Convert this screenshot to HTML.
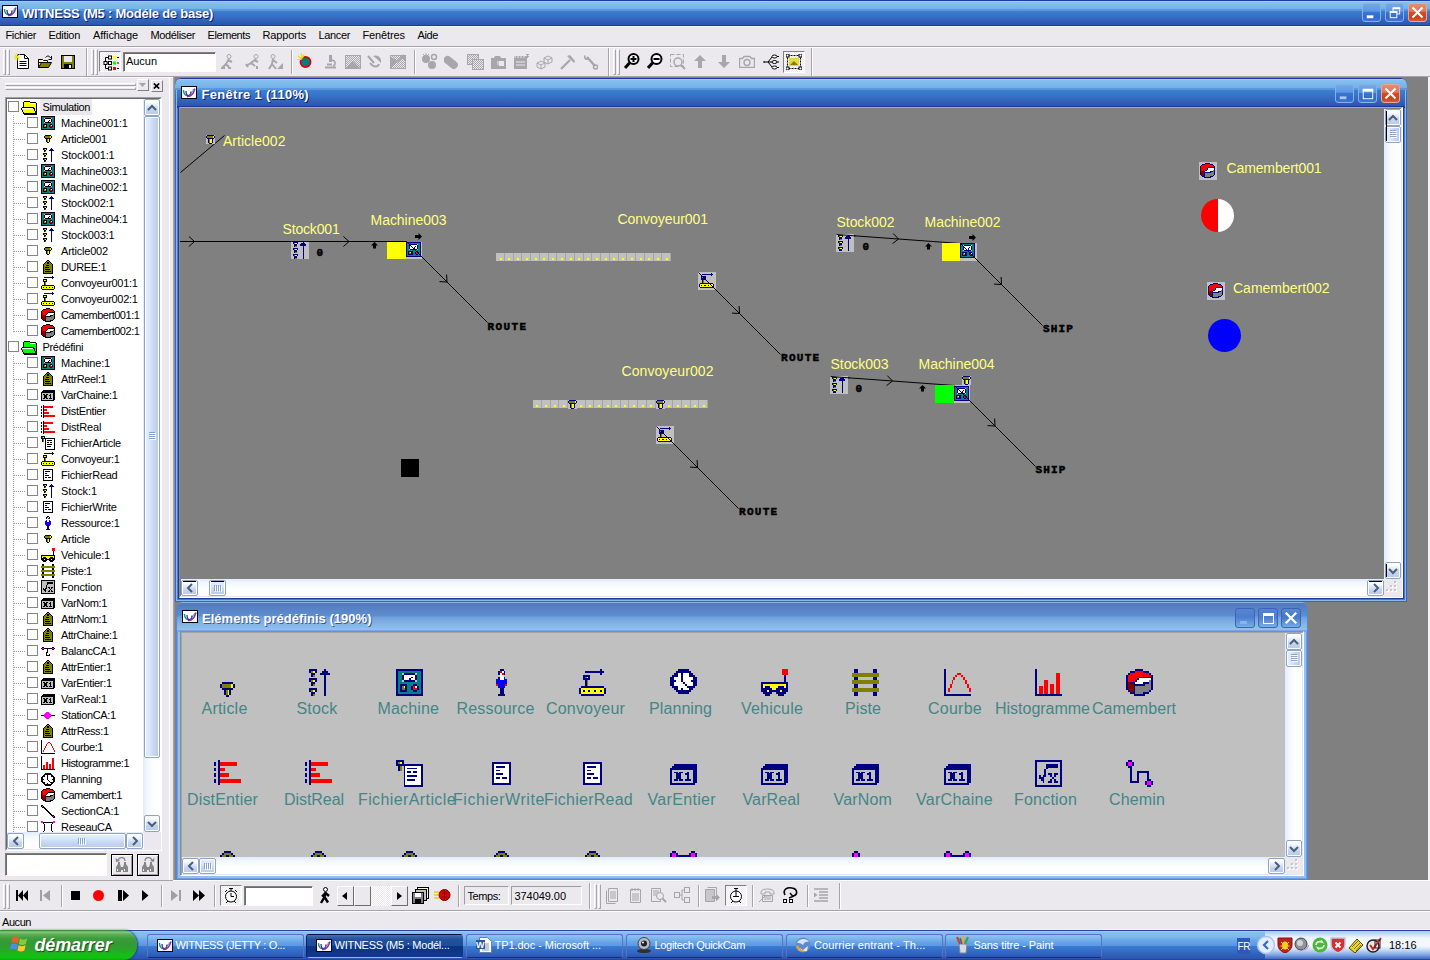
<!DOCTYPE html><html lang="fr"><head><meta charset="utf-8"><title>WITNESS (M5 : Modéle de base)</title><style>
html,body{margin:0;padding:0}
body{width:1430px;height:960px;overflow:hidden;position:relative;background:#ebe9ed;font-family:"Liberation Sans",sans-serif;font-size:11px;}
div,span.t,svg.ic,svg.ab{position:absolute;box-sizing:border-box}
span.t{white-space:nowrap;display:block}
.ttl{background:linear-gradient(#1f3da0 0,#1f3da0 1px,#9ccef4 1px,#9ccef4 2px,#86c2ec 2px,#72b0ea 9px,#5c98e0 9px,#5a94de 11px,#3a80d0 11px,#3672c6 16px,#3160b8 21px,#2c54b0 25px,#1a3a94 25px);}
.sunk{border:1px solid;border-color:#808080 #fff #fff #808080}
.sunk2{border:1px solid;border-color:#9d9da1 #fff #fff #9d9da1}
.btn3d{border:1px solid;border-color:#fff #6d6d6d #6d6d6d #fff;background:#ebe9ed}
.sbtn{background:linear-gradient(#e4edfd,#c6d6f8 60%,#b7caf5);border:1px solid #fff;border-radius:3px;box-shadow:inset 0 0 0 1px #b4c8f0}
.vtrack{background:linear-gradient(90deg,#f3f1ec,#fefefb 40%,#fefefb)}
</style></head><body><div class="ttl" style="left:0px;top:0px;width:1430px;height:26px;"></div><svg class="ab" style="left:2px;top:5px" width="16" height="13" viewBox="0 0 16 13"><rect x="0" y="0" width="16" height="13" fill="#000"/><rect x="1" y="1" width="14" height="11" fill="#fff"/><path d="M2.500 4C2.500 8 4.500 10.500 8 9.500" stroke="#0a9a8a" stroke-width="1.400" fill="none"/><path d="M5 5C5 8 6 10 8 9.500C9.500 9 10 7 10 5.500" stroke="#3a2a9c" stroke-width="1.300" fill="none"/><path d="M6 10.500C9.500 11 12.500 7.500 14 2.500" stroke="#9a2ab0" stroke-width="1.500" fill="none"/><path d="M9 8C10.500 7 12 5 12.500 3" stroke="#1a8a9a" stroke-width="0.800" fill="none"/></svg><span class="t" style="left:22px;top:6px;line-height:15px;font-size:13px;color:#fff;font-weight:bold;letter-spacing:-0.239px;text-shadow:1px 1px 0 #0a1e6e;">WITNESS (M5 : Modéle de base)</span><div style="left:1362px;top:3px;width:19px;height:19px;background:linear-gradient(#74a8e8 0,#5c98e4 42%,#3a74d4 50%,#3468cc 80%,#4078d4 100%);border:1px solid #86b0e8;border-radius:3px;"></div><svg class="ab" style="left:1362px;top:3px" width="19" height="19" viewBox="0 0 20 20"><rect x="5" y="13" width="7" height="3" fill="#fff"/></svg><div style="left:1385px;top:3px;width:19px;height:19px;background:linear-gradient(#74a8e8 0,#5c98e4 42%,#3a74d4 50%,#3468cc 80%,#4078d4 100%);border:1px solid #86b0e8;border-radius:3px;"></div><svg class="ab" style="left:1385px;top:3px" width="19" height="19" viewBox="0 0 20 20"><rect x="8.500" y="5.500" width="7" height="6" fill="none" stroke="#fff"/><rect x="8" y="4.500" width="8" height="2" fill="#fff"/><rect x="5.500" y="9.500" width="7" height="6" fill="#3c74d4" stroke="#fff"/><rect x="5" y="8.500" width="8" height="2" fill="#fff"/></svg><div style="left:1408px;top:3px;width:19px;height:19px;background:linear-gradient(#e08c74 0,#e47858 42%,#d44c24 50%,#cc4218 80%,#d85c38 100%);border:1px solid #e8a890;border-radius:3px;"></div><svg class="ab" style="left:1408px;top:3px" width="19" height="19" viewBox="0 0 20 20"><path d="M5.5 5.500L14.500 14.500M14.500 5.500L5.500 14.500" stroke="#fff" stroke-width="2.200" stroke-linecap="square"/></svg><div style="left:0px;top:26px;width:1430px;height:1px;background:#f6f4f4"></div><span class="t" style="left:5.5px;top:29px;line-height:12px;font-size:11px;color:#000;letter-spacing:-0.359px;">Fichier</span><span class="t" style="left:48.5px;top:29px;line-height:12px;font-size:11px;color:#000;letter-spacing:-0.306px;">Edition</span><span class="t" style="left:93px;top:29px;line-height:12px;font-size:11px;color:#000;letter-spacing:-0.075px;">Affichage</span><span class="t" style="left:150.5px;top:29px;line-height:12px;font-size:11px;color:#000;letter-spacing:-0.354px;">Modéliser</span><span class="t" style="left:207.5px;top:29px;line-height:12px;font-size:11px;color:#000;letter-spacing:-0.420px;">Elements</span><span class="t" style="left:262.5px;top:29px;line-height:12px;font-size:11px;color:#000;letter-spacing:-0.143px;">Rapports</span><span class="t" style="left:318.5px;top:29px;line-height:12px;font-size:11px;color:#000;letter-spacing:-0.357px;">Lancer</span><span class="t" style="left:362.5px;top:29px;line-height:12px;font-size:11px;color:#000;letter-spacing:-0.115px;">Fenêtres</span><span class="t" style="left:417.5px;top:29px;line-height:12px;font-size:11px;color:#000;letter-spacing:-0.383px;">Aide</span><div style="left:0px;top:46px;width:1430px;height:1px;background:#a6a4a8"></div><div style="left:0px;top:47px;width:1430px;height:1px;background:#fff"></div><div style="left:3px;top:49px;width:3px;height:26px;border-left:1px solid #fff;border-top:1px solid #fff;border-right:1px solid #a6a4a8;border-bottom:1px solid #a6a4a8"></div><div style="left:7px;top:49px;width:3px;height:26px;border-left:1px solid #fff;border-top:1px solid #fff;border-right:1px solid #a6a4a8;border-bottom:1px solid #a6a4a8"></div><div style="left:86px;top:48px;width:1px;height:28px;background:#a6a4a8"></div><div style="left:87px;top:48px;width:1px;height:28px;background:#fff"></div><div style="left:91px;top:49px;width:3px;height:26px;border-left:1px solid #fff;border-top:1px solid #fff;border-right:1px solid #a6a4a8;border-bottom:1px solid #a6a4a8"></div><div style="left:95px;top:49px;width:3px;height:26px;border-left:1px solid #fff;border-top:1px solid #fff;border-right:1px solid #a6a4a8;border-bottom:1px solid #a6a4a8"></div><div style="left:608px;top:48px;width:1px;height:28px;background:#a6a4a8"></div><div style="left:609px;top:48px;width:1px;height:28px;background:#fff"></div><div style="left:613px;top:49px;width:3px;height:26px;border-left:1px solid #fff;border-top:1px solid #fff;border-right:1px solid #a6a4a8;border-bottom:1px solid #a6a4a8"></div><div style="left:617px;top:49px;width:3px;height:26px;border-left:1px solid #fff;border-top:1px solid #fff;border-right:1px solid #a6a4a8;border-bottom:1px solid #a6a4a8"></div><div style="left:811px;top:48px;width:1px;height:28px;background:#a6a4a8"></div><div style="left:812px;top:48px;width:1px;height:28px;background:#fff"></div><div style="left:0px;top:76px;width:1430px;height:1px;background:#a6a4a8"></div><svg class="ab" style="left:14px;top:54px" width="16" height="15" viewBox="0 0 16 15"><path d="M3.500 0.500H10.500L14.500 4.500V14.500H3.500Z" fill="#fff" stroke="#000"/><path d="M10.500 0.500V4.500H14.500" fill="none" stroke="#000"/><path d="M5.500 7.500H12.500M5.500 9.500H12.500M5.500 11.500H12.500" stroke="#000"/><path d="M0.500 0.500L5.500 5.500M5.500 0.500L0.500 5.500M3 0V6.500M0 3H6.500" stroke="#e8e000" stroke-width="1"/></svg><svg class="ab" style="left:37px;top:54px" width="16" height="15" viewBox="0 0 16 15"><path d="M1.5 5.5H5.5L6.5 6.5H10.5V8.5H1.5Z" fill="#ffff80" stroke="#000"/><path d="M1.5 13.5L4.5 8.5H14.5L11.5 13.5Z" fill="#808000" stroke="#000"/><path d="M1.5 13.5V5.5" stroke="#000"/><path d="M8.5 3.5C10 1.5 12.5 1.5 13.5 4" fill="none" stroke="#000"/><path d="M14.5 2V5.5H11.5" fill="none" stroke="#000"/></svg><svg class="ab" style="left:61px;top:55px" width="14" height="14" viewBox="0 0 14 14"><rect x="0.5" y="0.5" width="13" height="13" fill="#808000" stroke="#000"/><rect x="3" y="1" width="8" height="6" fill="#ebe9ed"/><rect x="3" y="9" width="8" height="5" fill="#000"/><rect x="8" y="10" width="2" height="3" fill="#ebe9ed"/></svg><div style="left:99px;top:51px;width:22px;height:21px;background:repeating-conic-gradient(#fff 0 25%,#ebe9ed 0 50%) 0 0/2px 2px;border:1px solid;border-color:#808080 #fff #fff #808080"></div><svg class="ab" style="left:103px;top:55px" width="16" height="16" viewBox="0 0 16 16"><path d="M2.5 2.5V13.5M2.5 2.5H6M2.5 8H6M2.5 13.5H6" fill="none" stroke="#000"/><rect x="5.500" y="1" width="3" height="3" fill="#fff" stroke="#000"/><rect x="5.500" y="6.500" width="3" height="3" fill="#fff" stroke="#000"/><rect x="5.500" y="12" width="3" height="3" fill="#fff" stroke="#000"/><rect x="1" y="6.500" width="3" height="3" fill="#fff" stroke="#000"/><rect x="10" y="1" width="3" height="3" fill="#ff0"/><rect x="10" y="6.500" width="3" height="3" fill="#0f0"/><rect x="10" y="12" width="3" height="3" fill="#f00"/><path d="M14 2.500H16M14 8H16M14 13.500H16" stroke="#000"/></svg><div style="left:123px;top:52px;width:93px;height:20px;background:#fff;border:1px solid;border-color:#808080 #fff #fff #808080;box-shadow:inset 1px 1px 0 #6a6a6e"></div><span class="t" style="left:126px;top:55px;line-height:12px;font-size:11px;color:#000;letter-spacing:-0.041px;">Aucun</span><svg class="ab" style="left:220px;top:54px" width="16" height="16" viewBox="0 0 16 16"><circle cx="9" cy="2.500" r="2" fill="none" stroke="#a8a6aa"/><path d="M9 5L6 10L9 13M6 10L2 14M8 6L12 8M5 14H1M11 14H8" stroke="#a8a6aa" stroke-width="2" fill="none"/></svg><svg class="ab" style="left:245px;top:54px" width="16" height="16" viewBox="0 0 16 16"><circle cx="11" cy="2.500" r="2" fill="none" stroke="#a8a6aa"/><path d="M11 5L6 9L10 12M6 9L1 12M9 6L13 8M1 10L3 13M12 12V15" stroke="#a8a6aa" stroke-width="2" fill="none"/></svg><svg class="ab" style="left:268px;top:54px" width="16" height="16" viewBox="0 0 16 16"><circle cx="5" cy="2.500" r="2" fill="none" stroke="#a8a6aa"/><path d="M5 5L4 10L1 15M4 10L8 15M5 6L9 9" stroke="#a8a6aa" stroke-width="2" fill="none"/><path d="M9 15H15V9Z" fill="#a8a6aa"/></svg><div style="left:291px;top:50px;width:1px;height:24px;background:#a6a4a8"></div><div style="left:292px;top:50px;width:1px;height:24px;background:#fff"></div><svg class="ab" style="left:297px;top:53px" width="16" height="16" viewBox="0 0 16 16"><circle cx="8.500" cy="9" r="5" fill="#008080" stroke="#e00000" stroke-width="1.800"/><path d="M1 3L5 6M4 0.500L5.500 5M0.500 6.500H4.500M7 1.500L5.500 5" stroke="#e8e000" stroke-width="1.200"/></svg><svg class="ab" style="left:324px;top:54px" width="13" height="15" viewBox="0 0 13 15"><path d="M5 1H8V8H5Z" fill="#a8a6aa"/><path d="M8 6C12 7 12 11 9 12" fill="none" stroke="#a8a6aa" stroke-width="1.500"/><path d="M1 13.500H12M3 10.500H8" stroke="#a8a6aa" stroke-width="2"/></svg><div style="left:345px;top:55px;width:16px;height:14px;background:repeating-conic-gradient(#a8a6aa 0 25%,#ebe9ed 0 50%) 0 0/2px 2px;border:1px solid #a8a6aa"></div><svg class="ab" style="left:345px;top:55px" width="16" height="14" viewBox="0 0 16 14"><path d="M1 13L8 6L15 13Z" fill="#a8a6aa"/></svg><svg class="ab" style="left:366px;top:54px" width="17" height="16" viewBox="0 0 17 16"><path d="M2 2L8 9" stroke="#a8a6aa" stroke-width="2"/><path d="M7 2C12 0 16 4 15 9L11 5Z" fill="#a8a6aa"/><path d="M4 9C8 14 12 13 13 10" fill="none" stroke="#a8a6aa" stroke-width="2"/></svg><div style="left:390px;top:55px;width:16px;height:14px;background:repeating-conic-gradient(#a8a6aa 0 25%,#ebe9ed 0 50%) 0 0/2px 2px;border:1px solid #a8a6aa"></div><svg class="ab" style="left:390px;top:54px" width="16" height="15" viewBox="0 0 16 15"><path d="M1 14L8 7L1 3Z" fill="#a8a6aa"/><path d="M14 1L7 8" stroke="#a8a6aa" stroke-width="2"/><path d="M9 1H15V7Z" fill="#a8a6aa"/></svg><div style="left:414px;top:50px;width:1px;height:24px;background:#a6a4a8"></div><div style="left:415px;top:50px;width:1px;height:24px;background:#fff"></div><svg class="ab" style="left:421px;top:53px" width="18" height="17" viewBox="0 0 18 17"><circle cx="5" cy="6" r="4" fill="#a8a6aa"/><circle cx="11" cy="12" r="4" fill="#a8a6aa"/><circle cx="13" cy="4" r="2.500" fill="none" stroke="#a8a6aa" stroke-width="1.500"/><path d="M2 1L4 3M8 1L6 3M5 0V2" stroke="#a8a6aa"/></svg><svg class="ab" style="left:444px;top:55px" width="15" height="14" viewBox="0 0 15 14"><rect x="-1" y="3.500" width="16" height="8" rx="4" fill="#a8a6aa" transform="rotate(38 7 7)"/></svg><div style="left:467px;top:54px;width:12px;height:11px;background:repeating-conic-gradient(#a8a6aa 0 25%,#ebe9ed 0 50%) 0 0/2px 2px;border:1px solid #a8a6aa"></div><div style="left:472px;top:59px;width:12px;height:11px;background:repeating-conic-gradient(#a8a6aa 0 25%,#ebe9ed 0 50%) 0 0/2px 2px;border:1px solid #a8a6aa"></div><svg class="ab" style="left:491px;top:55px" width="16" height="14" viewBox="0 0 16 14"><path d="M0 3H3L4 1H9L10 3H15V14H0Z" fill="#a8a6aa"/><rect x="8" y="6" width="5" height="5" fill="#ebe9ed"/><path d="M6 7H9M6 9H9" stroke="#ebe9ed"/></svg><svg class="ab" style="left:513px;top:54px" width="17" height="16" viewBox="0 0 17 16"><rect x="1" y="2" width="13" height="13" fill="#a8a6aa"/><path d="M2 1V4M5 1V4M8 1V4M11 1V4M3 8H12M3 11H12" stroke="#ebe9ed"/><path d="M13 0L16 3M16 0L13 3M14.500 0V4" stroke="#a8a6aa"/></svg><svg class="ab" style="left:536px;top:54px" width="17" height="16" viewBox="0 0 17 16"><path d="M1 9L5 7L9 9L5 11ZM1 9V13L5 15V11M9 9V13L5 15" fill="none" stroke="#a8a6aa"/><path d="M8 4L12 2L16 4L12 6ZM8 4V8L12 10V6M16 4V8L12 10" fill="none" stroke="#a8a6aa"/></svg><svg class="ab" style="left:560px;top:54px" width="16" height="16" viewBox="0 0 16 16"><path d="M1 15L10 6" stroke="#a8a6aa" stroke-width="2.200"/><path d="M7 2L14 9L15 7L10 1Z" fill="#a8a6aa"/></svg><svg class="ab" style="left:584px;top:54px" width="14" height="16" viewBox="0 0 14 16"><path d="M3 3L11 12" stroke="#a8a6aa" stroke-width="2.400"/><path d="M1 1.500C0 4 2 6 4.500 5" fill="none" stroke="#a8a6aa" stroke-width="1.600"/><circle cx="11.500" cy="13" r="2" fill="none" stroke="#a8a6aa" stroke-width="1.500"/></svg><svg class="ab" style="left:624px;top:53px" width="16" height="16" viewBox="0 0 16 16"><circle cx="9.500" cy="6" r="5" fill="#fff" stroke="#000" stroke-width="2"/><path d="M5.500 10L1 15" stroke="#000" stroke-width="3"/><path d="M6.500 6H12.500" stroke="#000" stroke-width="2"/><path d="M9.500 3V9" stroke="#000" stroke-width="2"/></svg><svg class="ab" style="left:647px;top:53px" width="16" height="16" viewBox="0 0 16 16"><circle cx="9.500" cy="6" r="5" fill="#fff" stroke="#000" stroke-width="2"/><path d="M5.500 10L1 15" stroke="#000" stroke-width="3"/><path d="M6.500 6H12.500" stroke="#000" stroke-width="2"/></svg><svg class="ab" style="left:670px;top:54px" width="16" height="16" viewBox="0 0 16 16"><rect x="0.500" y="0.500" width="13" height="12" fill="none" stroke="#a8a6aa" stroke-dasharray="4 2"/><circle cx="8" cy="8" r="4" fill="none" stroke="#a8a6aa" stroke-width="1.500"/><path d="M11 11L15 15" stroke="#a8a6aa" stroke-width="2"/></svg><svg class="ab" style="left:694px;top:55px" width="12" height="13" viewBox="0 0 12 13"><path d="M6 0L12 6H8V13H4V6H0Z" fill="#a8a6aa"/></svg><svg class="ab" style="left:718px;top:55px" width="12" height="13" viewBox="0 0 12 13"><path d="M6 13L12 7H8V0H4V7H0Z" fill="#a8a6aa"/></svg><svg class="ab" style="left:739px;top:55px" width="16" height="13" viewBox="0 0 16 13"><path d="M0.500 3.500H3.500L5 1.500H11L12.500 3.500H15.500V12.500H0.500Z" fill="none" stroke="#a8a6aa" stroke-width="1.400"/><circle cx="8" cy="7.500" r="3" fill="none" stroke="#a8a6aa" stroke-width="1.400"/></svg><svg class="ab" style="left:763px;top:54px" width="16" height="16" viewBox="0 0 16 16"><path d="M1 8H5M5 8L9 3M5 8L9 13M5 8H9" fill="none" stroke="#000"/><ellipse cx="11.500" cy="2.500" rx="2.500" ry="1.500" fill="#fff" stroke="#000"/><ellipse cx="11.500" cy="8" rx="2.500" ry="1.500" fill="#fff" stroke="#000"/><ellipse cx="11.500" cy="13.500" rx="2.500" ry="1.500" fill="#fff" stroke="#000"/><path d="M14 2.500H16M14 8H16M14 13.500H16M0 8H2" stroke="#000"/></svg><div style="left:783px;top:51px;width:22px;height:22px;background:repeating-conic-gradient(#fff 0 25%,#ebe9ed 0 50%) 0 0/2px 2px;border:1px solid;border-color:#808080 #fff #fff #808080"></div><svg class="ab" style="left:786px;top:54px" width="16" height="16" viewBox="0 0 16 16"><rect x="3" y="4" width="10" height="8" fill="#e8d840"/><path d="M4 11L8 7L12 11Z" fill="#808000"/><rect x="1.500" y="1.500" width="13" height="13" fill="none" stroke="#000" stroke-dasharray="2 1"/><rect x="0" y="0" width="3" height="3" fill="#fff" stroke="#000"/><rect x="13" y="0" width="3" height="3" fill="#fff" stroke="#000"/><rect x="0" y="13" width="3" height="3" fill="#fff" stroke="#000"/><rect x="13" y="13" width="3" height="3" fill="#fff" stroke="#000"/></svg><div style="left:0px;top:77px;width:173px;height:1px;background:#fff"></div><div style="left:169px;top:78px;width:1px;height:802px;background:#fff"></div><div style="left:5px;top:83px;width:131px;height:3px;border-top:1px solid #fff;border-left:1px solid #fff;border-bottom:1px solid #a6a4a8;border-right:1px solid #a6a4a8"></div><div style="left:5px;top:87px;width:131px;height:3px;border-top:1px solid #fff;border-left:1px solid #fff;border-bottom:1px solid #a6a4a8;border-right:1px solid #a6a4a8"></div><div style="left:137px;top:79px;width:12px;height:12px;border:1px solid;border-color:#fff #808080 #808080 #fff"></div><svg class="ab" style="left:139px;top:83px" width="7" height="4"><path d="M0 0H7L3.5 4Z" fill="#a6a4a8"/></svg><div style="left:151px;top:80px;width:12px;height:12px;border:1px solid;border-color:#fff #808080 #808080 #fff"></div><svg class="ab" style="left:153px;top:83px" width="7" height="6"><path d="M0.800 0.500L6.200 5.500M6.200 0.500L0.800 5.500" stroke="#000" stroke-width="1.700"/></svg><div style="left:5px;top:97px;width:157px;height:754px;background:#fff;border:1px solid;border-color:#a0a0a4 #fff #fff #a0a0a4"></div><div style="left:6px;top:98px;width:155px;height:752px;border:1px solid;border-color:#6a6a6e #ebe9ed #ebe9ed #6a6a6e"></div><div style="left:7px;top:99px;width:138px;height:734px;overflow:hidden"><div style="left:6px;top:16px;width:1px;height:218px;background:repeating-linear-gradient(#a0a0a0 0 1px,transparent 1px 2px)"></div><div style="left:6px;top:256px;width:1px;height:800px;background:repeating-linear-gradient(#a0a0a0 0 1px,transparent 1px 2px)"></div><div style="left:1px;top:2px;width:11px;height:11px;background:#fff;border:1px solid #848484"></div><svg class="ic" style="left:14px;top:2px" width="16" height="14" viewBox="0 0 16 14" shape-rendering="crispEdges"><path fill="#000" d="M3 0h6v1h-6zM2 1h1v1h-1zM9 1h6v1h-6zM2 2h1v1h-1zM15 2h1v1h-1zM2 3h1v1h-1zM15 3h1v1h-1zM2 4h1v1h-1zM15 4h1v1h-1zM2 5h1v1h-1zM15 5h1v1h-1zM1 6h12v1h-12zM15 6h1v1h-1zM0 7h1v1h-1zM12 7h2v1h-2zM15 7h1v1h-1zM0 8h1v1h-1zM13 8h1v1h-1zM15 8h1v1h-1zM1 9h1v1h-1zM13 9h1v1h-1zM15 9h1v1h-1zM1 10h1v1h-1zM14 10h2v1h-2zM2 11h1v1h-1zM14 11h2v1h-2zM2 12h14v1h-14zM3 13h13v1h-13z"/><path fill="#ff0" d="M3 1h6v1h-6zM3 2h6v1h-6zM14 2h1v1h-1zM3 3h12v1h-12zM3 4h12v1h-12zM3 5h12v1h-12zM13 6h2v1h-2zM14 7h1v1h-1zM1 8h12v1h-12zM14 8h1v1h-1zM2 9h11v1h-11zM14 9h1v1h-1zM2 10h12v1h-12zM3 11h11v1h-11z"/><path fill="#fff" d="M9 2h5v1h-5zM1 7h11v1h-11z"/></svg><div style="left:33px;top:0px;width:52px;height:16px;background:#ebe9ed"></div><span class="t" style="left:35.5px;top:2px;line-height:12px;font-size:11px;color:#000;letter-spacing:-0.386px;">Simulation</span><div style="left:7px;top:24px;width:12px;height:1px;background:repeating-linear-gradient(90deg,#a0a0a0 0 1px,transparent 1px 2px)"></div><div style="left:20px;top:18px;width:11px;height:11px;background:#fff;border:1px solid #848484"></div><svg class="ic" style="left:34px;top:17px" width="14" height="14" viewBox="0 0 14 14" shape-rendering="crispEdges"><path fill="#000" d="M0 0h14v1h-14zM0 1h1v1h-1zM13 1h1v1h-1zM0 2h1v1h-1zM4 2h6v1h-6zM13 2h1v1h-1zM0 3h1v1h-1zM3 3h1v1h-1zM10 3h1v1h-1zM13 3h1v1h-1zM0 4h1v1h-1zM3 4h1v1h-1zM8 4h1v1h-1zM10 4h1v1h-1zM13 4h1v1h-1zM0 5h1v1h-1zM3 5h1v1h-1zM7 5h1v1h-1zM10 5h1v1h-1zM13 5h1v1h-1zM0 6h1v1h-1zM4 6h6v1h-6zM13 6h1v1h-1zM0 7h1v1h-1zM13 7h1v1h-1zM0 8h1v1h-1zM2 8h4v1h-4zM9 8h2v1h-2zM13 8h1v1h-1zM0 9h1v1h-1zM2 9h1v1h-1zM5 9h1v1h-1zM8 9h1v1h-1zM11 9h1v1h-1zM13 9h1v1h-1zM0 10h1v1h-1zM2 10h1v1h-1zM5 10h1v1h-1zM8 10h1v1h-1zM11 10h1v1h-1zM13 10h1v1h-1zM0 11h1v1h-1zM2 11h4v1h-4zM9 11h2v1h-2zM13 11h1v1h-1zM0 12h1v1h-1zM13 12h1v1h-1zM0 13h14v1h-14z"/><path fill="#008080" d="M1 1h12v1h-12zM1 2h2v1h-2zM11 2h2v1h-2zM1 3h2v1h-2zM11 3h2v1h-2zM1 4h2v1h-2zM11 4h2v1h-2zM1 5h2v1h-2zM11 5h2v1h-2zM1 6h2v1h-2zM11 6h2v1h-2zM1 7h12v1h-12zM1 8h1v1h-1zM6 8h3v1h-3zM11 8h2v1h-2zM1 9h1v1h-1zM6 9h2v1h-2zM12 9h1v1h-1zM1 10h1v1h-1zM6 10h2v1h-2zM12 10h1v1h-1zM1 11h1v1h-1zM6 11h3v1h-3zM11 11h2v1h-2zM1 12h12v1h-12z"/><path fill="#c0c0c0" d="M3 2h1v1h-1zM10 2h1v1h-1zM3 6h1v1h-1zM10 6h1v1h-1z"/><path fill="#fff" d="M4 3h6v1h-6zM4 4h4v1h-4zM9 4h1v1h-1zM4 5h3v1h-3zM8 5h2v1h-2zM10 9h1v1h-1z"/><path fill="#808000" d="M3 9h1v1h-1zM3 10h2v1h-2z"/><path fill="#ff0" d="M4 9h1v1h-1z"/><path fill="#f00" d="M9 9h1v1h-1zM9 10h2v1h-2z"/></svg><span class="t" style="left:54px;top:18px;line-height:12px;font-size:11px;color:#000;letter-spacing:-0.201px;">Machine001:1</span><div style="left:7px;top:40px;width:12px;height:1px;background:repeating-linear-gradient(90deg,#a0a0a0 0 1px,transparent 1px 2px)"></div><div style="left:20px;top:34px;width:11px;height:11px;background:#fff;border:1px solid #848484"></div><svg class="ic" style="left:37px;top:36px" width="8" height="8" viewBox="0 0 8 8" shape-rendering="crispEdges"><path fill="#000" d="M1 0h6v1h-6zM0 1h1v1h-1zM7 1h1v1h-1zM0 2h1v1h-1zM7 2h1v1h-1zM1 3h6v1h-6zM2 4h1v1h-1zM5 4h1v1h-1zM2 5h1v1h-1zM5 5h1v1h-1zM2 6h1v1h-1zM5 6h1v1h-1zM3 7h2v1h-2z"/><path fill="#808000" d="M1 1h5v1h-5zM1 2h5v1h-5zM3 4h1v1h-1zM3 5h1v1h-1zM3 6h1v1h-1z"/><path fill="#ff0" d="M6 1h1v1h-1zM6 2h1v1h-1zM4 4h1v1h-1zM4 5h1v1h-1zM4 6h1v1h-1z"/></svg><span class="t" style="left:54px;top:34px;line-height:12px;font-size:11px;color:#000;letter-spacing:-0.322px;">Article001</span><div style="left:7px;top:56px;width:12px;height:1px;background:repeating-linear-gradient(90deg,#a0a0a0 0 1px,transparent 1px 2px)"></div><div style="left:20px;top:50px;width:11px;height:11px;background:#fff;border:1px solid #848484"></div><svg class="ic" style="left:36px;top:49px" width="11" height="14" viewBox="0 0 11 14" shape-rendering="crispEdges"><path fill="#000" d="M0 0h4v1h-4zM0 1h1v1h-1zM3 1h1v1h-1zM1 2h2v1h-2zM1 3h1v1h-1zM0 5h4v1h-4zM0 6h1v1h-1zM3 6h1v1h-1zM1 7h2v1h-2zM1 8h1v1h-1zM0 10h4v1h-4zM0 11h1v1h-1zM3 11h1v1h-1zM1 12h2v1h-2zM1 13h1v1h-1z"/><path fill="#000080" d="M8 0h1v1h-1zM7 1h3v1h-3zM6 2h5v1h-5zM8 3h1v1h-1zM8 4h1v1h-1zM8 5h1v1h-1zM8 6h1v1h-1zM8 7h1v1h-1zM8 8h1v1h-1zM8 9h1v1h-1zM8 10h1v1h-1zM8 11h1v1h-1zM8 12h1v1h-1zM8 13h1v1h-1z"/><path fill="#808000" d="M1 1h1v1h-1zM2 3h1v1h-1zM1 6h1v1h-1zM2 8h1v1h-1zM1 11h1v1h-1zM2 13h1v1h-1z"/><path fill="#ff0" d="M2 1h1v1h-1zM2 6h1v1h-1zM2 11h1v1h-1z"/></svg><span class="t" style="left:54px;top:50px;line-height:12px;font-size:11px;color:#000;letter-spacing:-0.145px;">Stock001:1</span><div style="left:7px;top:72px;width:12px;height:1px;background:repeating-linear-gradient(90deg,#a0a0a0 0 1px,transparent 1px 2px)"></div><div style="left:20px;top:66px;width:11px;height:11px;background:#fff;border:1px solid #848484"></div><svg class="ic" style="left:34px;top:65px" width="14" height="14" viewBox="0 0 14 14" shape-rendering="crispEdges"><path fill="#000" d="M0 0h14v1h-14zM0 1h1v1h-1zM13 1h1v1h-1zM0 2h1v1h-1zM4 2h6v1h-6zM13 2h1v1h-1zM0 3h1v1h-1zM3 3h1v1h-1zM10 3h1v1h-1zM13 3h1v1h-1zM0 4h1v1h-1zM3 4h1v1h-1zM8 4h1v1h-1zM10 4h1v1h-1zM13 4h1v1h-1zM0 5h1v1h-1zM3 5h1v1h-1zM7 5h1v1h-1zM10 5h1v1h-1zM13 5h1v1h-1zM0 6h1v1h-1zM4 6h6v1h-6zM13 6h1v1h-1zM0 7h1v1h-1zM13 7h1v1h-1zM0 8h1v1h-1zM2 8h4v1h-4zM9 8h2v1h-2zM13 8h1v1h-1zM0 9h1v1h-1zM2 9h1v1h-1zM5 9h1v1h-1zM8 9h1v1h-1zM11 9h1v1h-1zM13 9h1v1h-1zM0 10h1v1h-1zM2 10h1v1h-1zM5 10h1v1h-1zM8 10h1v1h-1zM11 10h1v1h-1zM13 10h1v1h-1zM0 11h1v1h-1zM2 11h4v1h-4zM9 11h2v1h-2zM13 11h1v1h-1zM0 12h1v1h-1zM13 12h1v1h-1zM0 13h14v1h-14z"/><path fill="#008080" d="M1 1h12v1h-12zM1 2h2v1h-2zM11 2h2v1h-2zM1 3h2v1h-2zM11 3h2v1h-2zM1 4h2v1h-2zM11 4h2v1h-2zM1 5h2v1h-2zM11 5h2v1h-2zM1 6h2v1h-2zM11 6h2v1h-2zM1 7h12v1h-12zM1 8h1v1h-1zM6 8h3v1h-3zM11 8h2v1h-2zM1 9h1v1h-1zM6 9h2v1h-2zM12 9h1v1h-1zM1 10h1v1h-1zM6 10h2v1h-2zM12 10h1v1h-1zM1 11h1v1h-1zM6 11h3v1h-3zM11 11h2v1h-2zM1 12h12v1h-12z"/><path fill="#c0c0c0" d="M3 2h1v1h-1zM10 2h1v1h-1zM3 6h1v1h-1zM10 6h1v1h-1z"/><path fill="#fff" d="M4 3h6v1h-6zM4 4h4v1h-4zM9 4h1v1h-1zM4 5h3v1h-3zM8 5h2v1h-2zM10 9h1v1h-1z"/><path fill="#808000" d="M3 9h1v1h-1zM3 10h2v1h-2z"/><path fill="#ff0" d="M4 9h1v1h-1z"/><path fill="#f00" d="M9 9h1v1h-1zM9 10h2v1h-2z"/></svg><span class="t" style="left:54px;top:66px;line-height:12px;font-size:11px;color:#000;letter-spacing:-0.201px;">Machine003:1</span><div style="left:7px;top:88px;width:12px;height:1px;background:repeating-linear-gradient(90deg,#a0a0a0 0 1px,transparent 1px 2px)"></div><div style="left:20px;top:82px;width:11px;height:11px;background:#fff;border:1px solid #848484"></div><svg class="ic" style="left:34px;top:81px" width="14" height="14" viewBox="0 0 14 14" shape-rendering="crispEdges"><path fill="#000" d="M0 0h14v1h-14zM0 1h1v1h-1zM13 1h1v1h-1zM0 2h1v1h-1zM4 2h6v1h-6zM13 2h1v1h-1zM0 3h1v1h-1zM3 3h1v1h-1zM10 3h1v1h-1zM13 3h1v1h-1zM0 4h1v1h-1zM3 4h1v1h-1zM8 4h1v1h-1zM10 4h1v1h-1zM13 4h1v1h-1zM0 5h1v1h-1zM3 5h1v1h-1zM7 5h1v1h-1zM10 5h1v1h-1zM13 5h1v1h-1zM0 6h1v1h-1zM4 6h6v1h-6zM13 6h1v1h-1zM0 7h1v1h-1zM13 7h1v1h-1zM0 8h1v1h-1zM2 8h4v1h-4zM9 8h2v1h-2zM13 8h1v1h-1zM0 9h1v1h-1zM2 9h1v1h-1zM5 9h1v1h-1zM8 9h1v1h-1zM11 9h1v1h-1zM13 9h1v1h-1zM0 10h1v1h-1zM2 10h1v1h-1zM5 10h1v1h-1zM8 10h1v1h-1zM11 10h1v1h-1zM13 10h1v1h-1zM0 11h1v1h-1zM2 11h4v1h-4zM9 11h2v1h-2zM13 11h1v1h-1zM0 12h1v1h-1zM13 12h1v1h-1zM0 13h14v1h-14z"/><path fill="#008080" d="M1 1h12v1h-12zM1 2h2v1h-2zM11 2h2v1h-2zM1 3h2v1h-2zM11 3h2v1h-2zM1 4h2v1h-2zM11 4h2v1h-2zM1 5h2v1h-2zM11 5h2v1h-2zM1 6h2v1h-2zM11 6h2v1h-2zM1 7h12v1h-12zM1 8h1v1h-1zM6 8h3v1h-3zM11 8h2v1h-2zM1 9h1v1h-1zM6 9h2v1h-2zM12 9h1v1h-1zM1 10h1v1h-1zM6 10h2v1h-2zM12 10h1v1h-1zM1 11h1v1h-1zM6 11h3v1h-3zM11 11h2v1h-2zM1 12h12v1h-12z"/><path fill="#c0c0c0" d="M3 2h1v1h-1zM10 2h1v1h-1zM3 6h1v1h-1zM10 6h1v1h-1z"/><path fill="#fff" d="M4 3h6v1h-6zM4 4h4v1h-4zM9 4h1v1h-1zM4 5h3v1h-3zM8 5h2v1h-2zM10 9h1v1h-1z"/><path fill="#808000" d="M3 9h1v1h-1zM3 10h2v1h-2z"/><path fill="#ff0" d="M4 9h1v1h-1z"/><path fill="#f00" d="M9 9h1v1h-1zM9 10h2v1h-2z"/></svg><span class="t" style="left:54px;top:82px;line-height:12px;font-size:11px;color:#000;letter-spacing:-0.201px;">Machine002:1</span><div style="left:7px;top:104px;width:12px;height:1px;background:repeating-linear-gradient(90deg,#a0a0a0 0 1px,transparent 1px 2px)"></div><div style="left:20px;top:98px;width:11px;height:11px;background:#fff;border:1px solid #848484"></div><svg class="ic" style="left:36px;top:97px" width="11" height="14" viewBox="0 0 11 14" shape-rendering="crispEdges"><path fill="#000" d="M0 0h4v1h-4zM0 1h1v1h-1zM3 1h1v1h-1zM1 2h2v1h-2zM1 3h1v1h-1zM0 5h4v1h-4zM0 6h1v1h-1zM3 6h1v1h-1zM1 7h2v1h-2zM1 8h1v1h-1zM0 10h4v1h-4zM0 11h1v1h-1zM3 11h1v1h-1zM1 12h2v1h-2zM1 13h1v1h-1z"/><path fill="#000080" d="M8 0h1v1h-1zM7 1h3v1h-3zM6 2h5v1h-5zM8 3h1v1h-1zM8 4h1v1h-1zM8 5h1v1h-1zM8 6h1v1h-1zM8 7h1v1h-1zM8 8h1v1h-1zM8 9h1v1h-1zM8 10h1v1h-1zM8 11h1v1h-1zM8 12h1v1h-1zM8 13h1v1h-1z"/><path fill="#808000" d="M1 1h1v1h-1zM2 3h1v1h-1zM1 6h1v1h-1zM2 8h1v1h-1zM1 11h1v1h-1zM2 13h1v1h-1z"/><path fill="#ff0" d="M2 1h1v1h-1zM2 6h1v1h-1zM2 11h1v1h-1z"/></svg><span class="t" style="left:54px;top:98px;line-height:12px;font-size:11px;color:#000;letter-spacing:-0.145px;">Stock002:1</span><div style="left:7px;top:120px;width:12px;height:1px;background:repeating-linear-gradient(90deg,#a0a0a0 0 1px,transparent 1px 2px)"></div><div style="left:20px;top:114px;width:11px;height:11px;background:#fff;border:1px solid #848484"></div><svg class="ic" style="left:34px;top:113px" width="14" height="14" viewBox="0 0 14 14" shape-rendering="crispEdges"><path fill="#000" d="M0 0h14v1h-14zM0 1h1v1h-1zM13 1h1v1h-1zM0 2h1v1h-1zM4 2h6v1h-6zM13 2h1v1h-1zM0 3h1v1h-1zM3 3h1v1h-1zM10 3h1v1h-1zM13 3h1v1h-1zM0 4h1v1h-1zM3 4h1v1h-1zM8 4h1v1h-1zM10 4h1v1h-1zM13 4h1v1h-1zM0 5h1v1h-1zM3 5h1v1h-1zM7 5h1v1h-1zM10 5h1v1h-1zM13 5h1v1h-1zM0 6h1v1h-1zM4 6h6v1h-6zM13 6h1v1h-1zM0 7h1v1h-1zM13 7h1v1h-1zM0 8h1v1h-1zM2 8h4v1h-4zM9 8h2v1h-2zM13 8h1v1h-1zM0 9h1v1h-1zM2 9h1v1h-1zM5 9h1v1h-1zM8 9h1v1h-1zM11 9h1v1h-1zM13 9h1v1h-1zM0 10h1v1h-1zM2 10h1v1h-1zM5 10h1v1h-1zM8 10h1v1h-1zM11 10h1v1h-1zM13 10h1v1h-1zM0 11h1v1h-1zM2 11h4v1h-4zM9 11h2v1h-2zM13 11h1v1h-1zM0 12h1v1h-1zM13 12h1v1h-1zM0 13h14v1h-14z"/><path fill="#008080" d="M1 1h12v1h-12zM1 2h2v1h-2zM11 2h2v1h-2zM1 3h2v1h-2zM11 3h2v1h-2zM1 4h2v1h-2zM11 4h2v1h-2zM1 5h2v1h-2zM11 5h2v1h-2zM1 6h2v1h-2zM11 6h2v1h-2zM1 7h12v1h-12zM1 8h1v1h-1zM6 8h3v1h-3zM11 8h2v1h-2zM1 9h1v1h-1zM6 9h2v1h-2zM12 9h1v1h-1zM1 10h1v1h-1zM6 10h2v1h-2zM12 10h1v1h-1zM1 11h1v1h-1zM6 11h3v1h-3zM11 11h2v1h-2zM1 12h12v1h-12z"/><path fill="#c0c0c0" d="M3 2h1v1h-1zM10 2h1v1h-1zM3 6h1v1h-1zM10 6h1v1h-1z"/><path fill="#fff" d="M4 3h6v1h-6zM4 4h4v1h-4zM9 4h1v1h-1zM4 5h3v1h-3zM8 5h2v1h-2zM10 9h1v1h-1z"/><path fill="#808000" d="M3 9h1v1h-1zM3 10h2v1h-2z"/><path fill="#ff0" d="M4 9h1v1h-1z"/><path fill="#f00" d="M9 9h1v1h-1zM9 10h2v1h-2z"/></svg><span class="t" style="left:54px;top:114px;line-height:12px;font-size:11px;color:#000;letter-spacing:-0.201px;">Machine004:1</span><div style="left:7px;top:136px;width:12px;height:1px;background:repeating-linear-gradient(90deg,#a0a0a0 0 1px,transparent 1px 2px)"></div><div style="left:20px;top:130px;width:11px;height:11px;background:#fff;border:1px solid #848484"></div><svg class="ic" style="left:36px;top:129px" width="11" height="14" viewBox="0 0 11 14" shape-rendering="crispEdges"><path fill="#000" d="M0 0h4v1h-4zM0 1h1v1h-1zM3 1h1v1h-1zM1 2h2v1h-2zM1 3h1v1h-1zM0 5h4v1h-4zM0 6h1v1h-1zM3 6h1v1h-1zM1 7h2v1h-2zM1 8h1v1h-1zM0 10h4v1h-4zM0 11h1v1h-1zM3 11h1v1h-1zM1 12h2v1h-2zM1 13h1v1h-1z"/><path fill="#000080" d="M8 0h1v1h-1zM7 1h3v1h-3zM6 2h5v1h-5zM8 3h1v1h-1zM8 4h1v1h-1zM8 5h1v1h-1zM8 6h1v1h-1zM8 7h1v1h-1zM8 8h1v1h-1zM8 9h1v1h-1zM8 10h1v1h-1zM8 11h1v1h-1zM8 12h1v1h-1zM8 13h1v1h-1z"/><path fill="#808000" d="M1 1h1v1h-1zM2 3h1v1h-1zM1 6h1v1h-1zM2 8h1v1h-1zM1 11h1v1h-1zM2 13h1v1h-1z"/><path fill="#ff0" d="M2 1h1v1h-1zM2 6h1v1h-1zM2 11h1v1h-1z"/></svg><span class="t" style="left:54px;top:130px;line-height:12px;font-size:11px;color:#000;letter-spacing:-0.145px;">Stock003:1</span><div style="left:7px;top:152px;width:12px;height:1px;background:repeating-linear-gradient(90deg,#a0a0a0 0 1px,transparent 1px 2px)"></div><div style="left:20px;top:146px;width:11px;height:11px;background:#fff;border:1px solid #848484"></div><svg class="ic" style="left:37px;top:148px" width="8" height="8" viewBox="0 0 8 8" shape-rendering="crispEdges"><path fill="#000" d="M1 0h6v1h-6zM0 1h1v1h-1zM7 1h1v1h-1zM0 2h1v1h-1zM7 2h1v1h-1zM1 3h6v1h-6zM2 4h1v1h-1zM5 4h1v1h-1zM2 5h1v1h-1zM5 5h1v1h-1zM2 6h1v1h-1zM5 6h1v1h-1zM3 7h2v1h-2z"/><path fill="#808000" d="M1 1h5v1h-5zM1 2h5v1h-5zM3 4h1v1h-1zM3 5h1v1h-1zM3 6h1v1h-1z"/><path fill="#ff0" d="M6 1h1v1h-1zM6 2h1v1h-1zM4 4h1v1h-1zM4 5h1v1h-1zM4 6h1v1h-1z"/></svg><span class="t" style="left:54px;top:146px;line-height:12px;font-size:11px;color:#000;letter-spacing:-0.202px;">Article002</span><div style="left:7px;top:168px;width:12px;height:1px;background:repeating-linear-gradient(90deg,#a0a0a0 0 1px,transparent 1px 2px)"></div><div style="left:20px;top:162px;width:11px;height:11px;background:#fff;border:1px solid #848484"></div><svg class="ic" style="left:36px;top:161px" width="10" height="14" viewBox="0 0 10 14" shape-rendering="crispEdges"><path fill="#000" d="M4 0h2v1h-2zM3 1h1v1h-1zM6 1h1v1h-1zM2 2h1v1h-1zM4 2h2v1h-2zM7 2h1v1h-1zM1 3h1v1h-1zM4 3h2v1h-2zM8 3h1v1h-1zM0 4h1v1h-1zM9 4h1v1h-1zM0 5h1v1h-1zM3 5h3v1h-3zM9 5h1v1h-1zM0 6h1v1h-1zM9 6h1v1h-1zM0 7h1v1h-1zM2 7h4v1h-4zM9 7h1v1h-1zM0 8h1v1h-1zM9 8h1v1h-1zM0 9h1v1h-1zM2 9h5v1h-5zM9 9h1v1h-1zM0 10h1v1h-1zM9 10h1v1h-1zM0 11h1v1h-1zM2 11h6v1h-6zM9 11h1v1h-1zM0 12h1v1h-1zM9 12h1v1h-1zM0 13h10v1h-10z"/><path fill="#808000" d="M4 1h2v1h-2zM3 2h1v1h-1zM6 2h1v1h-1zM2 3h2v1h-2zM6 3h2v1h-2zM1 4h8v1h-8zM1 5h2v1h-2zM6 5h3v1h-3zM1 6h8v1h-8zM1 7h1v1h-1zM6 7h3v1h-3zM1 8h8v1h-8zM1 9h1v1h-1zM7 9h2v1h-2zM1 10h8v1h-8zM1 11h1v1h-1zM8 11h1v1h-1zM1 12h8v1h-8z"/></svg><span class="t" style="left:54px;top:162px;line-height:12px;font-size:11px;color:#000;letter-spacing:-0.327px;">DUREE:1</span><div style="left:7px;top:184px;width:12px;height:1px;background:repeating-linear-gradient(90deg,#a0a0a0 0 1px,transparent 1px 2px)"></div><div style="left:20px;top:178px;width:11px;height:11px;background:#fff;border:1px solid #848484"></div><svg class="ic" style="left:34px;top:177px" width="14" height="14" viewBox="0 0 14 14" shape-rendering="crispEdges"><path fill="#000080" d="M11 0h1v1h-1zM3 1h10v1h-10zM11 2h1v1h-1zM1 9h12v1h-12zM0 10h1v1h-1zM13 10h1v1h-1zM0 11h1v1h-1zM13 11h1v1h-1zM0 12h1v1h-1zM13 12h1v1h-1zM1 13h12v1h-12z"/><path fill="#000" d="M2 3h4v1h-4zM2 4h1v1h-1zM5 4h1v1h-1zM2 5h4v1h-4zM3 6h1v1h-1zM3 7h1v1h-1zM3 8h1v1h-1zM2 11h1v1h-1zM5 11h1v1h-1zM8 11h1v1h-1zM11 11h1v1h-1z"/><path fill="#ff0" d="M3 4h2v1h-2zM1 10h12v1h-12zM1 11h1v1h-1zM3 11h2v1h-2zM6 11h2v1h-2zM9 11h2v1h-2zM12 11h1v1h-1zM1 12h12v1h-12z"/><path fill="#808000" d="M4 6h1v1h-1zM4 7h1v1h-1zM4 8h1v1h-1z"/></svg><span class="t" style="left:54px;top:178px;line-height:12px;font-size:11px;color:#000;letter-spacing:-0.295px;">Convoyeur001:1</span><div style="left:7px;top:200px;width:12px;height:1px;background:repeating-linear-gradient(90deg,#a0a0a0 0 1px,transparent 1px 2px)"></div><div style="left:20px;top:194px;width:11px;height:11px;background:#fff;border:1px solid #848484"></div><svg class="ic" style="left:34px;top:193px" width="14" height="14" viewBox="0 0 14 14" shape-rendering="crispEdges"><path fill="#000080" d="M11 0h1v1h-1zM3 1h10v1h-10zM11 2h1v1h-1zM1 9h12v1h-12zM0 10h1v1h-1zM13 10h1v1h-1zM0 11h1v1h-1zM13 11h1v1h-1zM0 12h1v1h-1zM13 12h1v1h-1zM1 13h12v1h-12z"/><path fill="#000" d="M2 3h4v1h-4zM2 4h1v1h-1zM5 4h1v1h-1zM2 5h4v1h-4zM3 6h1v1h-1zM3 7h1v1h-1zM3 8h1v1h-1zM2 11h1v1h-1zM5 11h1v1h-1zM8 11h1v1h-1zM11 11h1v1h-1z"/><path fill="#ff0" d="M3 4h2v1h-2zM1 10h12v1h-12zM1 11h1v1h-1zM3 11h2v1h-2zM6 11h2v1h-2zM9 11h2v1h-2zM12 11h1v1h-1zM1 12h12v1h-12z"/><path fill="#808000" d="M4 6h1v1h-1zM4 7h1v1h-1zM4 8h1v1h-1z"/></svg><span class="t" style="left:54px;top:194px;line-height:12px;font-size:11px;color:#000;letter-spacing:-0.295px;">Convoyeur002:1</span><div style="left:7px;top:216px;width:12px;height:1px;background:repeating-linear-gradient(90deg,#a0a0a0 0 1px,transparent 1px 2px)"></div><div style="left:20px;top:210px;width:11px;height:11px;background:#fff;border:1px solid #848484"></div><svg class="ic" style="left:34px;top:209px" width="14" height="14" viewBox="0 0 14 14" shape-rendering="crispEdges"><path fill="#000" d="M5 0h4v1h-4zM2 1h3v1h-3zM9 1h3v1h-3zM1 2h1v1h-1zM12 2h1v1h-1zM0 3h1v1h-1zM13 3h1v1h-1zM0 4h1v1h-1zM7 4h7v1h-7zM0 5h1v1h-1zM6 5h1v1h-1zM13 5h1v1h-1zM0 6h1v1h-1zM5 6h1v1h-1zM13 6h1v1h-1zM0 7h1v1h-1zM2 7h3v1h-3zM9 7h3v1h-3zM13 7h1v1h-1zM0 8h1v1h-1zM4 8h6v1h-6zM13 8h1v1h-1zM0 9h1v1h-1zM4 9h1v1h-1zM13 9h1v1h-1zM0 10h1v1h-1zM4 10h1v1h-1zM13 10h1v1h-1zM1 11h1v1h-1zM4 11h1v1h-1zM12 11h1v1h-1zM2 12h3v1h-3zM9 12h3v1h-3zM4 13h6v1h-6z"/><path fill="#f00" d="M5 1h4v1h-4zM2 2h10v1h-10zM1 3h12v1h-12zM1 4h6v1h-6zM1 5h5v1h-5zM1 6h4v1h-4z"/><path fill="#fff" d="M7 5h6v1h-6zM6 6h6v1h-6zM5 7h4v1h-4z"/><path fill="#808080" d="M12 6h1v1h-1zM12 7h1v1h-1zM10 8h3v1h-3zM5 9h8v1h-8zM5 10h8v1h-8zM5 11h7v1h-7zM5 12h4v1h-4z"/><path fill="#800000" d="M1 7h1v1h-1zM1 8h3v1h-3zM1 9h3v1h-3zM1 10h3v1h-3zM2 11h2v1h-2z"/></svg><span class="t" style="left:54px;top:210px;line-height:12px;font-size:11px;color:#000;letter-spacing:-0.471px;">Camembert001:1</span><div style="left:7px;top:232px;width:12px;height:1px;background:repeating-linear-gradient(90deg,#a0a0a0 0 1px,transparent 1px 2px)"></div><div style="left:20px;top:226px;width:11px;height:11px;background:#fff;border:1px solid #848484"></div><svg class="ic" style="left:34px;top:225px" width="14" height="14" viewBox="0 0 14 14" shape-rendering="crispEdges"><path fill="#000" d="M5 0h4v1h-4zM2 1h3v1h-3zM9 1h3v1h-3zM1 2h1v1h-1zM12 2h1v1h-1zM0 3h1v1h-1zM13 3h1v1h-1zM0 4h1v1h-1zM7 4h7v1h-7zM0 5h1v1h-1zM6 5h1v1h-1zM13 5h1v1h-1zM0 6h1v1h-1zM5 6h1v1h-1zM13 6h1v1h-1zM0 7h1v1h-1zM2 7h3v1h-3zM9 7h3v1h-3zM13 7h1v1h-1zM0 8h1v1h-1zM4 8h6v1h-6zM13 8h1v1h-1zM0 9h1v1h-1zM4 9h1v1h-1zM13 9h1v1h-1zM0 10h1v1h-1zM4 10h1v1h-1zM13 10h1v1h-1zM1 11h1v1h-1zM4 11h1v1h-1zM12 11h1v1h-1zM2 12h3v1h-3zM9 12h3v1h-3zM4 13h6v1h-6z"/><path fill="#f00" d="M5 1h4v1h-4zM2 2h10v1h-10zM1 3h12v1h-12zM1 4h6v1h-6zM1 5h5v1h-5zM1 6h4v1h-4z"/><path fill="#fff" d="M7 5h6v1h-6zM6 6h6v1h-6zM5 7h4v1h-4z"/><path fill="#808080" d="M12 6h1v1h-1zM12 7h1v1h-1zM10 8h3v1h-3zM5 9h8v1h-8zM5 10h8v1h-8zM5 11h7v1h-7zM5 12h4v1h-4z"/><path fill="#800000" d="M1 7h1v1h-1zM1 8h3v1h-3zM1 9h3v1h-3zM1 10h3v1h-3zM2 11h2v1h-2z"/></svg><span class="t" style="left:54px;top:226px;line-height:12px;font-size:11px;color:#000;letter-spacing:-0.471px;">Camembert002:1</span><div style="left:1px;top:242px;width:11px;height:11px;background:#fff;border:1px solid #848484"></div><svg class="ic" style="left:14px;top:242px" width="16" height="14" viewBox="0 0 16 14" shape-rendering="crispEdges"><path fill="#000" d="M3 0h6v1h-6zM2 1h1v1h-1zM9 1h6v1h-6zM2 2h1v1h-1zM15 2h1v1h-1zM2 3h1v1h-1zM15 3h1v1h-1zM2 4h1v1h-1zM15 4h1v1h-1zM2 5h1v1h-1zM15 5h1v1h-1zM1 6h12v1h-12zM15 6h1v1h-1zM0 7h1v1h-1zM12 7h2v1h-2zM15 7h1v1h-1zM0 8h1v1h-1zM13 8h1v1h-1zM15 8h1v1h-1zM1 9h1v1h-1zM13 9h1v1h-1zM15 9h1v1h-1zM1 10h1v1h-1zM14 10h2v1h-2zM2 11h1v1h-1zM14 11h2v1h-2zM2 12h14v1h-14zM3 13h13v1h-13z"/><path fill="#0f0" d="M3 1h6v1h-6zM3 2h6v1h-6zM14 2h1v1h-1zM3 3h12v1h-12zM3 4h12v1h-12zM3 5h12v1h-12zM13 6h2v1h-2zM14 7h1v1h-1zM1 8h12v1h-12zM14 8h1v1h-1zM2 9h11v1h-11zM14 9h1v1h-1zM2 10h12v1h-12zM3 11h11v1h-11z"/><path fill="#fff" d="M9 2h5v1h-5zM1 7h11v1h-11z"/></svg><span class="t" style="left:35.5px;top:242px;line-height:12px;font-size:11px;color:#000;letter-spacing:-0.314px;">Prédéfini</span><div style="left:7px;top:264px;width:12px;height:1px;background:repeating-linear-gradient(90deg,#a0a0a0 0 1px,transparent 1px 2px)"></div><div style="left:20px;top:258px;width:11px;height:11px;background:#fff;border:1px solid #848484"></div><svg class="ic" style="left:34px;top:257px" width="14" height="14" viewBox="0 0 14 14" shape-rendering="crispEdges"><path fill="#000" d="M0 0h14v1h-14zM0 1h1v1h-1zM13 1h1v1h-1zM0 2h1v1h-1zM4 2h6v1h-6zM13 2h1v1h-1zM0 3h1v1h-1zM3 3h1v1h-1zM10 3h1v1h-1zM13 3h1v1h-1zM0 4h1v1h-1zM3 4h1v1h-1zM8 4h1v1h-1zM10 4h1v1h-1zM13 4h1v1h-1zM0 5h1v1h-1zM3 5h1v1h-1zM7 5h1v1h-1zM10 5h1v1h-1zM13 5h1v1h-1zM0 6h1v1h-1zM4 6h6v1h-6zM13 6h1v1h-1zM0 7h1v1h-1zM13 7h1v1h-1zM0 8h1v1h-1zM2 8h4v1h-4zM9 8h2v1h-2zM13 8h1v1h-1zM0 9h1v1h-1zM2 9h1v1h-1zM5 9h1v1h-1zM8 9h1v1h-1zM11 9h1v1h-1zM13 9h1v1h-1zM0 10h1v1h-1zM2 10h1v1h-1zM5 10h1v1h-1zM8 10h1v1h-1zM11 10h1v1h-1zM13 10h1v1h-1zM0 11h1v1h-1zM2 11h4v1h-4zM9 11h2v1h-2zM13 11h1v1h-1zM0 12h1v1h-1zM13 12h1v1h-1zM0 13h14v1h-14z"/><path fill="#008080" d="M1 1h12v1h-12zM1 2h2v1h-2zM11 2h2v1h-2zM1 3h2v1h-2zM11 3h2v1h-2zM1 4h2v1h-2zM11 4h2v1h-2zM1 5h2v1h-2zM11 5h2v1h-2zM1 6h2v1h-2zM11 6h2v1h-2zM1 7h12v1h-12zM1 8h1v1h-1zM6 8h3v1h-3zM11 8h2v1h-2zM1 9h1v1h-1zM6 9h2v1h-2zM12 9h1v1h-1zM1 10h1v1h-1zM6 10h2v1h-2zM12 10h1v1h-1zM1 11h1v1h-1zM6 11h3v1h-3zM11 11h2v1h-2zM1 12h12v1h-12z"/><path fill="#c0c0c0" d="M3 2h1v1h-1zM10 2h1v1h-1zM3 6h1v1h-1zM10 6h1v1h-1z"/><path fill="#fff" d="M4 3h6v1h-6zM4 4h4v1h-4zM9 4h1v1h-1zM4 5h3v1h-3zM8 5h2v1h-2zM10 9h1v1h-1z"/><path fill="#808000" d="M3 9h1v1h-1zM3 10h2v1h-2z"/><path fill="#ff0" d="M4 9h1v1h-1z"/><path fill="#f00" d="M9 9h1v1h-1zM9 10h2v1h-2z"/></svg><span class="t" style="left:54px;top:258px;line-height:12px;font-size:11px;color:#000;letter-spacing:-0.196px;">Machine:1</span><div style="left:7px;top:280px;width:12px;height:1px;background:repeating-linear-gradient(90deg,#a0a0a0 0 1px,transparent 1px 2px)"></div><div style="left:20px;top:274px;width:11px;height:11px;background:#fff;border:1px solid #848484"></div><svg class="ic" style="left:36px;top:273px" width="10" height="14" viewBox="0 0 10 14" shape-rendering="crispEdges"><path fill="#000" d="M4 0h2v1h-2zM3 1h1v1h-1zM6 1h1v1h-1zM2 2h1v1h-1zM4 2h2v1h-2zM7 2h1v1h-1zM1 3h1v1h-1zM4 3h2v1h-2zM8 3h1v1h-1zM0 4h1v1h-1zM9 4h1v1h-1zM0 5h1v1h-1zM3 5h3v1h-3zM9 5h1v1h-1zM0 6h1v1h-1zM9 6h1v1h-1zM0 7h1v1h-1zM2 7h4v1h-4zM9 7h1v1h-1zM0 8h1v1h-1zM9 8h1v1h-1zM0 9h1v1h-1zM2 9h5v1h-5zM9 9h1v1h-1zM0 10h1v1h-1zM9 10h1v1h-1zM0 11h1v1h-1zM2 11h6v1h-6zM9 11h1v1h-1zM0 12h1v1h-1zM9 12h1v1h-1zM0 13h10v1h-10z"/><path fill="#808000" d="M4 1h2v1h-2zM3 2h1v1h-1zM6 2h1v1h-1zM2 3h2v1h-2zM6 3h2v1h-2zM1 4h8v1h-8zM1 5h2v1h-2zM6 5h3v1h-3zM1 6h8v1h-8zM1 7h1v1h-1zM6 7h3v1h-3zM1 8h8v1h-8zM1 9h1v1h-1zM7 9h2v1h-2zM1 10h8v1h-8zM1 11h1v1h-1zM8 11h1v1h-1zM1 12h8v1h-8z"/></svg><span class="t" style="left:54px;top:274px;line-height:12px;font-size:11px;color:#000;letter-spacing:-0.352px;">AttrReel:1</span><div style="left:7px;top:296px;width:12px;height:1px;background:repeating-linear-gradient(90deg,#a0a0a0 0 1px,transparent 1px 2px)"></div><div style="left:20px;top:290px;width:11px;height:11px;background:#fff;border:1px solid #848484"></div><svg class="ic" style="left:34px;top:291px" width="14" height="11" viewBox="0 0 14 11" shape-rendering="crispEdges"><path fill="#000" d="M2 0h12v1h-12zM1 1h13v1h-13zM0 2h14v1h-14zM0 3h1v1h-1zM12 3h2v1h-2zM0 4h1v1h-1zM2 4h2v1h-2zM5 4h2v1h-2zM9 4h1v1h-1zM12 4h2v1h-2zM0 5h1v1h-1zM3 5h3v1h-3zM8 5h2v1h-2zM12 5h2v1h-2zM0 6h1v1h-1zM3 6h3v1h-3zM9 6h1v1h-1zM12 6h2v1h-2zM0 7h1v1h-1zM3 7h3v1h-3zM9 7h1v1h-1zM12 7h2v1h-2zM0 8h1v1h-1zM2 8h2v1h-2zM5 8h2v1h-2zM8 8h3v1h-3zM12 8h2v1h-2zM0 9h1v1h-1zM12 9h2v1h-2zM0 10h13v1h-13z"/><path fill="#c0c0c0" d="M1 3h11v1h-11zM1 4h1v1h-1zM4 4h1v1h-1zM7 4h2v1h-2zM10 4h2v1h-2zM1 5h2v1h-2zM6 5h2v1h-2zM10 5h2v1h-2zM1 6h2v1h-2zM6 6h3v1h-3zM10 6h2v1h-2zM1 7h2v1h-2zM6 7h3v1h-3zM10 7h2v1h-2zM1 8h1v1h-1zM4 8h1v1h-1zM7 8h1v1h-1zM11 8h1v1h-1zM1 9h11v1h-11z"/></svg><span class="t" style="left:54px;top:290px;line-height:12px;font-size:11px;color:#000;letter-spacing:-0.349px;">VarChaine:1</span><div style="left:7px;top:312px;width:12px;height:1px;background:repeating-linear-gradient(90deg,#a0a0a0 0 1px,transparent 1px 2px)"></div><div style="left:20px;top:306px;width:11px;height:11px;background:#fff;border:1px solid #848484"></div><svg class="ic" style="left:34px;top:306px" width="14" height="13" viewBox="0 0 14 13" shape-rendering="crispEdges"><path fill="#000" d="M2 0h1v1h-1zM0 1h1v1h-1zM2 1h1v1h-1zM0 2h1v1h-1zM2 2h1v1h-1zM2 3h1v1h-1zM0 4h1v1h-1zM2 4h1v1h-1zM0 5h1v1h-1zM2 5h1v1h-1zM2 6h1v1h-1zM0 7h1v1h-1zM2 7h1v1h-1zM0 8h1v1h-1zM2 8h1v1h-1zM2 9h1v1h-1zM0 10h1v1h-1zM2 10h1v1h-1zM0 11h1v1h-1zM2 11h1v1h-1zM2 12h1v1h-1z"/><path fill="#f00" d="M3 1h9v1h-9zM3 2h9v1h-9zM3 4h3v1h-3zM3 5h3v1h-3zM3 7h5v1h-5zM3 8h5v1h-5zM3 10h11v1h-11zM3 11h11v1h-11z"/></svg><span class="t" style="left:54px;top:306px;line-height:12px;font-size:11px;color:#000;letter-spacing:-0.319px;">DistEntier</span><div style="left:7px;top:328px;width:12px;height:1px;background:repeating-linear-gradient(90deg,#a0a0a0 0 1px,transparent 1px 2px)"></div><div style="left:20px;top:322px;width:11px;height:11px;background:#fff;border:1px solid #848484"></div><svg class="ic" style="left:34px;top:322px" width="14" height="13" viewBox="0 0 14 13" shape-rendering="crispEdges"><path fill="#000" d="M2 0h1v1h-1zM0 1h1v1h-1zM2 1h1v1h-1zM0 2h1v1h-1zM2 2h1v1h-1zM2 3h1v1h-1zM0 4h1v1h-1zM2 4h1v1h-1zM0 5h1v1h-1zM2 5h1v1h-1zM2 6h1v1h-1zM0 7h1v1h-1zM2 7h1v1h-1zM0 8h1v1h-1zM2 8h1v1h-1zM2 9h1v1h-1zM0 10h1v1h-1zM2 10h1v1h-1zM0 11h1v1h-1zM2 11h1v1h-1zM2 12h1v1h-1z"/><path fill="#f00" d="M3 1h9v1h-9zM3 2h9v1h-9zM3 4h3v1h-3zM3 5h3v1h-3zM3 7h5v1h-5zM3 8h5v1h-5zM3 10h11v1h-11zM3 11h11v1h-11z"/></svg><span class="t" style="left:54px;top:322px;line-height:12px;font-size:11px;color:#000;letter-spacing:-0.172px;">DistReal</span><div style="left:7px;top:344px;width:12px;height:1px;background:repeating-linear-gradient(90deg,#a0a0a0 0 1px,transparent 1px 2px)"></div><div style="left:20px;top:338px;width:11px;height:11px;background:#fff;border:1px solid #848484"></div><svg class="ic" style="left:34px;top:337px" width="14" height="14" viewBox="0 0 14 14" shape-rendering="crispEdges"><path fill="#000" d="M0 0h4v1h-4zM0 1h1v1h-1zM3 1h1v1h-1zM0 2h14v1h-14zM1 3h1v1h-1zM4 3h1v1h-1zM13 3h1v1h-1zM1 4h1v1h-1zM4 4h1v1h-1zM6 4h5v1h-5zM13 4h1v1h-1zM1 5h1v1h-1zM4 5h1v1h-1zM13 5h1v1h-1zM4 6h1v1h-1zM6 6h2v1h-2zM9 6h2v1h-2zM13 6h1v1h-1zM4 7h1v1h-1zM13 7h1v1h-1zM4 8h1v1h-1zM6 8h5v1h-5zM13 8h1v1h-1zM4 9h1v1h-1zM13 9h1v1h-1zM4 10h1v1h-1zM6 10h4v1h-4zM13 10h1v1h-1zM4 11h1v1h-1zM13 11h1v1h-1zM4 12h1v1h-1zM13 12h1v1h-1zM4 13h10v1h-10z"/><path fill="#808000" d="M1 1h1v1h-1zM2 3h1v1h-1zM2 4h1v1h-1zM2 5h1v1h-1z"/><path fill="#ff0" d="M2 1h1v1h-1z"/><path fill="#fff" d="M5 3h8v1h-8zM5 4h1v1h-1zM11 4h2v1h-2zM5 5h8v1h-8zM5 6h1v1h-1zM8 6h1v1h-1zM11 6h2v1h-2zM5 7h8v1h-8zM5 8h1v1h-1zM11 8h2v1h-2zM5 9h8v1h-8zM5 10h1v1h-1zM10 10h3v1h-3zM5 11h8v1h-8zM5 12h8v1h-8z"/></svg><span class="t" style="left:54px;top:338px;line-height:12px;font-size:11px;color:#000;letter-spacing:-0.256px;">FichierArticle</span><div style="left:7px;top:360px;width:12px;height:1px;background:repeating-linear-gradient(90deg,#a0a0a0 0 1px,transparent 1px 2px)"></div><div style="left:20px;top:354px;width:11px;height:11px;background:#fff;border:1px solid #848484"></div><svg class="ic" style="left:34px;top:353px" width="14" height="14" viewBox="0 0 14 14" shape-rendering="crispEdges"><path fill="#000080" d="M11 0h1v1h-1zM3 1h10v1h-10zM11 2h1v1h-1zM1 9h12v1h-12zM0 10h1v1h-1zM13 10h1v1h-1zM0 11h1v1h-1zM13 11h1v1h-1zM0 12h1v1h-1zM13 12h1v1h-1zM1 13h12v1h-12z"/><path fill="#000" d="M2 3h4v1h-4zM2 4h1v1h-1zM5 4h1v1h-1zM2 5h4v1h-4zM3 6h1v1h-1zM3 7h1v1h-1zM3 8h1v1h-1zM2 11h1v1h-1zM5 11h1v1h-1zM8 11h1v1h-1zM11 11h1v1h-1z"/><path fill="#ff0" d="M3 4h2v1h-2zM1 10h12v1h-12zM1 11h1v1h-1zM3 11h2v1h-2zM6 11h2v1h-2zM9 11h2v1h-2zM12 11h1v1h-1zM1 12h12v1h-12z"/><path fill="#808000" d="M4 6h1v1h-1zM4 7h1v1h-1zM4 8h1v1h-1z"/></svg><span class="t" style="left:54px;top:354px;line-height:12px;font-size:11px;color:#000;letter-spacing:-0.352px;">Convoyeur:1</span><div style="left:7px;top:376px;width:12px;height:1px;background:repeating-linear-gradient(90deg,#a0a0a0 0 1px,transparent 1px 2px)"></div><div style="left:20px;top:370px;width:11px;height:11px;background:#fff;border:1px solid #848484"></div><svg class="ic" style="left:36px;top:370px" width="10" height="12" viewBox="0 0 10 12" shape-rendering="crispEdges"><path fill="#000" d="M0 0h10v1h-10zM0 1h1v1h-1zM9 1h1v1h-1zM0 2h1v1h-1zM2 2h5v1h-5zM9 2h1v1h-1zM0 3h1v1h-1zM9 3h1v1h-1zM0 4h1v1h-1zM2 4h2v1h-2zM9 4h1v1h-1zM0 5h1v1h-1zM9 5h1v1h-1zM0 6h1v1h-1zM2 6h4v1h-4zM9 6h1v1h-1zM0 7h1v1h-1zM9 7h1v1h-1zM0 8h1v1h-1zM2 8h2v1h-2zM5 8h3v1h-3zM9 8h1v1h-1zM0 9h1v1h-1zM9 9h1v1h-1zM0 10h1v1h-1zM9 10h1v1h-1zM0 11h10v1h-10z"/><path fill="#fff" d="M1 1h8v1h-8zM1 2h1v1h-1zM7 2h2v1h-2zM1 3h8v1h-8zM1 4h1v1h-1zM4 4h5v1h-5zM1 5h8v1h-8zM1 6h1v1h-1zM6 6h3v1h-3zM1 7h8v1h-8zM1 8h1v1h-1zM4 8h1v1h-1zM8 8h1v1h-1zM1 9h8v1h-8zM1 10h8v1h-8z"/></svg><span class="t" style="left:54px;top:370px;line-height:12px;font-size:11px;color:#000;letter-spacing:-0.256px;">FichierRead</span><div style="left:7px;top:392px;width:12px;height:1px;background:repeating-linear-gradient(90deg,#a0a0a0 0 1px,transparent 1px 2px)"></div><div style="left:20px;top:386px;width:11px;height:11px;background:#fff;border:1px solid #848484"></div><svg class="ic" style="left:36px;top:385px" width="11" height="14" viewBox="0 0 11 14" shape-rendering="crispEdges"><path fill="#000" d="M0 0h4v1h-4zM0 1h1v1h-1zM3 1h1v1h-1zM1 2h2v1h-2zM1 3h1v1h-1zM0 5h4v1h-4zM0 6h1v1h-1zM3 6h1v1h-1zM1 7h2v1h-2zM1 8h1v1h-1zM0 10h4v1h-4zM0 11h1v1h-1zM3 11h1v1h-1zM1 12h2v1h-2zM1 13h1v1h-1z"/><path fill="#000080" d="M8 0h1v1h-1zM7 1h3v1h-3zM6 2h5v1h-5zM8 3h1v1h-1zM8 4h1v1h-1zM8 5h1v1h-1zM8 6h1v1h-1zM8 7h1v1h-1zM8 8h1v1h-1zM8 9h1v1h-1zM8 10h1v1h-1zM8 11h1v1h-1zM8 12h1v1h-1zM8 13h1v1h-1z"/><path fill="#808000" d="M1 1h1v1h-1zM2 3h1v1h-1zM1 6h1v1h-1zM2 8h1v1h-1zM1 11h1v1h-1zM2 13h1v1h-1z"/><path fill="#ff0" d="M2 1h1v1h-1zM2 6h1v1h-1zM2 11h1v1h-1z"/></svg><span class="t" style="left:54px;top:386px;line-height:12px;font-size:11px;color:#000;letter-spacing:-0.098px;">Stock:1</span><div style="left:7px;top:408px;width:12px;height:1px;background:repeating-linear-gradient(90deg,#a0a0a0 0 1px,transparent 1px 2px)"></div><div style="left:20px;top:402px;width:11px;height:11px;background:#fff;border:1px solid #848484"></div><svg class="ic" style="left:36px;top:402px" width="10" height="12" viewBox="0 0 10 12" shape-rendering="crispEdges"><path fill="#000" d="M0 0h10v1h-10zM0 1h1v1h-1zM9 1h1v1h-1zM0 2h1v1h-1zM2 2h5v1h-5zM9 2h1v1h-1zM0 3h1v1h-1zM9 3h1v1h-1zM0 4h1v1h-1zM2 4h2v1h-2zM9 4h1v1h-1zM0 5h1v1h-1zM9 5h1v1h-1zM0 6h1v1h-1zM2 6h4v1h-4zM9 6h1v1h-1zM0 7h1v1h-1zM9 7h1v1h-1zM0 8h1v1h-1zM2 8h2v1h-2zM5 8h3v1h-3zM9 8h1v1h-1zM0 9h1v1h-1zM9 9h1v1h-1zM0 10h1v1h-1zM9 10h1v1h-1zM0 11h10v1h-10z"/><path fill="#fff" d="M1 1h8v1h-8zM1 2h1v1h-1zM7 2h2v1h-2zM1 3h8v1h-8zM1 4h1v1h-1zM4 4h5v1h-5zM1 5h8v1h-8zM1 6h1v1h-1zM6 6h3v1h-3zM1 7h8v1h-8zM1 8h1v1h-1zM4 8h1v1h-1zM8 8h1v1h-1zM1 9h8v1h-8zM1 10h8v1h-8z"/></svg><span class="t" style="left:54px;top:402px;line-height:12px;font-size:11px;color:#000;letter-spacing:-0.240px;">FichierWrite</span><div style="left:7px;top:424px;width:12px;height:1px;background:repeating-linear-gradient(90deg,#a0a0a0 0 1px,transparent 1px 2px)"></div><div style="left:20px;top:418px;width:11px;height:11px;background:#fff;border:1px solid #848484"></div><svg class="ic" style="left:38px;top:417px" width="6" height="14" viewBox="0 0 6 14" shape-rendering="crispEdges"><path fill="#000080" d="M2 0h2v1h-2zM1 1h1v1h-1zM4 1h1v1h-1zM1 2h1v1h-1zM4 2h1v1h-1zM2 10h2v1h-2zM2 11h2v1h-2zM2 12h2v1h-2zM1 13h4v1h-4z"/><path fill="#f00" d="M2 1h1v1h-1zM3 2h1v1h-1zM0 8h1v1h-1zM5 8h1v1h-1z"/><path fill="#fff" d="M3 1h1v1h-1zM2 2h1v1h-1zM2 3h2v1h-2zM2 4h2v1h-2zM2 5h2v1h-2z"/><path fill="#00f" d="M1 4h1v1h-1zM4 4h1v1h-1zM0 5h2v1h-2zM4 5h2v1h-2zM0 6h6v1h-6zM0 7h6v1h-6zM1 8h4v1h-4zM1 9h4v1h-4z"/></svg><span class="t" style="left:54px;top:418px;line-height:12px;font-size:11px;color:#000;letter-spacing:-0.297px;">Ressource:1</span><div style="left:7px;top:440px;width:12px;height:1px;background:repeating-linear-gradient(90deg,#a0a0a0 0 1px,transparent 1px 2px)"></div><div style="left:20px;top:434px;width:11px;height:11px;background:#fff;border:1px solid #848484"></div><svg class="ic" style="left:37px;top:436px" width="8" height="8" viewBox="0 0 8 8" shape-rendering="crispEdges"><path fill="#000" d="M1 0h6v1h-6zM0 1h1v1h-1zM7 1h1v1h-1zM0 2h1v1h-1zM7 2h1v1h-1zM1 3h6v1h-6zM2 4h1v1h-1zM5 4h1v1h-1zM2 5h1v1h-1zM5 5h1v1h-1zM2 6h1v1h-1zM5 6h1v1h-1zM3 7h2v1h-2z"/><path fill="#808000" d="M1 1h5v1h-5zM1 2h5v1h-5zM3 4h1v1h-1zM3 5h1v1h-1zM3 6h1v1h-1z"/><path fill="#ff0" d="M6 1h1v1h-1zM6 2h1v1h-1zM4 4h1v1h-1zM4 5h1v1h-1zM4 6h1v1h-1z"/></svg><span class="t" style="left:54px;top:434px;line-height:12px;font-size:11px;color:#000;letter-spacing:-0.252px;">Article</span><div style="left:7px;top:456px;width:12px;height:1px;background:repeating-linear-gradient(90deg,#a0a0a0 0 1px,transparent 1px 2px)"></div><div style="left:20px;top:450px;width:11px;height:11px;background:#fff;border:1px solid #848484"></div><svg class="ic" style="left:34px;top:449px" width="14" height="14" viewBox="0 0 14 14" shape-rendering="crispEdges"><path fill="#f00" d="M11 0h3v1h-3zM11 1h3v1h-3zM11 2h3v1h-3z"/><path fill="#000" d="M12 3h1v1h-1zM12 4h1v1h-1zM12 5h1v1h-1zM12 6h1v1h-1zM0 7h14v1h-14zM0 8h1v1h-1zM13 8h1v1h-1zM0 9h1v1h-1zM2 9h3v1h-3zM9 9h3v1h-3zM13 9h1v1h-1zM0 10h6v1h-6zM8 10h6v1h-6zM0 11h3v1h-3zM4 11h6v1h-6zM11 11h3v1h-3zM1 12h5v1h-5zM8 12h5v1h-5zM2 13h3v1h-3zM9 13h3v1h-3z"/><path fill="#ff0" d="M1 8h12v1h-12zM1 9h1v1h-1zM5 9h4v1h-4zM12 9h1v1h-1zM6 10h2v1h-2zM3 11h1v1h-1zM10 11h1v1h-1z"/></svg><span class="t" style="left:54px;top:450px;line-height:12px;font-size:11px;color:#000;letter-spacing:-0.177px;">Vehicule:1</span><div style="left:7px;top:472px;width:12px;height:1px;background:repeating-linear-gradient(90deg,#a0a0a0 0 1px,transparent 1px 2px)"></div><div style="left:20px;top:466px;width:11px;height:11px;background:#fff;border:1px solid #848484"></div><svg class="ic" style="left:34px;top:465px" width="14" height="14" viewBox="0 0 14 14" shape-rendering="crispEdges"><path fill="#000" d="M1 0h2v1h-2zM11 0h2v1h-2zM1 1h2v1h-2zM11 1h2v1h-2zM1 4h2v1h-2zM11 4h2v1h-2zM1 5h2v1h-2zM11 5h2v1h-2zM1 8h2v1h-2zM11 8h2v1h-2zM1 9h2v1h-2zM11 9h2v1h-2zM1 12h2v1h-2zM11 12h2v1h-2zM1 13h2v1h-2zM11 13h2v1h-2z"/><path fill="#808000" d="M0 2h14v1h-14zM0 3h14v1h-14zM0 6h14v1h-14zM0 7h14v1h-14zM0 10h14v1h-14zM0 11h14v1h-14z"/></svg><span class="t" style="left:54px;top:466px;line-height:12px;font-size:11px;color:#000;letter-spacing:-0.406px;">Piste:1</span><div style="left:7px;top:488px;width:12px;height:1px;background:repeating-linear-gradient(90deg,#a0a0a0 0 1px,transparent 1px 2px)"></div><div style="left:20px;top:482px;width:11px;height:11px;background:#fff;border:1px solid #848484"></div><svg class="ic" style="left:34px;top:481px" width="14" height="14" viewBox="0 0 14 14" shape-rendering="crispEdges"><path fill="#000" d="M0 0h14v1h-14zM0 1h1v1h-1zM13 1h1v1h-1zM0 2h1v1h-1zM6 2h6v1h-6zM13 2h1v1h-1zM0 3h1v1h-1zM6 3h6v1h-6zM13 3h1v1h-1zM0 4h1v1h-1zM6 4h1v1h-1zM13 4h1v1h-1zM0 5h1v1h-1zM5 5h1v1h-1zM13 5h1v1h-1zM0 6h1v1h-1zM5 6h1v1h-1zM13 6h1v1h-1zM0 7h1v1h-1zM5 7h1v1h-1zM7 7h2v1h-2zM10 7h2v1h-2zM13 7h1v1h-1zM0 8h1v1h-1zM2 8h1v1h-1zM4 8h2v1h-2zM8 8h1v1h-1zM10 8h1v1h-1zM13 8h1v1h-1zM0 9h1v1h-1zM2 9h3v1h-3zM9 9h1v1h-1zM13 9h1v1h-1zM0 10h1v1h-1zM3 10h2v1h-2zM8 10h1v1h-1zM10 10h1v1h-1zM13 10h1v1h-1zM0 11h1v1h-1zM4 11h1v1h-1zM7 11h2v1h-2zM10 11h2v1h-2zM13 11h1v1h-1zM0 12h1v1h-1zM13 12h1v1h-1zM0 13h14v1h-14z"/><path fill="#c0c0c0" d="M1 1h12v1h-12zM1 2h5v1h-5zM12 2h1v1h-1zM1 3h5v1h-5zM12 3h1v1h-1zM1 4h5v1h-5zM7 4h6v1h-6zM1 5h4v1h-4zM6 5h7v1h-7zM1 6h4v1h-4zM6 6h7v1h-7zM1 7h4v1h-4zM6 7h1v1h-1zM9 7h1v1h-1zM12 7h1v1h-1zM1 8h1v1h-1zM3 8h1v1h-1zM6 8h2v1h-2zM9 8h1v1h-1zM11 8h2v1h-2zM1 9h1v1h-1zM5 9h4v1h-4zM10 9h3v1h-3zM1 10h2v1h-2zM5 10h3v1h-3zM9 10h1v1h-1zM11 10h2v1h-2zM1 11h3v1h-3zM5 11h2v1h-2zM9 11h1v1h-1zM12 11h1v1h-1zM1 12h12v1h-12z"/></svg><span class="t" style="left:54px;top:482px;line-height:12px;font-size:11px;color:#000;letter-spacing:-0.150px;">Fonction</span><div style="left:7px;top:504px;width:12px;height:1px;background:repeating-linear-gradient(90deg,#a0a0a0 0 1px,transparent 1px 2px)"></div><div style="left:20px;top:498px;width:11px;height:11px;background:#fff;border:1px solid #848484"></div><svg class="ic" style="left:34px;top:499px" width="14" height="11" viewBox="0 0 14 11" shape-rendering="crispEdges"><path fill="#000" d="M2 0h12v1h-12zM1 1h13v1h-13zM0 2h14v1h-14zM0 3h1v1h-1zM12 3h2v1h-2zM0 4h1v1h-1zM2 4h2v1h-2zM5 4h2v1h-2zM9 4h1v1h-1zM12 4h2v1h-2zM0 5h1v1h-1zM3 5h3v1h-3zM8 5h2v1h-2zM12 5h2v1h-2zM0 6h1v1h-1zM3 6h3v1h-3zM9 6h1v1h-1zM12 6h2v1h-2zM0 7h1v1h-1zM3 7h3v1h-3zM9 7h1v1h-1zM12 7h2v1h-2zM0 8h1v1h-1zM2 8h2v1h-2zM5 8h2v1h-2zM8 8h3v1h-3zM12 8h2v1h-2zM0 9h1v1h-1zM12 9h2v1h-2zM0 10h13v1h-13z"/><path fill="#c0c0c0" d="M1 3h11v1h-11zM1 4h1v1h-1zM4 4h1v1h-1zM7 4h2v1h-2zM10 4h2v1h-2zM1 5h2v1h-2zM6 5h2v1h-2zM10 5h2v1h-2zM1 6h2v1h-2zM6 6h3v1h-3zM10 6h2v1h-2zM1 7h2v1h-2zM6 7h3v1h-3zM10 7h2v1h-2zM1 8h1v1h-1zM4 8h1v1h-1zM7 8h1v1h-1zM11 8h1v1h-1zM1 9h11v1h-11z"/></svg><span class="t" style="left:54px;top:498px;line-height:12px;font-size:11px;color:#000;letter-spacing:-0.338px;">VarNom:1</span><div style="left:7px;top:520px;width:12px;height:1px;background:repeating-linear-gradient(90deg,#a0a0a0 0 1px,transparent 1px 2px)"></div><div style="left:20px;top:514px;width:11px;height:11px;background:#fff;border:1px solid #848484"></div><svg class="ic" style="left:36px;top:513px" width="10" height="14" viewBox="0 0 10 14" shape-rendering="crispEdges"><path fill="#000" d="M4 0h2v1h-2zM3 1h1v1h-1zM6 1h1v1h-1zM2 2h1v1h-1zM4 2h2v1h-2zM7 2h1v1h-1zM1 3h1v1h-1zM4 3h2v1h-2zM8 3h1v1h-1zM0 4h1v1h-1zM9 4h1v1h-1zM0 5h1v1h-1zM3 5h3v1h-3zM9 5h1v1h-1zM0 6h1v1h-1zM9 6h1v1h-1zM0 7h1v1h-1zM2 7h4v1h-4zM9 7h1v1h-1zM0 8h1v1h-1zM9 8h1v1h-1zM0 9h1v1h-1zM2 9h5v1h-5zM9 9h1v1h-1zM0 10h1v1h-1zM9 10h1v1h-1zM0 11h1v1h-1zM2 11h6v1h-6zM9 11h1v1h-1zM0 12h1v1h-1zM9 12h1v1h-1zM0 13h10v1h-10z"/><path fill="#808000" d="M4 1h2v1h-2zM3 2h1v1h-1zM6 2h1v1h-1zM2 3h2v1h-2zM6 3h2v1h-2zM1 4h8v1h-8zM1 5h2v1h-2zM6 5h3v1h-3zM1 6h8v1h-8zM1 7h1v1h-1zM6 7h3v1h-3zM1 8h8v1h-8zM1 9h1v1h-1zM7 9h2v1h-2zM1 10h8v1h-8zM1 11h1v1h-1zM8 11h1v1h-1zM1 12h8v1h-8z"/></svg><span class="t" style="left:54px;top:514px;line-height:12px;font-size:11px;color:#000;letter-spacing:-0.391px;">AttrNom:1</span><div style="left:7px;top:536px;width:12px;height:1px;background:repeating-linear-gradient(90deg,#a0a0a0 0 1px,transparent 1px 2px)"></div><div style="left:20px;top:530px;width:11px;height:11px;background:#fff;border:1px solid #848484"></div><svg class="ic" style="left:36px;top:529px" width="10" height="14" viewBox="0 0 10 14" shape-rendering="crispEdges"><path fill="#000" d="M4 0h2v1h-2zM3 1h1v1h-1zM6 1h1v1h-1zM2 2h1v1h-1zM4 2h2v1h-2zM7 2h1v1h-1zM1 3h1v1h-1zM4 3h2v1h-2zM8 3h1v1h-1zM0 4h1v1h-1zM9 4h1v1h-1zM0 5h1v1h-1zM3 5h3v1h-3zM9 5h1v1h-1zM0 6h1v1h-1zM9 6h1v1h-1zM0 7h1v1h-1zM2 7h4v1h-4zM9 7h1v1h-1zM0 8h1v1h-1zM9 8h1v1h-1zM0 9h1v1h-1zM2 9h5v1h-5zM9 9h1v1h-1zM0 10h1v1h-1zM9 10h1v1h-1zM0 11h1v1h-1zM2 11h6v1h-6zM9 11h1v1h-1zM0 12h1v1h-1zM9 12h1v1h-1zM0 13h10v1h-10z"/><path fill="#808000" d="M4 1h2v1h-2zM3 2h1v1h-1zM6 2h1v1h-1zM2 3h2v1h-2zM6 3h2v1h-2zM1 4h8v1h-8zM1 5h2v1h-2zM6 5h3v1h-3zM1 6h8v1h-8zM1 7h1v1h-1zM6 7h3v1h-3zM1 8h8v1h-8zM1 9h1v1h-1zM7 9h2v1h-2zM1 10h8v1h-8zM1 11h1v1h-1zM8 11h1v1h-1zM1 12h8v1h-8z"/></svg><span class="t" style="left:54px;top:530px;line-height:12px;font-size:11px;color:#000;letter-spacing:-0.388px;">AttrChaine:1</span><div style="left:7px;top:552px;width:12px;height:1px;background:repeating-linear-gradient(90deg,#a0a0a0 0 1px,transparent 1px 2px)"></div><div style="left:20px;top:546px;width:11px;height:11px;background:#fff;border:1px solid #848484"></div><svg class="ic" style="left:34px;top:548px" width="14" height="9" viewBox="0 0 14 9" shape-rendering="crispEdges"><path fill="#000" d="M1 0h2v1h-2zM11 0h2v1h-2zM0 1h1v1h-1zM3 1h8v1h-8zM13 1h1v1h-1zM1 2h2v1h-2zM6 2h1v1h-1zM11 2h2v1h-2zM6 3h1v1h-1zM6 4h1v1h-1zM5 5h2v1h-2zM5 6h1v1h-1zM5 7h1v1h-1zM8 7h1v1h-1zM5 8h4v1h-4z"/><path fill="#f0f" d="M1 1h2v1h-2zM11 1h2v1h-2z"/></svg><span class="t" style="left:54px;top:546px;line-height:12px;font-size:11px;color:#000;letter-spacing:-0.339px;">BalancCA:1</span><div style="left:7px;top:568px;width:12px;height:1px;background:repeating-linear-gradient(90deg,#a0a0a0 0 1px,transparent 1px 2px)"></div><div style="left:20px;top:562px;width:11px;height:11px;background:#fff;border:1px solid #848484"></div><svg class="ic" style="left:36px;top:561px" width="10" height="14" viewBox="0 0 10 14" shape-rendering="crispEdges"><path fill="#000" d="M4 0h2v1h-2zM3 1h1v1h-1zM6 1h1v1h-1zM2 2h1v1h-1zM4 2h2v1h-2zM7 2h1v1h-1zM1 3h1v1h-1zM4 3h2v1h-2zM8 3h1v1h-1zM0 4h1v1h-1zM9 4h1v1h-1zM0 5h1v1h-1zM3 5h3v1h-3zM9 5h1v1h-1zM0 6h1v1h-1zM9 6h1v1h-1zM0 7h1v1h-1zM2 7h4v1h-4zM9 7h1v1h-1zM0 8h1v1h-1zM9 8h1v1h-1zM0 9h1v1h-1zM2 9h5v1h-5zM9 9h1v1h-1zM0 10h1v1h-1zM9 10h1v1h-1zM0 11h1v1h-1zM2 11h6v1h-6zM9 11h1v1h-1zM0 12h1v1h-1zM9 12h1v1h-1zM0 13h10v1h-10z"/><path fill="#808000" d="M4 1h2v1h-2zM3 2h1v1h-1zM6 2h1v1h-1zM2 3h2v1h-2zM6 3h2v1h-2zM1 4h8v1h-8zM1 5h2v1h-2zM6 5h3v1h-3zM1 6h8v1h-8zM1 7h1v1h-1zM6 7h3v1h-3zM1 8h8v1h-8zM1 9h1v1h-1zM7 9h2v1h-2zM1 10h8v1h-8zM1 11h1v1h-1zM8 11h1v1h-1zM1 12h8v1h-8z"/></svg><span class="t" style="left:54px;top:562px;line-height:12px;font-size:11px;color:#000;letter-spacing:-0.361px;">AttrEntier:1</span><div style="left:7px;top:584px;width:12px;height:1px;background:repeating-linear-gradient(90deg,#a0a0a0 0 1px,transparent 1px 2px)"></div><div style="left:20px;top:578px;width:11px;height:11px;background:#fff;border:1px solid #848484"></div><svg class="ic" style="left:34px;top:579px" width="14" height="11" viewBox="0 0 14 11" shape-rendering="crispEdges"><path fill="#000" d="M2 0h12v1h-12zM1 1h13v1h-13zM0 2h14v1h-14zM0 3h1v1h-1zM12 3h2v1h-2zM0 4h1v1h-1zM2 4h2v1h-2zM5 4h2v1h-2zM9 4h1v1h-1zM12 4h2v1h-2zM0 5h1v1h-1zM3 5h3v1h-3zM8 5h2v1h-2zM12 5h2v1h-2zM0 6h1v1h-1zM3 6h3v1h-3zM9 6h1v1h-1zM12 6h2v1h-2zM0 7h1v1h-1zM3 7h3v1h-3zM9 7h1v1h-1zM12 7h2v1h-2zM0 8h1v1h-1zM2 8h2v1h-2zM5 8h2v1h-2zM8 8h3v1h-3zM12 8h2v1h-2zM0 9h1v1h-1zM12 9h2v1h-2zM0 10h13v1h-13z"/><path fill="#c0c0c0" d="M1 3h11v1h-11zM1 4h1v1h-1zM4 4h1v1h-1zM7 4h2v1h-2zM10 4h2v1h-2zM1 5h2v1h-2zM6 5h2v1h-2zM10 5h2v1h-2zM1 6h2v1h-2zM6 6h3v1h-3zM10 6h2v1h-2zM1 7h2v1h-2zM6 7h3v1h-3zM10 7h2v1h-2zM1 8h1v1h-1zM4 8h1v1h-1zM7 8h1v1h-1zM11 8h1v1h-1zM1 9h11v1h-11z"/></svg><span class="t" style="left:54px;top:578px;line-height:12px;font-size:11px;color:#000;letter-spacing:-0.320px;">VarEntier:1</span><div style="left:7px;top:600px;width:12px;height:1px;background:repeating-linear-gradient(90deg,#a0a0a0 0 1px,transparent 1px 2px)"></div><div style="left:20px;top:594px;width:11px;height:11px;background:#fff;border:1px solid #848484"></div><svg class="ic" style="left:34px;top:595px" width="14" height="11" viewBox="0 0 14 11" shape-rendering="crispEdges"><path fill="#000" d="M2 0h12v1h-12zM1 1h13v1h-13zM0 2h14v1h-14zM0 3h1v1h-1zM12 3h2v1h-2zM0 4h1v1h-1zM2 4h2v1h-2zM5 4h2v1h-2zM9 4h1v1h-1zM12 4h2v1h-2zM0 5h1v1h-1zM3 5h3v1h-3zM8 5h2v1h-2zM12 5h2v1h-2zM0 6h1v1h-1zM3 6h3v1h-3zM9 6h1v1h-1zM12 6h2v1h-2zM0 7h1v1h-1zM3 7h3v1h-3zM9 7h1v1h-1zM12 7h2v1h-2zM0 8h1v1h-1zM2 8h2v1h-2zM5 8h2v1h-2zM8 8h3v1h-3zM12 8h2v1h-2zM0 9h1v1h-1zM12 9h2v1h-2zM0 10h13v1h-13z"/><path fill="#c0c0c0" d="M1 3h11v1h-11zM1 4h1v1h-1zM4 4h1v1h-1zM7 4h2v1h-2zM10 4h2v1h-2zM1 5h2v1h-2zM6 5h2v1h-2zM10 5h2v1h-2zM1 6h2v1h-2zM6 6h3v1h-3zM10 6h2v1h-2zM1 7h2v1h-2zM6 7h3v1h-3zM10 7h2v1h-2zM1 8h1v1h-1zM4 8h1v1h-1zM7 8h1v1h-1zM11 8h1v1h-1zM1 9h11v1h-11z"/></svg><span class="t" style="left:54px;top:594px;line-height:12px;font-size:11px;color:#000;letter-spacing:-0.234px;">VarReal:1</span><div style="left:7px;top:616px;width:12px;height:1px;background:repeating-linear-gradient(90deg,#a0a0a0 0 1px,transparent 1px 2px)"></div><div style="left:20px;top:610px;width:11px;height:11px;background:#fff;border:1px solid #848484"></div><svg class="ic" style="left:34px;top:613px" width="14" height="7" viewBox="0 0 14 7" shape-rendering="crispEdges"><path fill="#f0f" d="M5 0h3v1h-3zM4 1h5v1h-5zM3 2h7v1h-7zM3 3h7v1h-7zM3 4h7v1h-7zM4 5h5v1h-5zM5 6h3v1h-3z"/><path fill="#000" d="M0 3h3v1h-3zM10 3h4v1h-4z"/></svg><span class="t" style="left:54px;top:610px;line-height:12px;font-size:11px;color:#000;letter-spacing:-0.364px;">StationCA:1</span><div style="left:7px;top:632px;width:12px;height:1px;background:repeating-linear-gradient(90deg,#a0a0a0 0 1px,transparent 1px 2px)"></div><div style="left:20px;top:626px;width:11px;height:11px;background:#fff;border:1px solid #848484"></div><svg class="ic" style="left:36px;top:625px" width="10" height="14" viewBox="0 0 10 14" shape-rendering="crispEdges"><path fill="#000" d="M4 0h2v1h-2zM3 1h1v1h-1zM6 1h1v1h-1zM2 2h1v1h-1zM4 2h2v1h-2zM7 2h1v1h-1zM1 3h1v1h-1zM4 3h2v1h-2zM8 3h1v1h-1zM0 4h1v1h-1zM9 4h1v1h-1zM0 5h1v1h-1zM3 5h3v1h-3zM9 5h1v1h-1zM0 6h1v1h-1zM9 6h1v1h-1zM0 7h1v1h-1zM2 7h4v1h-4zM9 7h1v1h-1zM0 8h1v1h-1zM9 8h1v1h-1zM0 9h1v1h-1zM2 9h5v1h-5zM9 9h1v1h-1zM0 10h1v1h-1zM9 10h1v1h-1zM0 11h1v1h-1zM2 11h6v1h-6zM9 11h1v1h-1zM0 12h1v1h-1zM9 12h1v1h-1zM0 13h10v1h-10z"/><path fill="#808000" d="M4 1h2v1h-2zM3 2h1v1h-1zM6 2h1v1h-1zM2 3h2v1h-2zM6 3h2v1h-2zM1 4h8v1h-8zM1 5h2v1h-2zM6 5h3v1h-3zM1 6h8v1h-8zM1 7h1v1h-1zM6 7h3v1h-3zM1 8h8v1h-8zM1 9h1v1h-1zM7 9h2v1h-2zM1 10h8v1h-8zM1 11h1v1h-1zM8 11h1v1h-1zM1 12h8v1h-8z"/></svg><span class="t" style="left:54px;top:626px;line-height:12px;font-size:11px;color:#000;letter-spacing:-0.366px;">AttrRess:1</span><div style="left:7px;top:648px;width:12px;height:1px;background:repeating-linear-gradient(90deg,#a0a0a0 0 1px,transparent 1px 2px)"></div><div style="left:20px;top:642px;width:11px;height:11px;background:#fff;border:1px solid #848484"></div><svg class="ic" style="left:34px;top:641px" width="14" height="14" viewBox="0 0 14 14" shape-rendering="crispEdges"><path fill="#000" d="M0 0h1v1h-1zM0 1h1v1h-1zM0 2h1v1h-1zM0 3h1v1h-1zM0 4h1v1h-1zM0 5h1v1h-1zM0 6h1v1h-1zM0 7h1v1h-1zM0 8h1v1h-1zM0 9h1v1h-1zM0 10h1v1h-1zM0 11h1v1h-1zM0 12h1v1h-1zM0 13h14v1h-14z"/><path fill="#f00" d="M7 2h2v1h-2zM6 3h1v1h-1zM9 3h1v1h-1zM5 4h1v1h-1zM10 4h1v1h-1zM5 5h1v1h-1zM10 5h1v1h-1zM4 6h1v1h-1zM11 6h1v1h-1zM4 7h1v1h-1zM11 7h1v1h-1zM3 8h1v1h-1zM12 8h1v1h-1zM3 9h1v1h-1zM12 9h1v1h-1zM2 10h1v1h-1zM13 10h1v1h-1zM2 11h1v1h-1zM13 11h1v1h-1z"/></svg><span class="t" style="left:54px;top:642px;line-height:12px;font-size:11px;color:#000;letter-spacing:-0.408px;">Courbe:1</span><div style="left:7px;top:664px;width:12px;height:1px;background:repeating-linear-gradient(90deg,#a0a0a0 0 1px,transparent 1px 2px)"></div><div style="left:20px;top:658px;width:11px;height:11px;background:#fff;border:1px solid #848484"></div><svg class="ic" style="left:34px;top:657px" width="14" height="14" viewBox="0 0 14 14" shape-rendering="crispEdges"><path fill="#000" d="M0 0h1v1h-1zM0 1h1v1h-1zM0 2h1v1h-1zM0 3h1v1h-1zM0 4h1v1h-1zM0 5h1v1h-1zM0 6h1v1h-1zM0 7h1v1h-1zM0 8h1v1h-1zM0 9h1v1h-1zM0 10h1v1h-1zM0 11h1v1h-1zM0 12h1v1h-1zM0 13h14v1h-14z"/><path fill="#f00" d="M11 2h2v1h-2zM11 3h2v1h-2zM11 4h2v1h-2zM11 5h2v1h-2zM5 6h2v1h-2zM11 6h2v1h-2zM5 7h2v1h-2zM11 7h2v1h-2zM5 8h2v1h-2zM8 8h2v1h-2zM11 8h2v1h-2zM2 9h2v1h-2zM5 9h2v1h-2zM8 9h2v1h-2zM11 9h2v1h-2zM2 10h2v1h-2zM5 10h2v1h-2zM8 10h2v1h-2zM11 10h2v1h-2zM2 11h2v1h-2zM5 11h2v1h-2zM8 11h2v1h-2zM11 11h2v1h-2zM2 12h2v1h-2zM5 12h2v1h-2zM8 12h2v1h-2zM11 12h2v1h-2z"/></svg><span class="t" style="left:54px;top:658px;line-height:12px;font-size:11px;color:#000;letter-spacing:-0.506px;">Histogramme:1</span><div style="left:7px;top:680px;width:12px;height:1px;background:repeating-linear-gradient(90deg,#a0a0a0 0 1px,transparent 1px 2px)"></div><div style="left:20px;top:674px;width:11px;height:11px;background:#fff;border:1px solid #848484"></div><svg class="ic" style="left:34px;top:674px" width="14" height="13" viewBox="0 0 14 13" shape-rendering="crispEdges"><path fill="#000" d="M4 0h6v1h-6zM3 1h8v1h-8zM2 2h2v1h-2zM6 2h1v1h-1zM10 2h2v1h-2zM1 3h3v1h-3zM6 3h1v1h-1zM10 3h3v1h-3zM0 4h2v1h-2zM6 4h1v1h-1zM12 4h2v1h-2zM0 5h2v1h-2zM6 5h1v1h-1zM12 5h2v1h-2zM0 6h3v1h-3zM6 6h1v1h-1zM11 6h3v1h-3zM0 7h2v1h-2zM7 7h1v1h-1zM12 7h2v1h-2zM0 8h2v1h-2zM8 8h1v1h-1zM12 8h2v1h-2zM1 9h3v1h-3zM9 9h4v1h-4zM2 10h2v1h-2zM6 10h1v1h-1zM10 10h2v1h-2zM3 11h8v1h-8zM4 12h6v1h-6z"/><path fill="#fff" d="M4 2h2v1h-2zM7 2h3v1h-3zM4 3h2v1h-2zM7 3h3v1h-3zM2 4h4v1h-4zM7 4h5v1h-5zM2 5h4v1h-4zM7 5h5v1h-5zM3 6h3v1h-3zM7 6h4v1h-4zM2 7h5v1h-5zM8 7h4v1h-4zM2 8h6v1h-6zM9 8h3v1h-3zM4 9h5v1h-5zM4 10h2v1h-2zM7 10h3v1h-3z"/></svg><span class="t" style="left:54px;top:674px;line-height:12px;font-size:11px;color:#000;letter-spacing:-0.229px;">Planning</span><div style="left:7px;top:696px;width:12px;height:1px;background:repeating-linear-gradient(90deg,#a0a0a0 0 1px,transparent 1px 2px)"></div><div style="left:20px;top:690px;width:11px;height:11px;background:#fff;border:1px solid #848484"></div><svg class="ic" style="left:34px;top:689px" width="14" height="14" viewBox="0 0 14 14" shape-rendering="crispEdges"><path fill="#000" d="M5 0h4v1h-4zM2 1h3v1h-3zM9 1h3v1h-3zM1 2h1v1h-1zM12 2h1v1h-1zM0 3h1v1h-1zM13 3h1v1h-1zM0 4h1v1h-1zM7 4h7v1h-7zM0 5h1v1h-1zM6 5h1v1h-1zM13 5h1v1h-1zM0 6h1v1h-1zM5 6h1v1h-1zM13 6h1v1h-1zM0 7h1v1h-1zM2 7h3v1h-3zM9 7h3v1h-3zM13 7h1v1h-1zM0 8h1v1h-1zM4 8h6v1h-6zM13 8h1v1h-1zM0 9h1v1h-1zM4 9h1v1h-1zM13 9h1v1h-1zM0 10h1v1h-1zM4 10h1v1h-1zM13 10h1v1h-1zM1 11h1v1h-1zM4 11h1v1h-1zM12 11h1v1h-1zM2 12h3v1h-3zM9 12h3v1h-3zM4 13h6v1h-6z"/><path fill="#f00" d="M5 1h4v1h-4zM2 2h10v1h-10zM1 3h12v1h-12zM1 4h6v1h-6zM1 5h5v1h-5zM1 6h4v1h-4z"/><path fill="#fff" d="M7 5h6v1h-6zM6 6h6v1h-6zM5 7h4v1h-4z"/><path fill="#808080" d="M12 6h1v1h-1zM12 7h1v1h-1zM10 8h3v1h-3zM5 9h8v1h-8zM5 10h8v1h-8zM5 11h7v1h-7zM5 12h4v1h-4z"/><path fill="#800000" d="M1 7h1v1h-1zM1 8h3v1h-3zM1 9h3v1h-3zM1 10h3v1h-3zM2 11h2v1h-2z"/></svg><span class="t" style="left:54px;top:690px;line-height:12px;font-size:11px;color:#000;letter-spacing:-0.522px;">Camembert:1</span><div style="left:7px;top:712px;width:12px;height:1px;background:repeating-linear-gradient(90deg,#a0a0a0 0 1px,transparent 1px 2px)"></div><div style="left:20px;top:706px;width:11px;height:11px;background:#fff;border:1px solid #848484"></div><svg class="ic" style="left:34px;top:706px" width="14" height="13" viewBox="0 0 14 13" shape-rendering="crispEdges"><path fill="#000" d="M0 0h2v1h-2zM0 1h1v1h-1zM2 1h1v1h-1zM1 2h3v1h-3zM3 3h2v1h-2zM4 4h2v1h-2zM5 5h2v1h-2zM6 6h2v1h-2zM7 7h2v1h-2zM8 8h2v1h-2zM9 9h2v1h-2zM10 10h3v1h-3zM11 11h1v1h-1zM13 11h1v1h-1zM12 12h2v1h-2z"/><path fill="#f0f" d="M1 1h1v1h-1zM12 11h1v1h-1z"/></svg><span class="t" style="left:54px;top:706px;line-height:12px;font-size:11px;color:#000;letter-spacing:-0.287px;">SectionCA:1</span><div style="left:7px;top:728px;width:12px;height:1px;background:repeating-linear-gradient(90deg,#a0a0a0 0 1px,transparent 1px 2px)"></div><div style="left:20px;top:722px;width:11px;height:11px;background:#fff;border:1px solid #848484"></div><svg class="ic" style="left:34px;top:722px" width="14" height="13" viewBox="0 0 14 13" shape-rendering="crispEdges"><path fill="#f0f" d="M0 0h2v1h-2zM12 0h2v1h-2zM0 1h2v1h-2zM12 1h2v1h-2zM0 11h2v1h-2zM12 11h2v1h-2zM0 12h2v1h-2zM12 12h2v1h-2z"/><path fill="#000" d="M2 1h10v1h-10zM2 2h1v1h-1zM11 2h1v1h-1zM3 3h1v1h-1zM10 3h1v1h-1zM3 4h1v1h-1zM10 4h1v1h-1zM3 5h1v1h-1zM10 5h1v1h-1zM3 6h1v1h-1zM10 6h1v1h-1zM3 7h1v1h-1zM10 7h1v1h-1zM3 8h1v1h-1zM10 8h1v1h-1zM3 9h1v1h-1zM10 9h1v1h-1zM2 10h1v1h-1zM11 10h1v1h-1zM2 11h10v1h-10z"/></svg><span class="t" style="left:54px;top:722px;line-height:12px;font-size:11px;color:#000;letter-spacing:-0.313px;">ReseauCA</span></div><div style="left:143px;top:99px;width:18px;height:733px;background:linear-gradient(90deg,#e3ebfb 0,#f3f7fe 25%,#fdfeff 60%,#fff)"></div><div style="left:144px;top:99px;width:16px;height:17px;background:linear-gradient(#fff 0,#fdfeff 15%,#dfe9fb 40%,#c3d3f0 65%,#b9cbe9 100%);border:1px solid #8da3c6;border-radius:2px;box-shadow:inset 0 0 0 1px #fff"></div><svg class="ab" style="left:152px;top:107.5px;overflow:visible" width="1" height="1"><path d="M-4 2L0 -2L4 2" fill="none" stroke="#4d5d78" stroke-width="2"/></svg><div style="left:144px;top:116px;width:16px;height:642px;background:linear-gradient(90deg,#e6effd 0,#dbe7fb 30%,#c5d5f2 65%,#b9cbe9 100%);border:1px solid #8da3c6;border-radius:2px;box-shadow:inset 0 0 0 1px #fff"></div><div style="left:149px;top:432px;width:6px;height:1px;background:#8da3c6"></div><div style="left:150px;top:433px;width:6px;height:1px;background:#fff"></div><div style="left:149px;top:434px;width:6px;height:1px;background:#8da3c6"></div><div style="left:150px;top:435px;width:6px;height:1px;background:#fff"></div><div style="left:149px;top:436px;width:6px;height:1px;background:#8da3c6"></div><div style="left:150px;top:437px;width:6px;height:1px;background:#fff"></div><div style="left:149px;top:438px;width:6px;height:1px;background:#8da3c6"></div><div style="left:150px;top:439px;width:6px;height:1px;background:#fff"></div><div style="left:144px;top:815px;width:16px;height:17px;background:linear-gradient(#fff 0,#fdfeff 15%,#dfe9fb 40%,#c3d3f0 65%,#b9cbe9 100%);border:1px solid #8da3c6;border-radius:2px;box-shadow:inset 0 0 0 1px #fff"></div><svg class="ab" style="left:152px;top:823.5px;overflow:visible" width="1" height="1"><path d="M-4 -2L0 2L4 -2" fill="none" stroke="#4d5d78" stroke-width="2"/></svg><div style="left:7px;top:832px;width:138px;height:17px;background:linear-gradient(180deg,#e3ebfb 0,#f3f7fe 25%,#fdfeff 60%,#fff)"></div><div style="left:7px;top:833px;width:17px;height:16px;background:linear-gradient(#fff 0,#fdfeff 15%,#dfe9fb 40%,#c3d3f0 65%,#b9cbe9 100%);border:1px solid #8da3c6;border-radius:2px;box-shadow:inset 0 0 0 1px #fff"></div><svg class="ab" style="left:15.5px;top:841px;overflow:visible" width="1" height="1"><path d="M2 -4L-2 0L2 4" fill="none" stroke="#4d5d78" stroke-width="2"/></svg><div style="left:39px;top:833px;width:87px;height:16px;background:linear-gradient(180deg,#e6effd 0,#dbe7fb 30%,#c5d5f2 65%,#b9cbe9 100%);border:1px solid #8da3c6;border-radius:2px;box-shadow:inset 0 0 0 1px #fff"></div><div style="left:78px;top:838px;width:1px;height:6px;background:#8da3c6"></div><div style="left:79px;top:839px;width:1px;height:6px;background:#fff"></div><div style="left:80px;top:838px;width:1px;height:6px;background:#8da3c6"></div><div style="left:81px;top:839px;width:1px;height:6px;background:#fff"></div><div style="left:82px;top:838px;width:1px;height:6px;background:#8da3c6"></div><div style="left:83px;top:839px;width:1px;height:6px;background:#fff"></div><div style="left:84px;top:838px;width:1px;height:6px;background:#8da3c6"></div><div style="left:85px;top:839px;width:1px;height:6px;background:#fff"></div><div style="left:126px;top:833px;width:17px;height:16px;background:linear-gradient(#fff 0,#fdfeff 15%,#dfe9fb 40%,#c3d3f0 65%,#b9cbe9 100%);border:1px solid #8da3c6;border-radius:2px;box-shadow:inset 0 0 0 1px #fff"></div><svg class="ab" style="left:134.5px;top:841px;overflow:visible" width="1" height="1"><path d="M-2 -4L2 0L-2 4" fill="none" stroke="#4d5d78" stroke-width="2"/></svg><div style="left:144px;top:832px;width:17px;height:17px;background:#ebe9ed"></div><div style="left:5px;top:853px;width:102px;height:23px;background:#fff;border:1px solid;border-color:#808080 #fff #fff #808080;box-shadow:inset 1px 1px 0 #6a6a6e"></div><div style="left:111px;top:854px;width:22px;height:22px;border:1px solid #000;background:#ebe9ed;box-shadow:inset 1px 1px 0 #fff, inset -1px -1px 0 #a0a0a0"></div><svg class="ab" style="left:114px;top:856px" width="16" height="17" viewBox="0 0 16 17"><path d="M2 16V11L4 8H6L7 11V16ZM9 16V11L10 8H12L14 11V16Z" fill="#868686"/><rect x="7" y="11" width="2" height="3" fill="#868686"/><rect x="4" y="6" width="2" height="2" fill="#868686"/><rect x="10" y="6" width="2" height="2" fill="#868686"/><rect x="3" y="13" width="1" height="2" fill="#ebe9ed"/><rect x="10" y="13" width="1" height="2" fill="#ebe9ed"/><g><path d="M4 4.500C5 0.500 11 0.500 11 5" stroke="#868686" fill="none" stroke-width="1.200"/><path d="M1.500 2L2 6L6 5Z" fill="#868686"/></g></svg><div style="left:137px;top:854px;width:22px;height:22px;border:1px solid #000;background:#ebe9ed;box-shadow:inset 1px 1px 0 #fff, inset -1px -1px 0 #a0a0a0"></div><svg class="ab" style="left:140px;top:856px" width="16" height="17" viewBox="0 0 16 17"><path d="M2 16V11L4 8H6L7 11V16ZM9 16V11L10 8H12L14 11V16Z" fill="#868686"/><rect x="7" y="11" width="2" height="3" fill="#868686"/><rect x="4" y="6" width="2" height="2" fill="#868686"/><rect x="10" y="6" width="2" height="2" fill="#868686"/><rect x="3" y="13" width="1" height="2" fill="#ebe9ed"/><rect x="10" y="13" width="1" height="2" fill="#ebe9ed"/><g transform="translate(16 0) scale(-1 1)"><path d="M4 4.500C5 0.500 11 0.500 11 5" stroke="#868686" fill="none" stroke-width="1.200"/><path d="M1.500 2L2 6L6 5Z" fill="#868686"/></g></svg><div style="left:0px;top:880px;width:173px;height:1px;background:#a6a4a8"></div><div style="left:173px;top:77px;width:1257px;height:804px;background:#808080"></div><div style="left:173px;top:77px;width:1px;height:803px;background:#a4a4a8"></div><div style="left:174px;top:77px;width:1px;height:803px;background:#8c8c8c"></div><div style="left:1428px;top:77px;width:2px;height:803px;background:#f4f4f8"></div><div style="left:173px;top:880px;width:1257px;height:1px;background:#fff"></div><div style="left:175px;top:78px;width:1232px;height:524px;border-radius:8px 8px 0 0;overflow:hidden;background:#3464c8"><div style="left:0;top:0;width:1232px;height:524px;background:#3464c8"></div><div style="left:1px;top:0;width:1230px;height:523px;background:#88b8e8"></div><div style="left:2px;top:0;width:1228px;height:522px;background:#4878d4"></div><div style="left:3px;top:0;width:1226px;height:521px;background:#1c3c98"></div><div style="left:0;top:0;width:1232px;height:30px;background:linear-gradient(#1f3da0 0,#1f3da0 1px,#9ccef4 1px,#9ccef4 2px,#86c2ec 2px,#72b0ea 10px,#5c98e0 10px,#5a94de 12px,#3a80d0 12px,#3672c6 18px,#3160b8 24px,#2c54b0 28px,#1a3a94 28px,#1a3a94 30px)"></div><div style="left:0;top:24px;width:1px;height:500px;background:#3464c8"></div><div style="left:1231px;top:24px;width:1px;height:500px;background:#3464c8"></div><div style="left:1px;top:12px;width:1px;height:511px;background:#88b8e8"></div><div style="left:1230px;top:12px;width:1px;height:511px;background:#88b8e8"></div><div style="left:4px;top:29px;width:1224px;height:491px;background:#808080;border:1px solid;border-color:#a8a8a8 #fff #fff #8c8c8c;box-shadow:inset -1px -1px 0 #e4e8f0"></div></div><svg class="ab" style="left:181px;top:86px" width="16" height="13" viewBox="0 0 16 13"><rect x="0" y="0" width="16" height="13" fill="#000"/><rect x="1" y="1" width="14" height="11" fill="#fff"/><path d="M2.500 4C2.500 8 4.500 10.500 8 9.500" stroke="#0a9a8a" stroke-width="1.400" fill="none"/><path d="M5 5C5 8 6 10 8 9.500C9.500 9 10 7 10 5.500" stroke="#3a2a9c" stroke-width="1.300" fill="none"/><path d="M6 10.500C9.500 11 12.500 7.500 14 2.500" stroke="#9a2ab0" stroke-width="1.500" fill="none"/><path d="M9 8C10.500 7 12 5 12.500 3" stroke="#1a8a9a" stroke-width="0.800" fill="none"/></svg><span class="t" style="left:201.5px;top:87px;line-height:15px;font-size:13px;color:#fff;font-weight:bold;letter-spacing:0.306px;text-shadow:1px 1px 0 #0a1e6e;">Fenêtre 1 (110%)</span><div style="left:1335px;top:84px;width:19px;height:19px;background:linear-gradient(#74a8e8 0,#5c98e4 42%,#3a74d4 50%,#3468cc 80%,#4078d4 100%);border:1px solid #86b0e8;border-radius:3px;"></div><svg class="ab" style="left:1335px;top:84px" width="19" height="19" viewBox="0 0 20 20"><rect x="5" y="13" width="7" height="3" fill="#a8c8f0"/></svg><div style="left:1358px;top:84px;width:19px;height:19px;background:linear-gradient(#74a8e8 0,#5c98e4 42%,#3a74d4 50%,#3468cc 80%,#4078d4 100%);border:1px solid #86b0e8;border-radius:3px;"></div><svg class="ab" style="left:1358px;top:84px" width="19" height="19" viewBox="0 0 20 20"><rect x="5.500" y="6.500" width="10" height="9" fill="none" stroke="#fff" stroke-width="1"/><rect x="5" y="5" width="11" height="3" fill="#fff"/></svg><div style="left:1381px;top:84px;width:19px;height:19px;background:linear-gradient(#e08c74 0,#e47858 42%,#d44c24 50%,#cc4218 80%,#d85c38 100%);border:1px solid #e8a890;border-radius:3px;"></div><svg class="ab" style="left:1381px;top:84px" width="19" height="19" viewBox="0 0 20 20"><path d="M5.5 5.500L14.500 14.500M14.500 5.500L5.500 14.500" stroke="#fff" stroke-width="2.200" stroke-linecap="square"/></svg><div style="left:1384px;top:109px;width:17px;height:470px;background:linear-gradient(90deg,#e3ebfb 0,#f3f7fe 25%,#fdfeff 60%,#fff)"></div><div style="left:1385px;top:109px;width:16px;height:17px;background:linear-gradient(#fff 0,#fdfeff 15%,#dfe9fb 40%,#c3d3f0 65%,#b9cbe9 100%);border:1px solid #8da3c6;border-radius:2px;box-shadow:inset 0 0 0 1px #fff"></div><svg class="ab" style="left:1393px;top:117.5px;overflow:visible" width="1" height="1"><path d="M-4 2L0 -2L4 2" fill="none" stroke="#4d5d78" stroke-width="2"/></svg><div style="left:1385px;top:126px;width:16px;height:17px;background:linear-gradient(90deg,#e6effd 0,#dbe7fb 30%,#c5d5f2 65%,#b9cbe9 100%);border:1px solid #8da3c6;border-radius:2px;box-shadow:inset 0 0 0 1px #fff"></div><div style="left:1390px;top:130px;width:6px;height:1px;background:#8da3c6"></div><div style="left:1391px;top:131px;width:6px;height:1px;background:#fff"></div><div style="left:1390px;top:132px;width:6px;height:1px;background:#8da3c6"></div><div style="left:1391px;top:133px;width:6px;height:1px;background:#fff"></div><div style="left:1390px;top:134px;width:6px;height:1px;background:#8da3c6"></div><div style="left:1391px;top:135px;width:6px;height:1px;background:#fff"></div><div style="left:1390px;top:136px;width:6px;height:1px;background:#8da3c6"></div><div style="left:1391px;top:137px;width:6px;height:1px;background:#fff"></div><div style="left:1385px;top:562px;width:16px;height:17px;background:linear-gradient(#fff 0,#fdfeff 15%,#dfe9fb 40%,#c3d3f0 65%,#b9cbe9 100%);border:1px solid #8da3c6;border-radius:2px;box-shadow:inset 0 0 0 1px #fff"></div><svg class="ab" style="left:1393px;top:570.5px;overflow:visible" width="1" height="1"><path d="M-4 -2L0 2L4 -2" fill="none" stroke="#4d5d78" stroke-width="2"/></svg><div style="left:1386px;top:111px;width:1px;height:30px;background:#000"></div><div style="left:1386px;top:564px;width:1px;height:13px;background:#000"></div><div style="left:181px;top:579px;width:1203px;height:17px;background:linear-gradient(180deg,#e3ebfb 0,#f3f7fe 25%,#fdfeff 60%,#fff)"></div><div style="left:181px;top:580px;width:17px;height:16px;background:linear-gradient(#fff 0,#fdfeff 15%,#dfe9fb 40%,#c3d3f0 65%,#b9cbe9 100%);border:1px solid #8da3c6;border-radius:2px;box-shadow:inset 0 0 0 1px #fff"></div><svg class="ab" style="left:189.5px;top:588px;overflow:visible" width="1" height="1"><path d="M2 -4L-2 0L2 4" fill="none" stroke="#4d5d78" stroke-width="2"/></svg><div style="left:209px;top:580px;width:17px;height:16px;background:linear-gradient(180deg,#e6effd 0,#dbe7fb 30%,#c5d5f2 65%,#b9cbe9 100%);border:1px solid #8da3c6;border-radius:2px;box-shadow:inset 0 0 0 1px #fff"></div><div style="left:214px;top:585px;width:1px;height:6px;background:#8da3c6"></div><div style="left:215px;top:586px;width:1px;height:6px;background:#fff"></div><div style="left:216px;top:585px;width:1px;height:6px;background:#8da3c6"></div><div style="left:217px;top:586px;width:1px;height:6px;background:#fff"></div><div style="left:218px;top:585px;width:1px;height:6px;background:#8da3c6"></div><div style="left:219px;top:586px;width:1px;height:6px;background:#fff"></div><div style="left:220px;top:585px;width:1px;height:6px;background:#8da3c6"></div><div style="left:221px;top:586px;width:1px;height:6px;background:#fff"></div><div style="left:1367px;top:580px;width:17px;height:16px;background:linear-gradient(#fff 0,#fdfeff 15%,#dfe9fb 40%,#c3d3f0 65%,#b9cbe9 100%);border:1px solid #8da3c6;border-radius:2px;box-shadow:inset 0 0 0 1px #fff"></div><svg class="ab" style="left:1375.5px;top:588px;overflow:visible" width="1" height="1"><path d="M-2 -4L2 0L-2 4" fill="none" stroke="#4d5d78" stroke-width="2"/></svg><div style="left:1369px;top:581px;width:13px;height:1px;background:#000"></div><div style="left:183px;top:581px;width:13px;height:1px;background:#000"></div><div style="left:211px;top:581px;width:13px;height:1px;background:#000"></div><div style="left:1384px;top:579px;width:17px;height:17px;background:#ebe9ed"></div><div style="left:1395px;top:582px;width:2px;height:2px;background:#fff"></div><div style="left:1394px;top:581px;width:2px;height:2px;background:#c8c6ca"></div><div style="left:1391px;top:586px;width:2px;height:2px;background:#fff"></div><div style="left:1390px;top:585px;width:2px;height:2px;background:#c8c6ca"></div><div style="left:1395px;top:586px;width:2px;height:2px;background:#fff"></div><div style="left:1394px;top:585px;width:2px;height:2px;background:#c8c6ca"></div><div style="left:1387px;top:590px;width:2px;height:2px;background:#fff"></div><div style="left:1386px;top:589px;width:2px;height:2px;background:#c8c6ca"></div><div style="left:1391px;top:590px;width:2px;height:2px;background:#fff"></div><div style="left:1390px;top:589px;width:2px;height:2px;background:#c8c6ca"></div><div style="left:1395px;top:590px;width:2px;height:2px;background:#fff"></div><div style="left:1394px;top:589px;width:2px;height:2px;background:#c8c6ca"></div><svg class="ab" style="left:180px;top:108px" width="1205" height="472"><line x1="0.5" y1="64.5" x2="44.5" y2="27.5" stroke="#000" stroke-width="1"/><line x1="-82.5" y1="133.5" x2="111.5" y2="133.5" stroke="#000" stroke-width="1"/><line x1="14.5" y1="133.5" x2="8.92641" y2="128.482" stroke="#000" stroke-width="1"/><line x1="14.5" y1="133.5" x2="8.92641" y2="138.518" stroke="#000" stroke-width="1"/><line x1="111.5" y1="133.5" x2="226.5" y2="133.5" stroke="#000" stroke-width="1"/><line x1="169" y1="133.5" x2="163.426" y2="128.482" stroke="#000" stroke-width="1"/><line x1="169" y1="133.5" x2="163.426" y2="138.518" stroke="#000" stroke-width="1"/><line x1="226.5" y1="133.5" x2="307.5" y2="214.5" stroke="#000" stroke-width="1"/><line x1="267" y1="174" x2="266.607" y2="166.51" stroke="#000" stroke-width="1"/><line x1="267" y1="174" x2="259.51" y2="173.607" stroke="#000" stroke-width="1"/><line x1="518.5" y1="164.5" x2="600.5" y2="246.5" stroke="#000" stroke-width="1"/><line x1="559.5" y1="205.5" x2="559.107" y2="198.01" stroke="#000" stroke-width="1"/><line x1="559.5" y1="205.5" x2="552.01" y2="205.107" stroke="#000" stroke-width="1"/><line x1="476.5" y1="318.5" x2="558.5" y2="400.5" stroke="#000" stroke-width="1"/><line x1="517.5" y1="359.5" x2="517.107" y2="352.01" stroke="#000" stroke-width="1"/><line x1="517.5" y1="359.5" x2="510.01" y2="359.107" stroke="#000" stroke-width="1"/><line x1="656.5" y1="126.5" x2="780.5" y2="135.5" stroke="#000" stroke-width="1"/><line x1="718.5" y1="131" x2="713.304" y2="125.591" stroke="#000" stroke-width="1"/><line x1="718.5" y1="131" x2="712.578" y2="135.602" stroke="#000" stroke-width="1"/><line x1="780.5" y1="135.5" x2="862.5" y2="217.5" stroke="#000" stroke-width="1"/><line x1="821.5" y1="176.5" x2="821.107" y2="169.01" stroke="#000" stroke-width="1"/><line x1="821.5" y1="176.5" x2="814.01" y2="176.107" stroke="#000" stroke-width="1"/><line x1="650.5" y1="268.5" x2="774.5" y2="277.5" stroke="#000" stroke-width="1"/><line x1="712.5" y1="273" x2="707.304" y2="267.591" stroke="#000" stroke-width="1"/><line x1="712.5" y1="273" x2="706.578" y2="277.602" stroke="#000" stroke-width="1"/><line x1="774.5" y1="277.5" x2="855.5" y2="358.5" stroke="#000" stroke-width="1"/><line x1="815" y1="318" x2="814.607" y2="310.51" stroke="#000" stroke-width="1"/><line x1="815" y1="318" x2="807.51" y2="317.607" stroke="#000" stroke-width="1"/></svg><div style="left:206px;top:135px;width:9px;height:9px;background:#c0c0c0"></div><svg class="ic" style="left:206px;top:135px" width="8.96" height="8.96" viewBox="0 0 8 8" shape-rendering="crispEdges"><path fill="#000080" d="M1 0h6v1h-6zM0 1h1v1h-1zM7 1h1v1h-1zM0 2h1v1h-1zM7 2h1v1h-1zM1 3h6v1h-6zM2 4h1v1h-1zM5 4h1v1h-1zM2 5h1v1h-1zM5 5h1v1h-1zM2 6h1v1h-1zM5 6h1v1h-1zM3 7h2v1h-2z"/><path fill="#808000" d="M1 1h5v1h-5zM1 2h5v1h-5zM3 4h1v1h-1zM3 5h1v1h-1zM3 6h1v1h-1z"/><path fill="#ff0" d="M6 1h1v1h-1zM6 2h1v1h-1zM4 4h1v1h-1zM4 5h1v1h-1zM4 6h1v1h-1z"/></svg><span class="t" style="left:223px;top:133px;line-height:16px;font-size:14px;color:#ffff80;letter-spacing:0.023px;">Article002</span><span class="t" style="left:282.5px;top:221px;line-height:16px;font-size:14px;color:#ffff80;letter-spacing:-0.172px;">Stock001</span><div style="left:291px;top:242px;width:18px;height:17px;background:#c0c0c0"></div><svg class="ic" style="left:293.4px;top:242.1px" width="13.2" height="16.8" viewBox="0 0 11 14" shape-rendering="crispEdges"><path fill="#000080" d="M0 0h4v1h-4zM8 0h1v1h-1zM0 1h1v1h-1zM3 1h1v1h-1zM7 1h3v1h-3zM1 2h2v1h-2zM6 2h5v1h-5zM1 3h1v1h-1zM8 3h1v1h-1zM8 4h1v1h-1zM0 5h4v1h-4zM8 5h1v1h-1zM0 6h1v1h-1zM3 6h1v1h-1zM8 6h1v1h-1zM1 7h2v1h-2zM8 7h1v1h-1zM1 8h1v1h-1zM8 8h1v1h-1zM8 9h1v1h-1zM0 10h4v1h-4zM8 10h1v1h-1zM0 11h1v1h-1zM3 11h1v1h-1zM8 11h1v1h-1zM1 12h2v1h-2zM8 12h1v1h-1zM1 13h1v1h-1zM8 13h1v1h-1z"/><path fill="#808000" d="M1 1h1v1h-1zM2 3h1v1h-1zM1 6h1v1h-1zM2 8h1v1h-1zM1 11h1v1h-1zM2 13h1v1h-1z"/><path fill="#ff0" d="M2 1h1v1h-1zM2 6h1v1h-1zM2 11h1v1h-1z"/></svg><span class="t" style="left:316.5px;top:247px;line-height:12px;font-size:11px;color:#000;font-weight:bold;letter-spacing:-0.109px;font-family:'Liberation Mono',monospace;-webkit-text-stroke:0.5px #000;">0</span><span class="t" style="left:370.5px;top:212px;line-height:16px;font-size:14px;color:#ffff80;letter-spacing:-0.028px;">Machine003</span><svg class="ab" style="left:415px;top:233px" width="7" height="7"><path d="M7 3.5L3.5 0V2H0V5H3.5V7Z" fill="#000"/></svg><svg class="ab" style="left:371px;top:242px" width="7" height="7"><path d="M3.5 0L7 3.5H5V6.5H2V3.5H0Z" fill="#000"/></svg><div style="left:387px;top:242px;width:19px;height:17px;background:#ff0"></div><div style="left:406px;top:242px;width:16px;height:17px;background:#c0c0c0"></div><svg class="ic" style="left:406px;top:242px" width="15.4" height="15.4" viewBox="0 0 14 14" shape-rendering="crispEdges"><path fill="#000080" d="M0 0h14v1h-14zM0 1h1v1h-1zM13 1h1v1h-1zM0 2h1v1h-1zM4 2h6v1h-6zM13 2h1v1h-1zM0 3h1v1h-1zM3 3h1v1h-1zM10 3h1v1h-1zM13 3h1v1h-1zM0 4h1v1h-1zM3 4h1v1h-1zM8 4h1v1h-1zM10 4h1v1h-1zM13 4h1v1h-1zM0 5h1v1h-1zM3 5h1v1h-1zM7 5h1v1h-1zM10 5h1v1h-1zM13 5h1v1h-1zM0 6h1v1h-1zM4 6h6v1h-6zM13 6h1v1h-1zM0 7h1v1h-1zM13 7h1v1h-1zM0 8h1v1h-1zM2 8h4v1h-4zM9 8h2v1h-2zM13 8h1v1h-1zM0 9h1v1h-1zM2 9h1v1h-1zM5 9h1v1h-1zM8 9h1v1h-1zM11 9h1v1h-1zM13 9h1v1h-1zM0 10h1v1h-1zM2 10h1v1h-1zM5 10h1v1h-1zM8 10h1v1h-1zM11 10h1v1h-1zM13 10h1v1h-1zM0 11h1v1h-1zM2 11h4v1h-4zM9 11h2v1h-2zM13 11h1v1h-1zM0 12h1v1h-1zM13 12h1v1h-1zM0 13h14v1h-14z"/><path fill="#008080" d="M1 1h12v1h-12zM1 2h2v1h-2zM11 2h2v1h-2zM1 3h2v1h-2zM11 3h2v1h-2zM1 4h2v1h-2zM11 4h2v1h-2zM1 5h2v1h-2zM11 5h2v1h-2zM1 6h2v1h-2zM11 6h2v1h-2zM1 7h12v1h-12zM1 8h1v1h-1zM6 8h3v1h-3zM11 8h2v1h-2zM1 9h1v1h-1zM6 9h2v1h-2zM12 9h1v1h-1zM1 10h1v1h-1zM6 10h2v1h-2zM12 10h1v1h-1zM1 11h1v1h-1zM6 11h3v1h-3zM11 11h2v1h-2zM1 12h12v1h-12z"/><path fill="#c0c0c0" d="M3 2h1v1h-1zM10 2h1v1h-1zM3 6h1v1h-1zM10 6h1v1h-1z"/><path fill="#fff" d="M4 3h6v1h-6zM4 4h4v1h-4zM9 4h1v1h-1zM4 5h3v1h-3zM8 5h2v1h-2zM10 9h1v1h-1z"/><path fill="#808000" d="M3 9h1v1h-1zM3 10h2v1h-2z"/><path fill="#ff0" d="M4 9h1v1h-1z"/><path fill="#f00" d="M9 9h1v1h-1zM9 10h2v1h-2z"/></svg><span class="t" style="left:487.5px;top:320.5px;line-height:12px;font-size:11px;color:#000;font-weight:bold;letter-spacing:1.397px;font-family:'Liberation Mono',monospace;-webkit-text-stroke:0.5px #000;">ROUTE</span><span class="t" style="left:617.5px;top:211px;line-height:16px;font-size:14px;color:#ffff80;letter-spacing:-0.047px;">Convoyeur001</span><div style="left:496px;top:253px;width:175.2px;height:8px;background:repeating-linear-gradient(90deg,#c0c0c0 0,#c0c0c0 7.76px,#a4a4a4 7.76px,#a4a4a4 8.76px)"></div><div style="left:500px;top:258px;width:2px;height:2px;background:#ff0"></div><div style="left:508px;top:258px;width:2px;height:2px;background:#ff0"></div><div style="left:517px;top:258px;width:2px;height:2px;background:#ff0"></div><div style="left:526px;top:258px;width:2px;height:2px;background:#ff0"></div><div style="left:535px;top:258px;width:2px;height:2px;background:#ff0"></div><div style="left:543px;top:258px;width:2px;height:2px;background:#ff0"></div><div style="left:552px;top:258px;width:2px;height:2px;background:#ff0"></div><div style="left:561px;top:258px;width:2px;height:2px;background:#ff0"></div><div style="left:570px;top:258px;width:2px;height:2px;background:#ff0"></div><div style="left:578px;top:258px;width:2px;height:2px;background:#ff0"></div><div style="left:587px;top:258px;width:2px;height:2px;background:#ff0"></div><div style="left:596px;top:258px;width:2px;height:2px;background:#ff0"></div><div style="left:605px;top:258px;width:2px;height:2px;background:#ff0"></div><div style="left:613px;top:258px;width:2px;height:2px;background:#ff0"></div><div style="left:622px;top:258px;width:2px;height:2px;background:#ff0"></div><div style="left:631px;top:258px;width:2px;height:2px;background:#ff0"></div><div style="left:640px;top:258px;width:2px;height:2px;background:#ff0"></div><div style="left:648px;top:258px;width:2px;height:2px;background:#ff0"></div><div style="left:657px;top:258px;width:2px;height:2px;background:#ff0"></div><div style="left:666px;top:258px;width:2px;height:2px;background:#ff0"></div><div style="left:698px;top:272px;width:18px;height:18px;background:#c0c0c0"></div><svg class="ic" style="left:699.3px;top:273.3px" width="15.4" height="15.4" viewBox="0 0 14 14" shape-rendering="crispEdges"><path fill="#000080" d="M11 0h1v1h-1zM3 1h10v1h-10zM11 2h1v1h-1zM2 3h4v1h-4zM2 4h1v1h-1zM5 4h1v1h-1zM2 5h4v1h-4zM3 6h1v1h-1zM3 7h1v1h-1zM3 8h1v1h-1zM1 9h12v1h-12zM0 10h1v1h-1zM13 10h1v1h-1zM0 11h1v1h-1zM2 11h1v1h-1zM5 11h1v1h-1zM8 11h1v1h-1zM11 11h1v1h-1zM13 11h1v1h-1zM0 12h1v1h-1zM13 12h1v1h-1zM1 13h12v1h-12z"/><path fill="#808000" d="M3 4h1v1h-1zM4 6h1v1h-1zM4 7h1v1h-1zM4 8h1v1h-1z"/><path fill="#ff0" d="M4 4h1v1h-1zM1 10h12v1h-12zM1 11h1v1h-1zM3 11h2v1h-2zM6 11h2v1h-2zM9 11h2v1h-2zM12 11h1v1h-1zM1 12h12v1h-12z"/></svg><span class="t" style="left:781px;top:352px;line-height:12px;font-size:11px;color:#000;font-weight:bold;letter-spacing:1.297px;font-family:'Liberation Mono',monospace;-webkit-text-stroke:0.5px #000;">ROUTE</span><span class="t" style="left:621.5px;top:363px;line-height:16px;font-size:14px;color:#ffff80;letter-spacing:0.078px;">Convoyeur002</span><div style="left:533px;top:400px;width:175.2px;height:8px;background:repeating-linear-gradient(90deg,#c0c0c0 0,#c0c0c0 7.76px,#a4a4a4 7.76px,#a4a4a4 8.76px)"></div><div style="left:536px;top:405px;width:2px;height:2px;background:#ff0"></div><div style="left:545px;top:405px;width:2px;height:2px;background:#ff0"></div><div style="left:554px;top:405px;width:2px;height:2px;background:#ff0"></div><div style="left:563px;top:405px;width:2px;height:2px;background:#ff0"></div><div style="left:572px;top:405px;width:2px;height:2px;background:#ff0"></div><div style="left:580px;top:405px;width:2px;height:2px;background:#ff0"></div><div style="left:589px;top:405px;width:2px;height:2px;background:#ff0"></div><div style="left:598px;top:405px;width:2px;height:2px;background:#ff0"></div><div style="left:607px;top:405px;width:2px;height:2px;background:#ff0"></div><div style="left:615px;top:405px;width:2px;height:2px;background:#ff0"></div><div style="left:624px;top:405px;width:2px;height:2px;background:#ff0"></div><div style="left:633px;top:405px;width:2px;height:2px;background:#ff0"></div><div style="left:642px;top:405px;width:2px;height:2px;background:#ff0"></div><div style="left:650px;top:405px;width:2px;height:2px;background:#ff0"></div><div style="left:659px;top:405px;width:2px;height:2px;background:#ff0"></div><div style="left:668px;top:405px;width:2px;height:2px;background:#ff0"></div><div style="left:677px;top:405px;width:2px;height:2px;background:#ff0"></div><div style="left:685px;top:405px;width:2px;height:2px;background:#ff0"></div><div style="left:694px;top:405px;width:2px;height:2px;background:#ff0"></div><div style="left:703px;top:405px;width:2px;height:2px;background:#ff0"></div><div style="left:568px;top:400px;width:9px;height:9px;background:#c0c0c0"></div><svg class="ic" style="left:568px;top:400px" width="8.96" height="8.96" viewBox="0 0 8 8" shape-rendering="crispEdges"><path fill="#000080" d="M1 0h6v1h-6zM0 1h1v1h-1zM7 1h1v1h-1zM0 2h1v1h-1zM7 2h1v1h-1zM1 3h6v1h-6zM2 4h1v1h-1zM5 4h1v1h-1zM2 5h1v1h-1zM5 5h1v1h-1zM2 6h1v1h-1zM5 6h1v1h-1zM3 7h2v1h-2z"/><path fill="#808000" d="M1 1h5v1h-5zM1 2h5v1h-5zM3 4h1v1h-1zM3 5h1v1h-1zM3 6h1v1h-1z"/><path fill="#ff0" d="M6 1h1v1h-1zM6 2h1v1h-1zM4 4h1v1h-1zM4 5h1v1h-1zM4 6h1v1h-1z"/></svg><div style="left:656px;top:400px;width:9px;height:9px;background:#c0c0c0"></div><svg class="ic" style="left:656px;top:400px" width="8.96" height="8.96" viewBox="0 0 8 8" shape-rendering="crispEdges"><path fill="#000080" d="M1 0h6v1h-6zM0 1h1v1h-1zM7 1h1v1h-1zM0 2h1v1h-1zM7 2h1v1h-1zM1 3h6v1h-6zM2 4h1v1h-1zM5 4h1v1h-1zM2 5h1v1h-1zM5 5h1v1h-1zM2 6h1v1h-1zM5 6h1v1h-1zM3 7h2v1h-2z"/><path fill="#808000" d="M1 1h5v1h-5zM1 2h5v1h-5zM3 4h1v1h-1zM3 5h1v1h-1zM3 6h1v1h-1z"/><path fill="#ff0" d="M6 1h1v1h-1zM6 2h1v1h-1zM4 4h1v1h-1zM4 5h1v1h-1zM4 6h1v1h-1z"/></svg><div style="left:656px;top:426px;width:18px;height:18px;background:#c0c0c0"></div><svg class="ic" style="left:657.3px;top:427.3px" width="15.4" height="15.4" viewBox="0 0 14 14" shape-rendering="crispEdges"><path fill="#000080" d="M11 0h1v1h-1zM3 1h10v1h-10zM11 2h1v1h-1zM2 3h4v1h-4zM2 4h1v1h-1zM5 4h1v1h-1zM2 5h4v1h-4zM3 6h1v1h-1zM3 7h1v1h-1zM3 8h1v1h-1zM1 9h12v1h-12zM0 10h1v1h-1zM13 10h1v1h-1zM0 11h1v1h-1zM2 11h1v1h-1zM5 11h1v1h-1zM8 11h1v1h-1zM11 11h1v1h-1zM13 11h1v1h-1zM0 12h1v1h-1zM13 12h1v1h-1zM1 13h12v1h-12z"/><path fill="#808000" d="M3 4h1v1h-1zM4 6h1v1h-1zM4 7h1v1h-1zM4 8h1v1h-1z"/><path fill="#ff0" d="M4 4h1v1h-1zM1 10h12v1h-12zM1 11h1v1h-1zM3 11h2v1h-2zM6 11h2v1h-2zM9 11h2v1h-2zM12 11h1v1h-1zM1 12h12v1h-12z"/></svg><span class="t" style="left:739px;top:506px;line-height:12px;font-size:11px;color:#000;font-weight:bold;letter-spacing:1.297px;font-family:'Liberation Mono',monospace;-webkit-text-stroke:0.5px #000;">ROUTE</span><div style="left:401px;top:459px;width:18px;height:18px;background:#000"></div><span class="t" style="left:836.5px;top:214px;line-height:16px;font-size:14px;color:#ffff80;letter-spacing:-0.047px;">Stock002</span><div style="left:836px;top:234px;width:18px;height:18px;background:#c0c0c0"></div><svg class="ic" style="left:838.4px;top:234.6px" width="13.2" height="16.8" viewBox="0 0 11 14" shape-rendering="crispEdges"><path fill="#000080" d="M0 0h4v1h-4zM8 0h1v1h-1zM0 1h1v1h-1zM3 1h1v1h-1zM7 1h3v1h-3zM1 2h2v1h-2zM6 2h5v1h-5zM1 3h1v1h-1zM8 3h1v1h-1zM8 4h1v1h-1zM0 5h4v1h-4zM8 5h1v1h-1zM0 6h1v1h-1zM3 6h1v1h-1zM8 6h1v1h-1zM1 7h2v1h-2zM8 7h1v1h-1zM1 8h1v1h-1zM8 8h1v1h-1zM8 9h1v1h-1zM0 10h4v1h-4zM8 10h1v1h-1zM0 11h1v1h-1zM3 11h1v1h-1zM8 11h1v1h-1zM1 12h2v1h-2zM8 12h1v1h-1zM1 13h1v1h-1zM8 13h1v1h-1z"/><path fill="#808000" d="M1 1h1v1h-1zM2 3h1v1h-1zM1 6h1v1h-1zM2 8h1v1h-1zM1 11h1v1h-1zM2 13h1v1h-1z"/><path fill="#ff0" d="M2 1h1v1h-1zM2 6h1v1h-1zM2 11h1v1h-1z"/></svg><span class="t" style="left:862.5px;top:241px;line-height:12px;font-size:11px;color:#000;font-weight:bold;letter-spacing:-0.109px;font-family:'Liberation Mono',monospace;-webkit-text-stroke:0.5px #000;">0</span><span class="t" style="left:924.5px;top:214px;line-height:16px;font-size:14px;color:#ffff80;letter-spacing:-0.028px;">Machine002</span><svg class="ab" style="left:969px;top:234px" width="7" height="7"><path d="M7 3.5L3.5 0V2H0V5H3.5V7Z" fill="#000"/></svg><svg class="ab" style="left:925px;top:243px" width="7" height="7"><path d="M3.5 0L7 3.5H5V6.5H2V3.5H0Z" fill="#000"/></svg><div style="left:942px;top:243px;width:18px;height:18px;background:#ff0"></div><div style="left:960px;top:243px;width:17px;height:18px;background:#c0c0c0"></div><svg class="ic" style="left:960px;top:243px" width="15.4" height="15.4" viewBox="0 0 14 14" shape-rendering="crispEdges"><path fill="#000080" d="M0 0h14v1h-14zM0 1h1v1h-1zM13 1h1v1h-1zM0 2h1v1h-1zM4 2h6v1h-6zM13 2h1v1h-1zM0 3h1v1h-1zM3 3h1v1h-1zM10 3h1v1h-1zM13 3h1v1h-1zM0 4h1v1h-1zM3 4h1v1h-1zM8 4h1v1h-1zM10 4h1v1h-1zM13 4h1v1h-1zM0 5h1v1h-1zM3 5h1v1h-1zM7 5h1v1h-1zM10 5h1v1h-1zM13 5h1v1h-1zM0 6h1v1h-1zM4 6h6v1h-6zM13 6h1v1h-1zM0 7h1v1h-1zM13 7h1v1h-1zM0 8h1v1h-1zM2 8h4v1h-4zM9 8h2v1h-2zM13 8h1v1h-1zM0 9h1v1h-1zM2 9h1v1h-1zM5 9h1v1h-1zM8 9h1v1h-1zM11 9h1v1h-1zM13 9h1v1h-1zM0 10h1v1h-1zM2 10h1v1h-1zM5 10h1v1h-1zM8 10h1v1h-1zM11 10h1v1h-1zM13 10h1v1h-1zM0 11h1v1h-1zM2 11h4v1h-4zM9 11h2v1h-2zM13 11h1v1h-1zM0 12h1v1h-1zM13 12h1v1h-1zM0 13h14v1h-14z"/><path fill="#008080" d="M1 1h12v1h-12zM1 2h2v1h-2zM11 2h2v1h-2zM1 3h2v1h-2zM11 3h2v1h-2zM1 4h2v1h-2zM11 4h2v1h-2zM1 5h2v1h-2zM11 5h2v1h-2zM1 6h2v1h-2zM11 6h2v1h-2zM1 7h12v1h-12zM1 8h1v1h-1zM6 8h3v1h-3zM11 8h2v1h-2zM1 9h1v1h-1zM6 9h2v1h-2zM12 9h1v1h-1zM1 10h1v1h-1zM6 10h2v1h-2zM12 10h1v1h-1zM1 11h1v1h-1zM6 11h3v1h-3zM11 11h2v1h-2zM1 12h12v1h-12z"/><path fill="#c0c0c0" d="M3 2h1v1h-1zM10 2h1v1h-1zM3 6h1v1h-1zM10 6h1v1h-1z"/><path fill="#fff" d="M4 3h6v1h-6zM4 4h4v1h-4zM9 4h1v1h-1zM4 5h3v1h-3zM8 5h2v1h-2zM10 9h1v1h-1z"/><path fill="#808000" d="M3 9h1v1h-1zM3 10h2v1h-2z"/><path fill="#ff0" d="M4 9h1v1h-1z"/><path fill="#f00" d="M9 9h1v1h-1zM9 10h2v1h-2z"/></svg><span class="t" style="left:1043px;top:323px;line-height:12px;font-size:11px;color:#000;font-weight:bold;letter-spacing:1.148px;font-family:'Liberation Mono',monospace;-webkit-text-stroke:0.5px #000;">SHIP</span><span class="t" style="left:830.5px;top:356px;line-height:16px;font-size:14px;color:#ffff80;letter-spacing:-0.047px;">Stock003</span><div style="left:830px;top:376px;width:18px;height:18px;background:#c0c0c0"></div><svg class="ic" style="left:832.4px;top:376.6px" width="13.2" height="16.8" viewBox="0 0 11 14" shape-rendering="crispEdges"><path fill="#000080" d="M0 0h4v1h-4zM8 0h1v1h-1zM0 1h1v1h-1zM3 1h1v1h-1zM7 1h3v1h-3zM1 2h2v1h-2zM6 2h5v1h-5zM1 3h1v1h-1zM8 3h1v1h-1zM8 4h1v1h-1zM0 5h4v1h-4zM8 5h1v1h-1zM0 6h1v1h-1zM3 6h1v1h-1zM8 6h1v1h-1zM1 7h2v1h-2zM8 7h1v1h-1zM1 8h1v1h-1zM8 8h1v1h-1zM8 9h1v1h-1zM0 10h4v1h-4zM8 10h1v1h-1zM0 11h1v1h-1zM3 11h1v1h-1zM8 11h1v1h-1zM1 12h2v1h-2zM8 12h1v1h-1zM1 13h1v1h-1zM8 13h1v1h-1z"/><path fill="#808000" d="M1 1h1v1h-1zM2 3h1v1h-1zM1 6h1v1h-1zM2 8h1v1h-1zM1 11h1v1h-1zM2 13h1v1h-1z"/><path fill="#ff0" d="M2 1h1v1h-1zM2 6h1v1h-1zM2 11h1v1h-1z"/></svg><span class="t" style="left:855.5px;top:383px;line-height:12px;font-size:11px;color:#000;font-weight:bold;letter-spacing:-0.109px;font-family:'Liberation Mono',monospace;-webkit-text-stroke:0.5px #000;">0</span><span class="t" style="left:918.5px;top:356px;line-height:16px;font-size:14px;color:#ffff80;letter-spacing:-0.028px;">Machine004</span><div style="left:962px;top:376px;width:9px;height:9px;background:#c0c0c0"></div><svg class="ic" style="left:962px;top:376px" width="8.96" height="8.96" viewBox="0 0 8 8" shape-rendering="crispEdges"><path fill="#000080" d="M1 0h6v1h-6zM0 1h1v1h-1zM7 1h1v1h-1zM0 2h1v1h-1zM7 2h1v1h-1zM1 3h6v1h-6zM2 4h1v1h-1zM5 4h1v1h-1zM2 5h1v1h-1zM5 5h1v1h-1zM2 6h1v1h-1zM5 6h1v1h-1zM3 7h2v1h-2z"/><path fill="#808000" d="M1 1h5v1h-5zM1 2h5v1h-5zM3 4h1v1h-1zM3 5h1v1h-1zM3 6h1v1h-1z"/><path fill="#ff0" d="M6 1h1v1h-1zM6 2h1v1h-1zM4 4h1v1h-1zM4 5h1v1h-1zM4 6h1v1h-1z"/></svg><svg class="ab" style="left:919px;top:385px" width="7" height="7"><path d="M3.5 0L7 3.5H5V6.5H2V3.5H0Z" fill="#000"/></svg><div style="left:935px;top:385px;width:19px;height:18px;background:#0f0"></div><div style="left:954px;top:385px;width:16px;height:18px;background:#c0c0c0"></div><svg class="ic" style="left:954px;top:386px" width="15.4" height="15.4" viewBox="0 0 14 14" shape-rendering="crispEdges"><path fill="#000080" d="M0 0h14v1h-14zM0 1h1v1h-1zM13 1h1v1h-1zM0 2h1v1h-1zM4 2h6v1h-6zM13 2h1v1h-1zM0 3h1v1h-1zM3 3h1v1h-1zM10 3h1v1h-1zM13 3h1v1h-1zM0 4h1v1h-1zM3 4h1v1h-1zM8 4h1v1h-1zM10 4h1v1h-1zM13 4h1v1h-1zM0 5h1v1h-1zM3 5h1v1h-1zM7 5h1v1h-1zM10 5h1v1h-1zM13 5h1v1h-1zM0 6h1v1h-1zM4 6h6v1h-6zM13 6h1v1h-1zM0 7h1v1h-1zM13 7h1v1h-1zM0 8h1v1h-1zM2 8h4v1h-4zM9 8h2v1h-2zM13 8h1v1h-1zM0 9h1v1h-1zM2 9h1v1h-1zM5 9h1v1h-1zM8 9h1v1h-1zM11 9h1v1h-1zM13 9h1v1h-1zM0 10h1v1h-1zM2 10h1v1h-1zM5 10h1v1h-1zM8 10h1v1h-1zM11 10h1v1h-1zM13 10h1v1h-1zM0 11h1v1h-1zM2 11h4v1h-4zM9 11h2v1h-2zM13 11h1v1h-1zM0 12h1v1h-1zM13 12h1v1h-1zM0 13h14v1h-14z"/><path fill="#008080" d="M1 1h12v1h-12zM1 2h2v1h-2zM11 2h2v1h-2zM1 3h2v1h-2zM11 3h2v1h-2zM1 4h2v1h-2zM11 4h2v1h-2zM1 5h2v1h-2zM11 5h2v1h-2zM1 6h2v1h-2zM11 6h2v1h-2zM1 7h12v1h-12zM1 8h1v1h-1zM6 8h3v1h-3zM11 8h2v1h-2zM1 9h1v1h-1zM6 9h2v1h-2zM12 9h1v1h-1zM1 10h1v1h-1zM6 10h2v1h-2zM12 10h1v1h-1zM1 11h1v1h-1zM6 11h3v1h-3zM11 11h2v1h-2zM1 12h12v1h-12z"/><path fill="#c0c0c0" d="M3 2h1v1h-1zM10 2h1v1h-1zM3 6h1v1h-1zM10 6h1v1h-1z"/><path fill="#fff" d="M4 3h6v1h-6zM4 4h4v1h-4zM9 4h1v1h-1zM4 5h3v1h-3zM8 5h2v1h-2zM10 9h1v1h-1z"/><path fill="#808000" d="M3 9h1v1h-1zM3 10h2v1h-2z"/><path fill="#ff0" d="M4 9h1v1h-1z"/><path fill="#f00" d="M9 9h1v1h-1zM9 10h2v1h-2z"/></svg><span class="t" style="left:1035.5px;top:464px;line-height:12px;font-size:11px;color:#000;font-weight:bold;letter-spacing:1.148px;font-family:'Liberation Mono',monospace;-webkit-text-stroke:0.5px #000;">SHIP</span><div style="left:1199px;top:162px;width:18px;height:18px;background:#c0c0c0"></div><svg class="ic" style="left:1200.3px;top:163.3px" width="15.4" height="15.4" viewBox="0 0 14 14" shape-rendering="crispEdges"><path fill="#000080" d="M5 0h4v1h-4zM2 1h3v1h-3zM9 1h3v1h-3zM1 2h1v1h-1zM12 2h1v1h-1zM0 3h1v1h-1zM13 3h1v1h-1zM0 4h1v1h-1zM7 4h7v1h-7zM0 5h1v1h-1zM6 5h1v1h-1zM13 5h1v1h-1zM0 6h1v1h-1zM5 6h1v1h-1zM13 6h1v1h-1zM0 7h1v1h-1zM2 7h3v1h-3zM9 7h3v1h-3zM13 7h1v1h-1zM0 8h1v1h-1zM4 8h6v1h-6zM13 8h1v1h-1zM0 9h1v1h-1zM4 9h1v1h-1zM13 9h1v1h-1zM0 10h1v1h-1zM4 10h1v1h-1zM13 10h1v1h-1zM1 11h1v1h-1zM4 11h1v1h-1zM12 11h1v1h-1zM2 12h3v1h-3zM9 12h3v1h-3zM4 13h6v1h-6z"/><path fill="#f00" d="M5 1h4v1h-4zM2 2h10v1h-10zM1 3h12v1h-12zM1 4h6v1h-6zM1 5h5v1h-5zM1 6h4v1h-4z"/><path fill="#fff" d="M7 5h6v1h-6zM6 6h6v1h-6zM5 7h4v1h-4z"/><path fill="#808080" d="M12 6h1v1h-1zM12 7h1v1h-1zM10 8h3v1h-3zM5 9h8v1h-8zM5 10h8v1h-8zM5 11h7v1h-7zM5 12h4v1h-4z"/><path fill="#800000" d="M1 7h1v1h-1zM1 8h3v1h-3zM1 9h3v1h-3zM1 10h3v1h-3zM2 11h2v1h-2z"/></svg><span class="t" style="left:1226.5px;top:160px;line-height:16px;font-size:14px;color:#ffff80;letter-spacing:-0.125px;">Camembert001</span><div style="left:1201px;top:199px;width:33px;height:33px;border-radius:50%;background:linear-gradient(90deg,#f00 0,#f00 50.6%,#fff 50.6%)"></div><div style="left:1207px;top:282px;width:18px;height:18px;background:#c0c0c0"></div><svg class="ic" style="left:1208.3px;top:283.3px" width="15.4" height="15.4" viewBox="0 0 14 14" shape-rendering="crispEdges"><path fill="#000080" d="M5 0h4v1h-4zM2 1h3v1h-3zM9 1h3v1h-3zM1 2h1v1h-1zM12 2h1v1h-1zM0 3h1v1h-1zM13 3h1v1h-1zM0 4h1v1h-1zM7 4h7v1h-7zM0 5h1v1h-1zM6 5h1v1h-1zM13 5h1v1h-1zM0 6h1v1h-1zM5 6h1v1h-1zM13 6h1v1h-1zM0 7h1v1h-1zM2 7h3v1h-3zM9 7h3v1h-3zM13 7h1v1h-1zM0 8h1v1h-1zM4 8h6v1h-6zM13 8h1v1h-1zM0 9h1v1h-1zM4 9h1v1h-1zM13 9h1v1h-1zM0 10h1v1h-1zM4 10h1v1h-1zM13 10h1v1h-1zM1 11h1v1h-1zM4 11h1v1h-1zM12 11h1v1h-1zM2 12h3v1h-3zM9 12h3v1h-3zM4 13h6v1h-6z"/><path fill="#f00" d="M5 1h4v1h-4zM2 2h10v1h-10zM1 3h12v1h-12zM1 4h6v1h-6zM1 5h5v1h-5zM1 6h4v1h-4z"/><path fill="#fff" d="M7 5h6v1h-6zM6 6h6v1h-6zM5 7h4v1h-4z"/><path fill="#808080" d="M12 6h1v1h-1zM12 7h1v1h-1zM10 8h3v1h-3zM5 9h8v1h-8zM5 10h8v1h-8zM5 11h7v1h-7zM5 12h4v1h-4z"/><path fill="#800000" d="M1 7h1v1h-1zM1 8h3v1h-3zM1 9h3v1h-3zM1 10h3v1h-3zM2 11h2v1h-2z"/></svg><span class="t" style="left:1233px;top:280px;line-height:16px;font-size:14px;color:#ffff80;letter-spacing:0.000px;">Camembert002</span><div style="left:1208px;top:319px;width:33px;height:33px;border-radius:50%;background:#00f"></div><svg class="ab" style="left:180px;top:108px" width="1205" height="472"><line x1="226.5" y1="133.5" x2="244.5" y2="151.5" stroke="#000" stroke-width="1"/><line x1="518.5" y1="164.5" x2="537.5" y2="183.5" stroke="#000" stroke-width="1"/><line x1="476.5" y1="318.5" x2="495.5" y2="337.5" stroke="#000" stroke-width="1"/><line x1="780.5" y1="135.5" x2="798.5" y2="153.5" stroke="#000" stroke-width="1"/><line x1="774.5" y1="277.5" x2="792.5" y2="295.5" stroke="#000" stroke-width="1"/><line x1="656.5" y1="126.5" x2="675.5" y2="127.9" stroke="#000" stroke-width="1"/><line x1="650.5" y1="268.5" x2="669.5" y2="269.9" stroke="#000" stroke-width="1"/></svg><div style="left:176px;top:602px;width:1132px;height:278px;border-radius:8px 8px 0 0;overflow:hidden;background:#4c84dc"><div style="left:0;top:0;width:1132px;height:278px;background:#5088dc"></div><div style="left:1px;top:0;width:1130px;height:277px;background:#6c9ce4"></div><div style="left:2px;top:0;width:1128px;height:276px;background:#94c0f0"></div><div style="left:0;top:0;width:1132px;height:30px;background:linear-gradient(#88b4e8 0,#88b4e8 1px,#5478bc 1px,#5880c4 6px,#5c90d0 14px,#70a0dc 15px,#84b4e4 22px,#92c4e8 28px,#78a4e8 28px,#78a4e8 30px)"></div><div style="left:0;top:10px;width:1px;height:268px;background:#5088dc"></div><div style="left:1131px;top:10px;width:1px;height:268px;background:#5088dc"></div><div style="left:4px;top:29px;width:1124px;height:245px;background:#c0c0c0;border:1px solid;border-color:#8c8c90 #fff #fff #8c8c90;box-shadow:inset 1px 1px 0 #a4a4a8,inset -1px -1px 0 #e4e8f0"></div></div><svg class="ab" style="left:182px;top:610px" width="16" height="13" viewBox="0 0 16 13"><rect x="0" y="0" width="16" height="13" fill="#000"/><rect x="1" y="1" width="14" height="11" fill="#fff"/><path d="M2.500 4C2.500 8 4.500 10.500 8 9.500" stroke="#0a9a8a" stroke-width="1.400" fill="none"/><path d="M5 5C5 8 6 10 8 9.500C9.500 9 10 7 10 5.500" stroke="#3a2a9c" stroke-width="1.300" fill="none"/><path d="M6 10.500C9.500 11 12.500 7.500 14 2.500" stroke="#9a2ab0" stroke-width="1.500" fill="none"/><path d="M9 8C10.500 7 12 5 12.500 3" stroke="#1a8a9a" stroke-width="0.800" fill="none"/></svg><span class="t" style="left:202px;top:611px;line-height:15px;font-size:13px;color:#fff;font-weight:bold;letter-spacing:0.017px;text-shadow:1px 1px 0 #3a58a0;">Eléments prédéfinis (190%)</span><div style="left:1235px;top:608px;width:20px;height:20px;background:linear-gradient(#5884cc,#4c7ed0 45%,#7cace4 100%);border:1px solid #3c64b8;border-radius:3px;"></div><svg class="ab" style="left:1235px;top:608px" width="20" height="20" viewBox="0 0 20 20"><rect x="5" y="13" width="7" height="3" fill="#8ab4ec"/></svg><div style="left:1258px;top:608px;width:20px;height:20px;background:linear-gradient(#5884cc,#4c7ed0 45%,#7cace4 100%);border:1px solid #3c64b8;border-radius:3px;"></div><svg class="ab" style="left:1258px;top:608px" width="20" height="20" viewBox="0 0 20 20"><rect x="5.500" y="6.500" width="10" height="9" fill="none" stroke="#fff" stroke-width="1"/><rect x="5" y="5" width="11" height="3" fill="#fff"/></svg><div style="left:1281px;top:608px;width:20px;height:20px;background:linear-gradient(#5888d4,#4478cc 45%,#78aae4 100%);border:1px solid #3c64b8;border-radius:3px;"></div><svg class="ab" style="left:1281px;top:608px" width="20" height="20" viewBox="0 0 20 20"><path d="M5.5 5.500L14.500 14.500M14.500 5.500L5.500 14.500" stroke="#fff" stroke-width="2.200" stroke-linecap="square"/></svg><div style="left:1285px;top:633px;width:17px;height:224px;background:linear-gradient(90deg,#e3ebfb 0,#f3f7fe 25%,#fdfeff 60%,#fff)"></div><div style="left:1286px;top:633px;width:16px;height:17px;background:linear-gradient(#fff 0,#fdfeff 15%,#dfe9fb 40%,#c3d3f0 65%,#b9cbe9 100%);border:1px solid #8da3c6;border-radius:2px;box-shadow:inset 0 0 0 1px #fff"></div><svg class="ab" style="left:1294px;top:641.5px;overflow:visible" width="1" height="1"><path d="M-4 2L0 -2L4 2" fill="none" stroke="#4d5d78" stroke-width="2"/></svg><div style="left:1286px;top:650px;width:16px;height:17px;background:linear-gradient(90deg,#e6effd 0,#dbe7fb 30%,#c5d5f2 65%,#b9cbe9 100%);border:1px solid #8da3c6;border-radius:2px;box-shadow:inset 0 0 0 1px #fff"></div><div style="left:1291px;top:654px;width:6px;height:1px;background:#8da3c6"></div><div style="left:1292px;top:655px;width:6px;height:1px;background:#fff"></div><div style="left:1291px;top:656px;width:6px;height:1px;background:#8da3c6"></div><div style="left:1292px;top:657px;width:6px;height:1px;background:#fff"></div><div style="left:1291px;top:658px;width:6px;height:1px;background:#8da3c6"></div><div style="left:1292px;top:659px;width:6px;height:1px;background:#fff"></div><div style="left:1291px;top:660px;width:6px;height:1px;background:#8da3c6"></div><div style="left:1292px;top:661px;width:6px;height:1px;background:#fff"></div><div style="left:1286px;top:840px;width:16px;height:17px;background:linear-gradient(#fff 0,#fdfeff 15%,#dfe9fb 40%,#c3d3f0 65%,#b9cbe9 100%);border:1px solid #8da3c6;border-radius:2px;box-shadow:inset 0 0 0 1px #fff"></div><svg class="ab" style="left:1294px;top:848.5px;overflow:visible" width="1" height="1"><path d="M-4 -2L0 2L4 -2" fill="none" stroke="#4d5d78" stroke-width="2"/></svg><div style="left:182px;top:857px;width:1103px;height:17px;background:linear-gradient(180deg,#e3ebfb 0,#f3f7fe 25%,#fdfeff 60%,#fff)"></div><div style="left:182px;top:858px;width:17px;height:16px;background:linear-gradient(#fff 0,#fdfeff 15%,#dfe9fb 40%,#c3d3f0 65%,#b9cbe9 100%);border:1px solid #8da3c6;border-radius:2px;box-shadow:inset 0 0 0 1px #fff"></div><svg class="ab" style="left:190.5px;top:866px;overflow:visible" width="1" height="1"><path d="M2 -4L-2 0L2 4" fill="none" stroke="#4d5d78" stroke-width="2"/></svg><div style="left:199px;top:858px;width:17px;height:16px;background:linear-gradient(180deg,#e6effd 0,#dbe7fb 30%,#c5d5f2 65%,#b9cbe9 100%);border:1px solid #8da3c6;border-radius:2px;box-shadow:inset 0 0 0 1px #fff"></div><div style="left:204px;top:863px;width:1px;height:6px;background:#8da3c6"></div><div style="left:205px;top:864px;width:1px;height:6px;background:#fff"></div><div style="left:206px;top:863px;width:1px;height:6px;background:#8da3c6"></div><div style="left:207px;top:864px;width:1px;height:6px;background:#fff"></div><div style="left:208px;top:863px;width:1px;height:6px;background:#8da3c6"></div><div style="left:209px;top:864px;width:1px;height:6px;background:#fff"></div><div style="left:210px;top:863px;width:1px;height:6px;background:#8da3c6"></div><div style="left:211px;top:864px;width:1px;height:6px;background:#fff"></div><div style="left:1268px;top:858px;width:17px;height:16px;background:linear-gradient(#fff 0,#fdfeff 15%,#dfe9fb 40%,#c3d3f0 65%,#b9cbe9 100%);border:1px solid #8da3c6;border-radius:2px;box-shadow:inset 0 0 0 1px #fff"></div><svg class="ab" style="left:1276.5px;top:866px;overflow:visible" width="1" height="1"><path d="M-2 -4L2 0L-2 4" fill="none" stroke="#4d5d78" stroke-width="2"/></svg><div style="left:1285px;top:857px;width:17px;height:17px;background:#ebe9ed"></div><div style="left:1296px;top:860px;width:2px;height:2px;background:#fff"></div><div style="left:1295px;top:859px;width:2px;height:2px;background:#c8c6ca"></div><div style="left:1292px;top:864px;width:2px;height:2px;background:#fff"></div><div style="left:1291px;top:863px;width:2px;height:2px;background:#c8c6ca"></div><div style="left:1296px;top:864px;width:2px;height:2px;background:#fff"></div><div style="left:1295px;top:863px;width:2px;height:2px;background:#c8c6ca"></div><div style="left:1288px;top:868px;width:2px;height:2px;background:#fff"></div><div style="left:1287px;top:867px;width:2px;height:2px;background:#c8c6ca"></div><div style="left:1292px;top:868px;width:2px;height:2px;background:#fff"></div><div style="left:1291px;top:867px;width:2px;height:2px;background:#c8c6ca"></div><div style="left:1296px;top:868px;width:2px;height:2px;background:#fff"></div><div style="left:1295px;top:867px;width:2px;height:2px;background:#c8c6ca"></div><div style="left:182px;top:633px;width:1103px;height:224px;overflow:hidden"><svg class="ic" style="left:38px;top:49px" width="15.2" height="15.2" viewBox="0 0 8 8" shape-rendering="crispEdges"><path fill="#000080" d="M1 0h6v1h-6zM0 1h1v1h-1zM7 1h1v1h-1zM0 2h1v1h-1zM7 2h1v1h-1zM1 3h6v1h-6zM2 4h1v1h-1zM5 4h1v1h-1zM2 5h1v1h-1zM5 5h1v1h-1zM2 6h1v1h-1zM5 6h1v1h-1zM3 7h2v1h-2z"/><path fill="#808000" d="M1 1h5v1h-5zM1 2h5v1h-5zM3 4h1v1h-1zM3 5h1v1h-1zM3 6h1v1h-1z"/><path fill="#ff0" d="M6 1h1v1h-1zM6 2h1v1h-1zM4 4h1v1h-1zM4 5h1v1h-1zM4 6h1v1h-1z"/></svg><span class="t" style="left:19.5px;top:67px;line-height:17px;font-size:16px;color:#448686;letter-spacing:0.221px;">Article</span><svg class="ic" style="left:127px;top:36px" width="20.9" height="26.6" viewBox="0 0 11 14" shape-rendering="crispEdges"><path fill="#000080" d="M0 0h4v1h-4zM8 0h1v1h-1zM0 1h1v1h-1zM3 1h1v1h-1zM7 1h3v1h-3zM1 2h2v1h-2zM6 2h5v1h-5zM1 3h1v1h-1zM8 3h1v1h-1zM8 4h1v1h-1zM0 5h4v1h-4zM8 5h1v1h-1zM0 6h1v1h-1zM3 6h1v1h-1zM8 6h1v1h-1zM1 7h2v1h-2zM8 7h1v1h-1zM1 8h1v1h-1zM8 8h1v1h-1zM8 9h1v1h-1zM0 10h4v1h-4zM8 10h1v1h-1zM0 11h1v1h-1zM3 11h1v1h-1zM8 11h1v1h-1zM1 12h2v1h-2zM8 12h1v1h-1zM1 13h1v1h-1zM8 13h1v1h-1z"/><path fill="#808000" d="M1 1h1v1h-1zM2 3h1v1h-1zM1 6h1v1h-1zM2 8h1v1h-1zM1 11h1v1h-1zM2 13h1v1h-1z"/><path fill="#ff0" d="M2 1h1v1h-1zM2 6h1v1h-1zM2 11h1v1h-1z"/></svg><span class="t" style="left:114.5px;top:67px;line-height:17px;font-size:16px;color:#448686;letter-spacing:0.197px;">Stock</span><svg class="ic" style="left:214px;top:36px" width="26.6" height="26.6" viewBox="0 0 14 14" shape-rendering="crispEdges"><path fill="#000080" d="M0 0h14v1h-14zM0 1h1v1h-1zM13 1h1v1h-1zM0 2h1v1h-1zM4 2h6v1h-6zM13 2h1v1h-1zM0 3h1v1h-1zM3 3h1v1h-1zM10 3h1v1h-1zM13 3h1v1h-1zM0 4h1v1h-1zM3 4h1v1h-1zM8 4h1v1h-1zM10 4h1v1h-1zM13 4h1v1h-1zM0 5h1v1h-1zM3 5h1v1h-1zM7 5h1v1h-1zM10 5h1v1h-1zM13 5h1v1h-1zM0 6h1v1h-1zM4 6h6v1h-6zM13 6h1v1h-1zM0 7h1v1h-1zM13 7h1v1h-1zM0 8h1v1h-1zM2 8h4v1h-4zM9 8h2v1h-2zM13 8h1v1h-1zM0 9h1v1h-1zM2 9h1v1h-1zM5 9h1v1h-1zM8 9h1v1h-1zM11 9h1v1h-1zM13 9h1v1h-1zM0 10h1v1h-1zM2 10h1v1h-1zM5 10h1v1h-1zM8 10h1v1h-1zM11 10h1v1h-1zM13 10h1v1h-1zM0 11h1v1h-1zM2 11h4v1h-4zM9 11h2v1h-2zM13 11h1v1h-1zM0 12h1v1h-1zM13 12h1v1h-1zM0 13h14v1h-14z"/><path fill="#008080" d="M1 1h12v1h-12zM1 2h2v1h-2zM11 2h2v1h-2zM1 3h2v1h-2zM11 3h2v1h-2zM1 4h2v1h-2zM11 4h2v1h-2zM1 5h2v1h-2zM11 5h2v1h-2zM1 6h2v1h-2zM11 6h2v1h-2zM1 7h12v1h-12zM1 8h1v1h-1zM6 8h3v1h-3zM11 8h2v1h-2zM1 9h1v1h-1zM6 9h2v1h-2zM12 9h1v1h-1zM1 10h1v1h-1zM6 10h2v1h-2zM12 10h1v1h-1zM1 11h1v1h-1zM6 11h3v1h-3zM11 11h2v1h-2zM1 12h12v1h-12z"/><path fill="#c0c0c0" d="M3 2h1v1h-1zM10 2h1v1h-1zM3 6h1v1h-1zM10 6h1v1h-1z"/><path fill="#fff" d="M4 3h6v1h-6zM4 4h4v1h-4zM9 4h1v1h-1zM4 5h3v1h-3zM8 5h2v1h-2zM10 9h1v1h-1z"/><path fill="#808000" d="M3 9h1v1h-1zM3 10h2v1h-2z"/><path fill="#ff0" d="M4 9h1v1h-1z"/><path fill="#f00" d="M9 9h1v1h-1zM9 10h2v1h-2z"/></svg><span class="t" style="left:195.5px;top:67px;line-height:17px;font-size:16px;color:#448686;letter-spacing:0.145px;">Machine</span><svg class="ic" style="left:314px;top:36px" width="11.4" height="26.6" viewBox="0 0 6 14" shape-rendering="crispEdges"><path fill="#000080" d="M2 0h2v1h-2zM1 1h1v1h-1zM4 1h1v1h-1zM1 2h1v1h-1zM4 2h1v1h-1zM2 10h2v1h-2zM2 11h2v1h-2zM2 12h2v1h-2zM1 13h4v1h-4z"/><path fill="#f00" d="M2 1h1v1h-1zM3 2h1v1h-1zM0 8h1v1h-1zM5 8h1v1h-1z"/><path fill="#fff" d="M3 1h1v1h-1zM2 2h1v1h-1zM2 3h2v1h-2zM2 4h2v1h-2zM2 5h2v1h-2z"/><path fill="#00f" d="M1 4h1v1h-1zM4 4h1v1h-1zM0 5h2v1h-2zM4 5h2v1h-2zM0 6h6v1h-6zM0 7h6v1h-6zM1 8h4v1h-4zM1 9h4v1h-4z"/></svg><span class="t" style="left:274.5px;top:67px;line-height:17px;font-size:16px;color:#448686;letter-spacing:0.168px;">Ressource</span><svg class="ic" style="left:397px;top:36px" width="26.6" height="26.6" viewBox="0 0 14 14" shape-rendering="crispEdges"><path fill="#000080" d="M11 0h1v1h-1zM3 1h10v1h-10zM11 2h1v1h-1zM2 3h4v1h-4zM2 4h1v1h-1zM5 4h1v1h-1zM2 5h4v1h-4zM3 6h1v1h-1zM3 7h1v1h-1zM3 8h1v1h-1zM1 9h12v1h-12zM0 10h1v1h-1zM13 10h1v1h-1zM0 11h1v1h-1zM2 11h1v1h-1zM5 11h1v1h-1zM8 11h1v1h-1zM11 11h1v1h-1zM13 11h1v1h-1zM0 12h1v1h-1zM13 12h1v1h-1zM1 13h12v1h-12z"/><path fill="#808000" d="M3 4h1v1h-1zM4 6h1v1h-1zM4 7h1v1h-1zM4 8h1v1h-1z"/><path fill="#ff0" d="M4 4h1v1h-1zM1 10h12v1h-12zM1 11h1v1h-1zM3 11h2v1h-2zM6 11h2v1h-2zM9 11h2v1h-2zM12 11h1v1h-1zM1 12h12v1h-12z"/></svg><span class="t" style="left:364px;top:67px;line-height:17px;font-size:16px;color:#448686;letter-spacing:0.181px;">Convoyeur</span><svg class="ic" style="left:488px;top:36px" width="26.6" height="24.7" viewBox="0 0 14 13" shape-rendering="crispEdges"><path fill="#000080" d="M4 0h6v1h-6zM3 1h8v1h-8zM2 2h2v1h-2zM6 2h1v1h-1zM10 2h2v1h-2zM1 3h3v1h-3zM6 3h1v1h-1zM10 3h3v1h-3zM0 4h2v1h-2zM6 4h1v1h-1zM12 4h2v1h-2zM0 5h2v1h-2zM6 5h1v1h-1zM12 5h2v1h-2zM0 6h3v1h-3zM6 6h1v1h-1zM11 6h3v1h-3zM0 7h2v1h-2zM7 7h1v1h-1zM12 7h2v1h-2zM0 8h2v1h-2zM8 8h1v1h-1zM12 8h2v1h-2zM1 9h3v1h-3zM9 9h4v1h-4zM2 10h2v1h-2zM6 10h1v1h-1zM10 10h2v1h-2zM3 11h8v1h-8zM4 12h6v1h-6z"/><path fill="#fff" d="M4 2h2v1h-2zM7 2h3v1h-3zM4 3h2v1h-2zM7 3h3v1h-3zM2 4h4v1h-4zM7 4h5v1h-5zM2 5h4v1h-4zM7 5h5v1h-5zM3 6h3v1h-3zM7 6h4v1h-4zM2 7h5v1h-5zM8 7h4v1h-4zM2 8h6v1h-6zM9 8h3v1h-3zM4 9h5v1h-5zM4 10h2v1h-2zM7 10h3v1h-3z"/></svg><span class="t" style="left:467px;top:67px;line-height:17px;font-size:16px;color:#448686;letter-spacing:0.090px;">Planning</span><svg class="ic" style="left:579px;top:36px" width="26.6" height="26.6" viewBox="0 0 14 14" shape-rendering="crispEdges"><path fill="#f00" d="M11 0h3v1h-3zM11 1h3v1h-3zM11 2h3v1h-3z"/><path fill="#000080" d="M12 3h1v1h-1zM12 4h1v1h-1zM12 5h1v1h-1zM12 6h1v1h-1zM0 7h14v1h-14zM0 8h1v1h-1zM13 8h1v1h-1zM0 9h1v1h-1zM2 9h3v1h-3zM9 9h3v1h-3zM13 9h1v1h-1zM0 10h6v1h-6zM8 10h6v1h-6zM0 11h3v1h-3zM4 11h6v1h-6zM11 11h3v1h-3zM1 12h5v1h-5zM8 12h5v1h-5zM2 13h3v1h-3zM9 13h3v1h-3z"/><path fill="#ff0" d="M1 8h12v1h-12zM1 9h1v1h-1zM5 9h4v1h-4zM12 9h1v1h-1zM6 10h2v1h-2zM3 11h1v1h-1zM10 11h1v1h-1z"/></svg><span class="t" style="left:559px;top:67px;line-height:17px;font-size:16px;color:#448686;letter-spacing:0.188px;">Vehicule</span><svg class="ic" style="left:670px;top:36px" width="26.6" height="26.6" viewBox="0 0 14 14" shape-rendering="crispEdges"><path fill="#000080" d="M1 0h2v1h-2zM11 0h2v1h-2zM1 1h2v1h-2zM11 1h2v1h-2zM1 4h2v1h-2zM11 4h2v1h-2zM1 5h2v1h-2zM11 5h2v1h-2zM1 8h2v1h-2zM11 8h2v1h-2zM1 9h2v1h-2zM11 9h2v1h-2zM1 12h2v1h-2zM11 12h2v1h-2zM1 13h2v1h-2zM11 13h2v1h-2z"/><path fill="#808000" d="M0 2h14v1h-14zM0 3h14v1h-14zM0 6h14v1h-14zM0 7h14v1h-14zM0 10h14v1h-14zM0 11h14v1h-14z"/></svg><span class="t" style="left:663px;top:67px;line-height:17px;font-size:16px;color:#448686;letter-spacing:0.084px;">Piste</span><svg class="ic" style="left:762px;top:36px" width="26.6" height="26.6" viewBox="0 0 14 14" shape-rendering="crispEdges"><path fill="#000080" d="M0 0h1v1h-1zM0 1h1v1h-1zM0 2h1v1h-1zM0 3h1v1h-1zM0 4h1v1h-1zM0 5h1v1h-1zM0 6h1v1h-1zM0 7h1v1h-1zM0 8h1v1h-1zM0 9h1v1h-1zM0 10h1v1h-1zM0 11h1v1h-1zM0 12h1v1h-1zM0 13h14v1h-14z"/><path fill="#f00" d="M7 2h2v1h-2zM6 3h1v1h-1zM9 3h1v1h-1zM5 4h1v1h-1zM10 4h1v1h-1zM5 5h1v1h-1zM10 5h1v1h-1zM4 6h1v1h-1zM11 6h1v1h-1zM4 7h1v1h-1zM11 7h1v1h-1zM3 8h1v1h-1zM12 8h1v1h-1zM3 9h1v1h-1zM12 9h1v1h-1zM2 10h1v1h-1zM13 10h1v1h-1zM2 11h1v1h-1zM13 11h1v1h-1z"/></svg><span class="t" style="left:746px;top:67px;line-height:17px;font-size:16px;color:#448686;letter-spacing:0.253px;">Courbe</span><svg class="ic" style="left:853px;top:36px" width="26.6" height="26.6" viewBox="0 0 14 14" shape-rendering="crispEdges"><path fill="#000080" d="M0 0h1v1h-1zM0 1h1v1h-1zM0 2h1v1h-1zM0 3h1v1h-1zM0 4h1v1h-1zM0 5h1v1h-1zM0 6h1v1h-1zM0 7h1v1h-1zM0 8h1v1h-1zM0 9h1v1h-1zM0 10h1v1h-1zM0 11h1v1h-1zM0 12h1v1h-1zM0 13h14v1h-14z"/><path fill="#f00" d="M11 2h2v1h-2zM11 3h2v1h-2zM11 4h2v1h-2zM11 5h2v1h-2zM5 6h2v1h-2zM11 6h2v1h-2zM5 7h2v1h-2zM11 7h2v1h-2zM5 8h2v1h-2zM8 8h2v1h-2zM11 8h2v1h-2zM2 9h2v1h-2zM5 9h2v1h-2zM8 9h2v1h-2zM11 9h2v1h-2zM2 10h2v1h-2zM5 10h2v1h-2zM8 10h2v1h-2zM11 10h2v1h-2zM2 11h2v1h-2zM5 11h2v1h-2zM8 11h2v1h-2zM11 11h2v1h-2zM2 12h2v1h-2zM5 12h2v1h-2zM8 12h2v1h-2zM11 12h2v1h-2z"/></svg><span class="t" style="left:813px;top:67px;line-height:17px;font-size:16px;color:#448686;letter-spacing:-0.013px;">Histogramme</span><svg class="ic" style="left:944px;top:36px" width="26.6" height="26.6" viewBox="0 0 14 14" shape-rendering="crispEdges"><path fill="#000080" d="M5 0h4v1h-4zM2 1h3v1h-3zM9 1h3v1h-3zM1 2h1v1h-1zM12 2h1v1h-1zM0 3h1v1h-1zM13 3h1v1h-1zM0 4h1v1h-1zM7 4h7v1h-7zM0 5h1v1h-1zM6 5h1v1h-1zM13 5h1v1h-1zM0 6h1v1h-1zM5 6h1v1h-1zM13 6h1v1h-1zM0 7h1v1h-1zM2 7h3v1h-3zM9 7h3v1h-3zM13 7h1v1h-1zM0 8h1v1h-1zM4 8h6v1h-6zM13 8h1v1h-1zM0 9h1v1h-1zM4 9h1v1h-1zM13 9h1v1h-1zM0 10h1v1h-1zM4 10h1v1h-1zM13 10h1v1h-1zM1 11h1v1h-1zM4 11h1v1h-1zM12 11h1v1h-1zM2 12h3v1h-3zM9 12h3v1h-3zM4 13h6v1h-6z"/><path fill="#f00" d="M5 1h4v1h-4zM2 2h10v1h-10zM1 3h12v1h-12zM1 4h6v1h-6zM1 5h5v1h-5zM1 6h4v1h-4z"/><path fill="#fff" d="M7 5h6v1h-6zM6 6h6v1h-6zM5 7h4v1h-4z"/><path fill="#808080" d="M12 6h1v1h-1zM12 7h1v1h-1zM10 8h3v1h-3zM5 9h8v1h-8zM5 10h8v1h-8zM5 11h7v1h-7zM5 12h4v1h-4z"/><path fill="#800000" d="M1 7h1v1h-1zM1 8h3v1h-3zM1 9h3v1h-3zM1 10h3v1h-3zM2 11h2v1h-2z"/></svg><span class="t" style="left:910px;top:67px;line-height:17px;font-size:16px;color:#448686;letter-spacing:0.047px;">Camembert</span><svg class="ic" style="left:32px;top:127px" width="26.6" height="24.7" viewBox="0 0 14 13" shape-rendering="crispEdges"><path fill="#000080" d="M2 0h1v1h-1zM0 1h1v1h-1zM2 1h1v1h-1zM0 2h1v1h-1zM2 2h1v1h-1zM2 3h1v1h-1zM0 4h1v1h-1zM2 4h1v1h-1zM0 5h1v1h-1zM2 5h1v1h-1zM2 6h1v1h-1zM0 7h1v1h-1zM2 7h1v1h-1zM0 8h1v1h-1zM2 8h1v1h-1zM2 9h1v1h-1zM0 10h1v1h-1zM2 10h1v1h-1zM0 11h1v1h-1zM2 11h1v1h-1zM2 12h1v1h-1z"/><path fill="#f00" d="M3 1h9v1h-9zM3 2h9v1h-9zM3 4h3v1h-3zM3 5h3v1h-3zM3 7h5v1h-5zM3 8h5v1h-5zM3 10h11v1h-11zM3 11h11v1h-11z"/></svg><span class="t" style="left:5px;top:158px;line-height:17px;font-size:16px;color:#448686;letter-spacing:0.164px;">DistEntier</span><svg class="ic" style="left:123px;top:127px" width="26.6" height="24.7" viewBox="0 0 14 13" shape-rendering="crispEdges"><path fill="#000080" d="M2 0h1v1h-1zM0 1h1v1h-1zM2 1h1v1h-1zM0 2h1v1h-1zM2 2h1v1h-1zM2 3h1v1h-1zM0 4h1v1h-1zM2 4h1v1h-1zM0 5h1v1h-1zM2 5h1v1h-1zM2 6h1v1h-1zM0 7h1v1h-1zM2 7h1v1h-1zM0 8h1v1h-1zM2 8h1v1h-1zM2 9h1v1h-1zM0 10h1v1h-1zM2 10h1v1h-1zM0 11h1v1h-1zM2 11h1v1h-1zM2 12h1v1h-1z"/><path fill="#f00" d="M3 1h9v1h-9zM3 2h9v1h-9zM3 4h3v1h-3zM3 5h3v1h-3zM3 7h5v1h-5zM3 8h5v1h-5zM3 10h11v1h-11zM3 11h11v1h-11z"/></svg><span class="t" style="left:102px;top:158px;line-height:17px;font-size:16px;color:#448686;letter-spacing:-0.059px;">DistReal</span><svg class="ic" style="left:214px;top:127px" width="26.6" height="26.6" viewBox="0 0 14 14" shape-rendering="crispEdges"><path fill="#000080" d="M0 0h4v1h-4zM0 1h1v1h-1zM3 1h1v1h-1zM0 2h14v1h-14zM1 3h1v1h-1zM4 3h1v1h-1zM13 3h1v1h-1zM1 4h1v1h-1zM4 4h1v1h-1zM6 4h5v1h-5zM13 4h1v1h-1zM1 5h1v1h-1zM4 5h1v1h-1zM13 5h1v1h-1zM4 6h1v1h-1zM6 6h2v1h-2zM9 6h2v1h-2zM13 6h1v1h-1zM4 7h1v1h-1zM13 7h1v1h-1zM4 8h1v1h-1zM6 8h5v1h-5zM13 8h1v1h-1zM4 9h1v1h-1zM13 9h1v1h-1zM4 10h1v1h-1zM6 10h4v1h-4zM13 10h1v1h-1zM4 11h1v1h-1zM13 11h1v1h-1zM4 12h1v1h-1zM13 12h1v1h-1zM4 13h10v1h-10z"/><path fill="#808000" d="M1 1h1v1h-1zM2 3h1v1h-1zM2 4h1v1h-1zM2 5h1v1h-1z"/><path fill="#ff0" d="M2 1h1v1h-1z"/><path fill="#fff" d="M5 3h8v1h-8zM5 4h1v1h-1zM11 4h2v1h-2zM5 5h8v1h-8zM5 6h1v1h-1zM8 6h1v1h-1zM11 6h2v1h-2zM5 7h8v1h-8zM5 8h1v1h-1zM11 8h2v1h-2zM5 9h8v1h-8zM5 10h1v1h-1zM10 10h3v1h-3zM5 11h8v1h-8zM5 12h8v1h-8z"/></svg><span class="t" style="left:176px;top:158px;line-height:17px;font-size:16px;color:#448686;letter-spacing:0.395px;">FichierArticle</span><svg class="ic" style="left:310px;top:129px" width="19" height="22.8" viewBox="0 0 10 12" shape-rendering="crispEdges"><path fill="#000080" d="M0 0h10v1h-10zM0 1h1v1h-1zM9 1h1v1h-1zM0 2h1v1h-1zM2 2h5v1h-5zM9 2h1v1h-1zM0 3h1v1h-1zM9 3h1v1h-1zM0 4h1v1h-1zM2 4h2v1h-2zM9 4h1v1h-1zM0 5h1v1h-1zM9 5h1v1h-1zM0 6h1v1h-1zM2 6h4v1h-4zM9 6h1v1h-1zM0 7h1v1h-1zM9 7h1v1h-1zM0 8h1v1h-1zM2 8h2v1h-2zM5 8h3v1h-3zM9 8h1v1h-1zM0 9h1v1h-1zM9 9h1v1h-1zM0 10h1v1h-1zM9 10h1v1h-1zM0 11h10v1h-10z"/><path fill="#fff" d="M1 1h8v1h-8zM1 2h1v1h-1zM7 2h2v1h-2zM1 3h8v1h-8zM1 4h1v1h-1zM4 4h5v1h-5zM1 5h8v1h-8zM1 6h1v1h-1zM6 6h3v1h-3zM1 7h8v1h-8zM1 8h1v1h-1zM4 8h1v1h-1zM8 8h1v1h-1zM1 9h8v1h-8zM1 10h8v1h-8z"/></svg><span class="t" style="left:271px;top:158px;line-height:17px;font-size:16px;color:#448686;letter-spacing:0.579px;">FichierWrite</span><svg class="ic" style="left:401px;top:129px" width="19" height="22.8" viewBox="0 0 10 12" shape-rendering="crispEdges"><path fill="#000080" d="M0 0h10v1h-10zM0 1h1v1h-1zM9 1h1v1h-1zM0 2h1v1h-1zM2 2h5v1h-5zM9 2h1v1h-1zM0 3h1v1h-1zM9 3h1v1h-1zM0 4h1v1h-1zM2 4h2v1h-2zM9 4h1v1h-1zM0 5h1v1h-1zM9 5h1v1h-1zM0 6h1v1h-1zM2 6h4v1h-4zM9 6h1v1h-1zM0 7h1v1h-1zM9 7h1v1h-1zM0 8h1v1h-1zM2 8h2v1h-2zM5 8h3v1h-3zM9 8h1v1h-1zM0 9h1v1h-1zM9 9h1v1h-1zM0 10h1v1h-1zM9 10h1v1h-1zM0 11h10v1h-10z"/><path fill="#fff" d="M1 1h8v1h-8zM1 2h1v1h-1zM7 2h2v1h-2zM1 3h8v1h-8zM1 4h1v1h-1zM4 4h5v1h-5zM1 5h8v1h-8zM1 6h1v1h-1zM6 6h3v1h-3zM1 7h8v1h-8zM1 8h1v1h-1zM4 8h1v1h-1zM8 8h1v1h-1zM1 9h8v1h-8zM1 10h8v1h-8z"/></svg><span class="t" style="left:362px;top:158px;line-height:17px;font-size:16px;color:#448686;letter-spacing:0.249px;">FichierRead</span><svg class="ic" style="left:488px;top:131px" width="26.6" height="20.9" viewBox="0 0 14 11" shape-rendering="crispEdges"><path fill="#000080" d="M2 0h12v1h-12zM1 1h13v1h-13zM0 2h14v1h-14zM0 3h1v1h-1zM12 3h2v1h-2zM0 4h1v1h-1zM2 4h2v1h-2zM5 4h2v1h-2zM9 4h1v1h-1zM12 4h2v1h-2zM0 5h1v1h-1zM3 5h3v1h-3zM8 5h2v1h-2zM12 5h2v1h-2zM0 6h1v1h-1zM3 6h3v1h-3zM9 6h1v1h-1zM12 6h2v1h-2zM0 7h1v1h-1zM3 7h3v1h-3zM9 7h1v1h-1zM12 7h2v1h-2zM0 8h1v1h-1zM2 8h2v1h-2zM5 8h2v1h-2zM8 8h3v1h-3zM12 8h2v1h-2zM0 9h1v1h-1zM12 9h2v1h-2zM0 10h13v1h-13z"/><path fill="#c0c0c0" d="M1 3h11v1h-11zM1 4h1v1h-1zM4 4h1v1h-1zM7 4h2v1h-2zM10 4h2v1h-2zM1 5h2v1h-2zM6 5h2v1h-2zM10 5h2v1h-2zM1 6h2v1h-2zM6 6h3v1h-3zM10 6h2v1h-2zM1 7h2v1h-2zM6 7h3v1h-3zM10 7h2v1h-2zM1 8h1v1h-1zM4 8h1v1h-1zM7 8h1v1h-1zM11 8h1v1h-1zM1 9h11v1h-11z"/></svg><span class="t" style="left:465.5px;top:158px;line-height:17px;font-size:16px;color:#448686;letter-spacing:0.332px;">VarEntier</span><svg class="ic" style="left:579px;top:131px" width="26.6" height="20.9" viewBox="0 0 14 11" shape-rendering="crispEdges"><path fill="#000080" d="M2 0h12v1h-12zM1 1h13v1h-13zM0 2h14v1h-14zM0 3h1v1h-1zM12 3h2v1h-2zM0 4h1v1h-1zM2 4h2v1h-2zM5 4h2v1h-2zM9 4h1v1h-1zM12 4h2v1h-2zM0 5h1v1h-1zM3 5h3v1h-3zM8 5h2v1h-2zM12 5h2v1h-2zM0 6h1v1h-1zM3 6h3v1h-3zM9 6h1v1h-1zM12 6h2v1h-2zM0 7h1v1h-1zM3 7h3v1h-3zM9 7h1v1h-1zM12 7h2v1h-2zM0 8h1v1h-1zM2 8h2v1h-2zM5 8h2v1h-2zM8 8h3v1h-3zM12 8h2v1h-2zM0 9h1v1h-1zM12 9h2v1h-2zM0 10h13v1h-13z"/><path fill="#c0c0c0" d="M1 3h11v1h-11zM1 4h1v1h-1zM4 4h1v1h-1zM7 4h2v1h-2zM10 4h2v1h-2zM1 5h2v1h-2zM6 5h2v1h-2zM10 5h2v1h-2zM1 6h2v1h-2zM6 6h3v1h-3zM10 6h2v1h-2zM1 7h2v1h-2zM6 7h3v1h-3zM10 7h2v1h-2zM1 8h1v1h-1zM4 8h1v1h-1zM7 8h1v1h-1zM11 8h1v1h-1zM1 9h11v1h-11z"/></svg><span class="t" style="left:560.5px;top:158px;line-height:17px;font-size:16px;color:#448686;letter-spacing:0.125px;">VarReal</span><svg class="ic" style="left:670px;top:131px" width="26.6" height="20.9" viewBox="0 0 14 11" shape-rendering="crispEdges"><path fill="#000080" d="M2 0h12v1h-12zM1 1h13v1h-13zM0 2h14v1h-14zM0 3h1v1h-1zM12 3h2v1h-2zM0 4h1v1h-1zM2 4h2v1h-2zM5 4h2v1h-2zM9 4h1v1h-1zM12 4h2v1h-2zM0 5h1v1h-1zM3 5h3v1h-3zM8 5h2v1h-2zM12 5h2v1h-2zM0 6h1v1h-1zM3 6h3v1h-3zM9 6h1v1h-1zM12 6h2v1h-2zM0 7h1v1h-1zM3 7h3v1h-3zM9 7h1v1h-1zM12 7h2v1h-2zM0 8h1v1h-1zM2 8h2v1h-2zM5 8h2v1h-2zM8 8h3v1h-3zM12 8h2v1h-2zM0 9h1v1h-1zM12 9h2v1h-2zM0 10h13v1h-13z"/><path fill="#c0c0c0" d="M1 3h11v1h-11zM1 4h1v1h-1zM4 4h1v1h-1zM7 4h2v1h-2zM10 4h2v1h-2zM1 5h2v1h-2zM6 5h2v1h-2zM10 5h2v1h-2zM1 6h2v1h-2zM6 6h3v1h-3zM10 6h2v1h-2zM1 7h2v1h-2zM6 7h3v1h-3zM10 7h2v1h-2zM1 8h1v1h-1zM4 8h1v1h-1zM7 8h1v1h-1zM11 8h1v1h-1zM1 9h11v1h-11z"/></svg><span class="t" style="left:651.5px;top:158px;line-height:17px;font-size:16px;color:#448686;letter-spacing:0.167px;">VarNom</span><svg class="ic" style="left:762px;top:131px" width="26.6" height="20.9" viewBox="0 0 14 11" shape-rendering="crispEdges"><path fill="#000080" d="M2 0h12v1h-12zM1 1h13v1h-13zM0 2h14v1h-14zM0 3h1v1h-1zM12 3h2v1h-2zM0 4h1v1h-1zM2 4h2v1h-2zM5 4h2v1h-2zM9 4h1v1h-1zM12 4h2v1h-2zM0 5h1v1h-1zM3 5h3v1h-3zM8 5h2v1h-2zM12 5h2v1h-2zM0 6h1v1h-1zM3 6h3v1h-3zM9 6h1v1h-1zM12 6h2v1h-2zM0 7h1v1h-1zM3 7h3v1h-3zM9 7h1v1h-1zM12 7h2v1h-2zM0 8h1v1h-1zM2 8h2v1h-2zM5 8h2v1h-2zM8 8h3v1h-3zM12 8h2v1h-2zM0 9h1v1h-1zM12 9h2v1h-2zM0 10h13v1h-13z"/><path fill="#c0c0c0" d="M1 3h11v1h-11zM1 4h1v1h-1zM4 4h1v1h-1zM7 4h2v1h-2zM10 4h2v1h-2zM1 5h2v1h-2zM6 5h2v1h-2zM10 5h2v1h-2zM1 6h2v1h-2zM6 6h3v1h-3zM10 6h2v1h-2zM1 7h2v1h-2zM6 7h3v1h-3zM10 7h2v1h-2zM1 8h1v1h-1zM4 8h1v1h-1zM7 8h1v1h-1zM11 8h1v1h-1zM1 9h11v1h-11z"/></svg><span class="t" style="left:734px;top:158px;line-height:17px;font-size:16px;color:#448686;letter-spacing:0.286px;">VarChaine</span><svg class="ic" style="left:853px;top:127px" width="26.6" height="26.6" viewBox="0 0 14 14" shape-rendering="crispEdges"><path fill="#000080" d="M0 0h14v1h-14zM0 1h1v1h-1zM13 1h1v1h-1zM0 2h1v1h-1zM6 2h6v1h-6zM13 2h1v1h-1zM0 3h1v1h-1zM6 3h6v1h-6zM13 3h1v1h-1zM0 4h1v1h-1zM6 4h1v1h-1zM13 4h1v1h-1zM0 5h1v1h-1zM5 5h1v1h-1zM13 5h1v1h-1zM0 6h1v1h-1zM5 6h1v1h-1zM13 6h1v1h-1zM0 7h1v1h-1zM5 7h1v1h-1zM7 7h2v1h-2zM10 7h2v1h-2zM13 7h1v1h-1zM0 8h1v1h-1zM2 8h1v1h-1zM4 8h2v1h-2zM8 8h1v1h-1zM10 8h1v1h-1zM13 8h1v1h-1zM0 9h1v1h-1zM2 9h3v1h-3zM9 9h1v1h-1zM13 9h1v1h-1zM0 10h1v1h-1zM3 10h2v1h-2zM8 10h1v1h-1zM10 10h1v1h-1zM13 10h1v1h-1zM0 11h1v1h-1zM4 11h1v1h-1zM7 11h2v1h-2zM10 11h2v1h-2zM13 11h1v1h-1zM0 12h1v1h-1zM13 12h1v1h-1zM0 13h14v1h-14z"/><path fill="#c0c0c0" d="M1 1h12v1h-12zM1 2h5v1h-5zM12 2h1v1h-1zM1 3h5v1h-5zM12 3h1v1h-1zM1 4h5v1h-5zM7 4h6v1h-6zM1 5h4v1h-4zM6 5h7v1h-7zM1 6h4v1h-4zM6 6h7v1h-7zM1 7h4v1h-4zM6 7h1v1h-1zM9 7h1v1h-1zM12 7h1v1h-1zM1 8h1v1h-1zM3 8h1v1h-1zM6 8h2v1h-2zM9 8h1v1h-1zM11 8h2v1h-2zM1 9h1v1h-1zM5 9h4v1h-4zM10 9h3v1h-3zM1 10h2v1h-2zM5 10h3v1h-3zM9 10h1v1h-1zM11 10h2v1h-2zM1 11h3v1h-3zM5 11h2v1h-2zM9 11h1v1h-1zM12 11h1v1h-1zM1 12h12v1h-12z"/></svg><span class="t" style="left:832px;top:158px;line-height:17px;font-size:16px;color:#448686;letter-spacing:0.203px;">Fonction</span><svg class="ic" style="left:944px;top:127px" width="26.6" height="26.6" viewBox="0 0 14 14" shape-rendering="crispEdges"><path fill="#000080" d="M1 0h2v1h-2zM0 1h1v1h-1zM3 1h1v1h-1zM0 2h1v1h-1zM3 2h1v1h-1zM1 3h2v1h-2zM2 4h1v1h-1zM2 5h1v1h-1zM2 6h1v1h-1zM6 6h6v1h-6zM2 7h1v1h-1zM6 7h1v1h-1zM11 7h1v1h-1zM2 8h1v1h-1zM6 8h1v1h-1zM11 8h1v1h-1zM2 9h1v1h-1zM6 9h1v1h-1zM11 9h1v1h-1zM2 10h1v1h-1zM6 10h1v1h-1zM11 10h2v1h-2zM2 11h5v1h-5zM10 11h1v1h-1zM13 11h1v1h-1zM10 12h1v1h-1zM13 12h1v1h-1zM11 13h2v1h-2z"/><path fill="#f0f" d="M1 1h2v1h-2zM1 2h2v1h-2zM11 11h2v1h-2zM11 12h2v1h-2z"/></svg><span class="t" style="left:927px;top:158px;line-height:17px;font-size:16px;color:#448686;letter-spacing:0.143px;">Chemin</span><svg class="ic" style="left:38px;top:218px" width="15.2" height="9.5" viewBox="0 0 8 5" shape-rendering="crispEdges"><path fill="#000080" d="M2 0h4v1h-4zM1 1h1v1h-1zM6 1h1v1h-1zM0 2h1v1h-1zM3 2h2v1h-2zM7 2h1v1h-1zM0 3h1v1h-1zM3 3h2v1h-2zM7 3h1v1h-1zM0 4h1v1h-1zM7 4h1v1h-1z"/><path fill="#808000" d="M2 1h4v1h-4zM1 2h2v1h-2zM5 2h2v1h-2zM1 3h2v1h-2zM5 3h2v1h-2zM1 4h6v1h-6z"/></svg><svg class="ic" style="left:129px;top:218px" width="15.2" height="9.5" viewBox="0 0 8 5" shape-rendering="crispEdges"><path fill="#000080" d="M2 0h4v1h-4zM1 1h1v1h-1zM6 1h1v1h-1zM0 2h1v1h-1zM3 2h2v1h-2zM7 2h1v1h-1zM0 3h1v1h-1zM3 3h2v1h-2zM7 3h1v1h-1zM0 4h1v1h-1zM7 4h1v1h-1z"/><path fill="#808000" d="M2 1h4v1h-4zM1 2h2v1h-2zM5 2h2v1h-2zM1 3h2v1h-2zM5 3h2v1h-2zM1 4h6v1h-6z"/></svg><svg class="ic" style="left:220px;top:218px" width="15.2" height="9.5" viewBox="0 0 8 5" shape-rendering="crispEdges"><path fill="#000080" d="M2 0h4v1h-4zM1 1h1v1h-1zM6 1h1v1h-1zM0 2h1v1h-1zM3 2h2v1h-2zM7 2h1v1h-1zM0 3h1v1h-1zM3 3h2v1h-2zM7 3h1v1h-1zM0 4h1v1h-1zM7 4h1v1h-1z"/><path fill="#808000" d="M2 1h4v1h-4zM1 2h2v1h-2zM5 2h2v1h-2zM1 3h2v1h-2zM5 3h2v1h-2zM1 4h6v1h-6z"/></svg><svg class="ic" style="left:312px;top:218px" width="15.2" height="9.5" viewBox="0 0 8 5" shape-rendering="crispEdges"><path fill="#000080" d="M2 0h4v1h-4zM1 1h1v1h-1zM6 1h1v1h-1zM0 2h1v1h-1zM3 2h2v1h-2zM7 2h1v1h-1zM0 3h1v1h-1zM3 3h2v1h-2zM7 3h1v1h-1zM0 4h1v1h-1zM7 4h1v1h-1z"/><path fill="#808000" d="M2 1h4v1h-4zM1 2h2v1h-2zM5 2h2v1h-2zM1 3h2v1h-2zM5 3h2v1h-2zM1 4h6v1h-6z"/></svg><svg class="ic" style="left:403px;top:218px" width="15.2" height="9.5" viewBox="0 0 8 5" shape-rendering="crispEdges"><path fill="#000080" d="M2 0h4v1h-4zM1 1h1v1h-1zM6 1h1v1h-1zM0 2h1v1h-1zM3 2h2v1h-2zM7 2h1v1h-1zM0 3h1v1h-1zM3 3h2v1h-2zM7 3h1v1h-1zM0 4h1v1h-1zM7 4h1v1h-1z"/><path fill="#808000" d="M2 1h4v1h-4zM1 2h2v1h-2zM5 2h2v1h-2zM1 3h2v1h-2zM5 3h2v1h-2zM1 4h6v1h-6z"/></svg><svg class="ic" style="left:488px;top:218px" width="26.6" height="9.5" viewBox="0 0 14 5" shape-rendering="crispEdges"><path fill="#000080" d="M1 0h2v1h-2zM11 0h2v1h-2zM0 1h1v1h-1zM3 1h1v1h-1zM10 1h1v1h-1zM13 1h1v1h-1zM0 2h1v1h-1zM3 2h8v1h-8zM13 2h1v1h-1zM0 3h1v1h-1zM3 3h1v1h-1zM10 3h1v1h-1zM13 3h1v1h-1zM1 4h2v1h-2zM11 4h2v1h-2z"/><path fill="#f0f" d="M1 1h2v1h-2zM11 1h2v1h-2zM1 2h2v1h-2zM11 2h2v1h-2zM1 3h2v1h-2zM11 3h2v1h-2z"/></svg><svg class="ic" style="left:670px;top:218px" width="7.6" height="7.6" viewBox="0 0 4 4" shape-rendering="crispEdges"><path fill="#000080" d="M1 0h2v1h-2zM0 1h1v1h-1zM3 1h1v1h-1zM0 2h1v1h-1zM3 2h1v1h-1zM1 3h2v1h-2z"/><path fill="#f0f" d="M1 1h2v1h-2zM1 2h2v1h-2z"/></svg><svg class="ic" style="left:762px;top:218px" width="26.6" height="9.5" viewBox="0 0 14 5" shape-rendering="crispEdges"><path fill="#000080" d="M1 0h2v1h-2zM11 0h2v1h-2zM0 1h1v1h-1zM3 1h1v1h-1zM10 1h1v1h-1zM13 1h1v1h-1zM0 2h1v1h-1zM3 2h8v1h-8zM13 2h1v1h-1zM0 3h1v1h-1zM3 3h1v1h-1zM10 3h1v1h-1zM13 3h1v1h-1zM1 4h2v1h-2zM11 4h2v1h-2z"/><path fill="#f0f" d="M1 1h2v1h-2zM11 1h2v1h-2zM1 2h2v1h-2zM11 2h2v1h-2zM1 3h2v1h-2zM11 3h2v1h-2z"/></svg></div><div style="left:0px;top:881px;width:1430px;height:1px;background:#ebe9ed"></div><div style="left:3px;top:884px;width:3px;height:25px;border-left:1px solid #fff;border-top:1px solid #fff;border-right:1px solid #a6a4a8;border-bottom:1px solid #a6a4a8"></div><div style="left:7px;top:884px;width:3px;height:25px;border-left:1px solid #fff;border-top:1px solid #fff;border-right:1px solid #a6a4a8;border-bottom:1px solid #a6a4a8"></div><svg class="ab" style="left:16px;top:890px" width="12" height="11"><path d="M0 0H2V11H0ZM7 0V11L2 5.5ZM12 0V11L7 5.5Z" fill="#000" /></svg><svg class="ab" style="left:40px;top:890px" width="11" height="11"><path d="M0 0H2V11H0ZM10 0V11L3 5.5Z" fill="#a0a0a0" /></svg><div style="left:61px;top:885px;width:1px;height:22px;background:#a6a4a8"></div><div style="left:62px;top:885px;width:1px;height:22px;background:#fff"></div><div style="left:71px;top:891px;width:9px;height:9px;background:#000"></div><div style="left:93px;top:890px;width:11px;height:11px;background:#f00;border-radius:50%"></div><svg class="ab" style="left:118px;top:890px" width="12" height="11"><path d="M0 0H4V11H0ZM5 0L11 5.5L5 11Z" fill="#000" /></svg><svg class="ab" style="left:142px;top:890px" width="7" height="11"><path d="M0 0L6.5 5.5L0 11Z" fill="#000" /></svg><div style="left:161px;top:885px;width:1px;height:22px;background:#a6a4a8"></div><div style="left:162px;top:885px;width:1px;height:22px;background:#fff"></div><svg class="ab" style="left:171px;top:890px" width="11" height="11"><path d="M0 0L7 5.5L0 11ZM8 0H10V11H8Z" fill="#a0a0a0" /></svg><svg class="ab" style="left:193px;top:890px" width="12" height="11"><path d="M0 0L6 5.5L0 11ZM6 0L12 5.5L6 11Z" fill="#000" /></svg><div style="left:214px;top:885px;width:1px;height:22px;background:#a6a4a8"></div><div style="left:215px;top:885px;width:1px;height:22px;background:#fff"></div><div style="left:220px;top:885px;width:22px;height:21px;background:repeating-conic-gradient(#fff 0 25%,#ebe9ed 0 50%) 0 0/2px 2px;border:1px solid;border-color:#808080 #fff #fff #808080"></div><svg class="ab" style="left:223px;top:887px" width="16" height="17" viewBox="0 0 16 17"><circle cx="8" cy="9.5" r="5.5" fill="#fff" stroke="#000"/><path d="M8 6V9.5H11" stroke="#000" fill="none"/><path d="M6 1.5H10M8 1.5V4M2 5L4 3M14 5L12 3M3 16L5 14M13 16L11 14" stroke="#000" fill="none"/></svg><div style="left:244px;top:886px;width:69px;height:20px;background:#fff;border:1px solid;border-color:#808080 #fff #fff #808080;box-shadow:inset 1px 1px 0 #6a6a6e"></div><svg class="ab" style="left:319px;top:887px" width="12" height="17" viewBox="0 0 12 17"><circle cx="6.500" cy="2.500" r="2" fill="#fff" stroke="#000"/><path d="M6.500 5L5.500 10L2 16M5.500 10L9 15.500M6.500 6L3 9.500M6.500 6L10 9" stroke="#000" stroke-width="2.400" fill="none"/></svg><div style="left:337px;top:886px;width:71px;height:20px;background:repeating-conic-gradient(#fff 0 25%,#ebe9ed 0 50%) 0 0/2px 2px"></div><div class="btn3d" style="left:337px;top:886px;width:17px;height:20px;"></div><svg class="ab" style="left:342px;top:892px" width="5" height="8"><path d="M5 0V8L0 4Z" fill="#000" /></svg><div class="btn3d" style="left:354px;top:886px;width:17px;height:20px;"></div><div class="btn3d" style="left:391px;top:886px;width:17px;height:20px;"></div><svg class="ab" style="left:397px;top:892px" width="5" height="8"><path d="M0 0V8L5 4Z" fill="#000" /></svg><svg class="ab" style="left:412px;top:886px" width="17" height="18" viewBox="0 0 17 18"><rect x="5.5" y="1.5" width="11" height="11" fill="#ffffc0" stroke="#000"/><rect x="3.5" y="3.5" width="11" height="11" fill="#c0c0c0" stroke="#000"/><rect x="0.5" y="6.5" width="11" height="11" fill="#808080" stroke="#000"/><rect x="3" y="7" width="6" height="4" fill="#fff"/><rect x="3" y="13" width="6" height="4" fill="#000"/></svg><svg class="ab" style="left:434px;top:887px" width="17" height="16" viewBox="0 0 17 16"><circle cx="10.5" cy="8" r="5.5" fill="#e00000" stroke="#800000"/><path d="M8 6H13M8 10H13M10.5 3V13" stroke="#800000"/><path d="M0 5H5M0 8H4M0 11H5" stroke="#e8d000" stroke-width="1.5"/></svg><div style="left:458px;top:885px;width:1px;height:22px;background:#a6a4a8"></div><div style="left:459px;top:885px;width:1px;height:22px;background:#fff"></div><div class="sunk2" style="left:464px;top:886px;width:45px;height:19px;"></div><span class="t" style="left:467.5px;top:889.5px;line-height:12px;font-size:11px;color:#000;letter-spacing:-0.411px;">Temps:</span><div class="sunk2" style="left:511px;top:886px;width:71px;height:19px;"></div><span class="t" style="left:514.5px;top:889.5px;line-height:12px;font-size:11px;color:#000;letter-spacing:-0.056px;">374049.00</span><div style="left:589px;top:883px;width:1px;height:26px;background:#a6a4a8"></div><div style="left:590px;top:883px;width:1px;height:26px;background:#fff"></div><div style="left:594px;top:884px;width:3px;height:25px;border-left:1px solid #fff;border-top:1px solid #fff;border-right:1px solid #a6a4a8;border-bottom:1px solid #a6a4a8"></div><div style="left:598px;top:884px;width:3px;height:25px;border-left:1px solid #fff;border-top:1px solid #fff;border-right:1px solid #a6a4a8;border-bottom:1px solid #a6a4a8"></div><svg class="ab" style="left:605px;top:886px" width="17" height="18" viewBox="0 0 17 18"><path d="M3.5 2.5H12.5V15.5H3.5Z" fill="none" stroke="#a6a4a8"/><path d="M1.5 4.5V17.5H10.5" fill="none" stroke="#a6a4a8"/><path d="M5 6H11M5 8H11M5 10H11M5 12H11" stroke="#a6a4a8"/></svg><svg class="ab" style="left:628px;top:886px" width="17" height="18" viewBox="0 0 17 18"><path d="M2.5 3.5H12.5V16.5H2.5Z" fill="none" stroke="#a6a4a8"/><path d="M4 2V5M7 2V5M10 2V5M4 8H11M4 10H11M4 12H11M4 14H11" stroke="#a6a4a8"/></svg><svg class="ab" style="left:650px;top:886px" width="17" height="18" viewBox="0 0 17 18"><path d="M1.5 2.5H10.5V15.5H1.5Z" fill="none" stroke="#a6a4a8"/><path d="M3 5H9M3 7H9M3 9H6" stroke="#a6a4a8"/><circle cx="10" cy="10" r="3.5" fill="#ebe9ed" stroke="#a6a4a8"/><path d="M12.5 12.5L16 16" stroke="#a6a4a8" stroke-width="2"/></svg><svg class="ab" style="left:674px;top:886px" width="17" height="18" viewBox="0 0 17 18"><rect x="0.5" y="6.5" width="5" height="5" fill="none" stroke="#a6a4a8"/><rect x="10.5" y="1.5" width="5" height="5" fill="none" stroke="#a6a4a8"/><rect x="10.5" y="11.5" width="5" height="5" fill="none" stroke="#a6a4a8"/><path d="M6 9H8M8 4V14M8 4H10M8 14H10" fill="none" stroke="#a6a4a8"/></svg><div style="left:698px;top:885px;width:1px;height:22px;background:#a6a4a8"></div><div style="left:699px;top:885px;width:1px;height:22px;background:#fff"></div><svg class="ab" style="left:704px;top:886px" width="17" height="18" viewBox="0 0 17 18"><path d="M1.5 3.5H10.5V15.5H1.5Z" fill="#c8c6ca" stroke="#a6a4a8"/><path d="M3.5 1.5H12.5V8" fill="none" stroke="#a6a4a8"/><path d="M8 10H12V7.5L16 11.5L12 15.5V13H8Z" fill="#a6a4a8"/></svg><div style="left:725px;top:885px;width:22px;height:21px;background:repeating-conic-gradient(#fff 0 25%,#ebe9ed 0 50%) 0 0/2px 2px;border:1px solid;border-color:#808080 #fff #fff #808080"></div><svg class="ab" style="left:728px;top:887px" width="16" height="17" viewBox="0 0 16 17"><circle cx="8" cy="9.5" r="5.5" fill="#fff" stroke="#000"/><path d="M8 4V9.5M5 9.5H11" stroke="#000" fill="none"/><path d="M6 1.5H10M8 1.5V4M3 16L5 14M13 16L11 14" stroke="#000" fill="none"/></svg><div style="left:752px;top:885px;width:1px;height:22px;background:#a6a4a8"></div><div style="left:753px;top:885px;width:1px;height:22px;background:#fff"></div><svg class="ab" style="left:759px;top:886px" width="17" height="18" viewBox="0 0 17 18"><path d="M2 6C2 2 15 2 15 6V8H11V6H6V8H2Z" fill="none" stroke="#a6a4a8"/><path d="M3.5 9.5H13.5V15.5H3.5Z" fill="none" stroke="#a6a4a8"/><path d="M5 11H12M5 13H12" stroke="#a6a4a8"/><path d="M0 16L6 10" stroke="#a6a4a8"/></svg><svg class="ab" style="left:782px;top:886px" width="17" height="18" viewBox="0 0 17 18"><path d="M3 9C0 3 6 1 10 2C16 3 16 9 11 10" fill="none" stroke="#000" stroke-width="1.6"/><path d="M8 7L11 10.5L7 12" fill="none" stroke="#000" stroke-width="1.4"/><rect x="1.5" y="13.5" width="3" height="3" fill="#fff" stroke="#000"/><rect x="7.5" y="13.5" width="3" height="3" fill="#fff" stroke="#000"/></svg><div style="left:807px;top:885px;width:1px;height:22px;background:#a6a4a8"></div><div style="left:808px;top:885px;width:1px;height:22px;background:#fff"></div><svg class="ab" style="left:813px;top:886px" width="17" height="18" viewBox="0 0 17 18"><path d="M1 3H15M6 6H15M6 9H15M6 12H15M1 15H15" stroke="#a6a4a8" stroke-width="1.5"/><path d="M1 6.5L4.5 9L1 11.5Z" fill="#a6a4a8"/></svg><div style="left:839px;top:883px;width:1px;height:26px;background:#a6a4a8"></div><div style="left:840px;top:883px;width:1px;height:26px;background:#fff"></div><div style="left:0px;top:910px;width:1430px;height:1px;background:#a6a4a8"></div><div style="left:0px;top:911px;width:1430px;height:1px;background:#fff"></div><span class="t" style="left:2px;top:915.5px;line-height:12px;font-size:11px;color:#000;letter-spacing:-0.441px;">Aucun</span><div style="left:0px;top:929px;width:1430px;height:1px;background:#faf6f2"></div><div style="left:0px;top:930px;width:1430px;height:30px;background:linear-gradient(#2840a0 0,#2840a0 1px,#98ccf4 1px,#98ccf4 2px,#84c0ec 2px,#80bcec 6px,#6ca8e8 10px,#5c98e0 15px,#5a96de 16px,#3a7cd0 16px,#3670c8 20px,#3060b8 25px,#2c54b0 29px,#28449c 29px)"></div><div style="left:0px;top:930px;width:137px;height:30px;border-radius:0 15px 15px 0/0 17px 17px 0;background:linear-gradient(#2c7c2c 0,#86cc86 2px,#5cb45c 4px,#3e9e3e 8px,#349834 13px,#2ca42c 19px,#18bc18 25px,#0cc40c 28px,#10a810 30px);box-shadow:1px 0 2px #1c3c8c"></div><svg class="ab" style="left:10px;top:935px" width="20" height="19" viewBox="0 0 20 19"><path d="M2.5 2.5C5 1 7 1.5 9 3L7.8 8.5C6 7 4 6.8 1.5 8Z" fill="#f05c28"/><path d="M10 3.5C12 5 14.5 5 17 3.5L15.800 9C13.500 10.500 11 10.300 8.800 9Z" fill="#84cc3c"/><path d="M1.300 9.200C3.800 8 5.800 8.300 7.600 9.600L6.400 15C4.500 13.500 2.500 13.300 0 14.500Z" fill="#4a8cf0"/><path d="M8.600 10.200C10.800 11.500 13.300 11.500 15.600 10.200L14.400 15.600C12 17 9.600 16.800 7.400 15.500Z" fill="#f8cc30"/></svg><span class="t" style="left:34.5px;top:935px;line-height:20px;font-size:18px;color:#fff;font-weight:bold;font-style:italic;letter-spacing:-0.131px;text-shadow:1px 1px 1px #1c501c;">démarrer</span><div style="left:147px;top:934px;width:157px;height:24px;border-radius:3px;border:1px solid #5c70c4;border-bottom-color:#142c80;background:linear-gradient(#8cc4f0 0,#80b8ec 3px,#68a4e8 7px,#5c98e4 11px,#3a7cd4 11px,#346cc8 16px,#2c58b4 22px)"></div><svg class="ab" style="left:156.5px;top:939px" width="16" height="13" viewBox="0 0 16 13"><rect x="0" y="0" width="16" height="13" fill="#000"/><rect x="1" y="1" width="14" height="11" fill="#fff"/><path d="M2.500 4C2.500 8 4.500 10.500 8 9.500" stroke="#0a9a8a" stroke-width="1.400" fill="none"/><path d="M5 5C5 8 6 10 8 9.500C9.500 9 10 7 10 5.500" stroke="#3a2a9c" stroke-width="1.300" fill="none"/><path d="M6 10.500C9.500 11 12.500 7.500 14 2.500" stroke="#9a2ab0" stroke-width="1.500" fill="none"/><path d="M9 8C10.500 7 12 5 12.500 3" stroke="#1a8a9a" stroke-width="0.800" fill="none"/></svg><span class="t" style="left:175.5px;top:939px;line-height:12px;font-size:11px;color:#fff;letter-spacing:-0.364px;">WITNESS (JETTY : O...</span><div style="left:306px;top:934px;width:157px;height:24px;border-radius:3px;background:linear-gradient(#000850 0,#000850 1px,#4c74b4 1px,#3460a4 3px,#20509c 6px,#1e4c98 12px,#0c3484 12px,#0e3688 18px,#103890 23px,#9cb4e0 23px);border-left:1px solid #0a1c6c"></div><svg class="ab" style="left:315.5px;top:939px" width="16" height="13" viewBox="0 0 16 13"><rect x="0" y="0" width="16" height="13" fill="#000"/><rect x="1" y="1" width="14" height="11" fill="#fff"/><path d="M2.500 4C2.500 8 4.500 10.500 8 9.500" stroke="#0a9a8a" stroke-width="1.400" fill="none"/><path d="M5 5C5 8 6 10 8 9.500C9.500 9 10 7 10 5.500" stroke="#3a2a9c" stroke-width="1.300" fill="none"/><path d="M6 10.500C9.500 11 12.500 7.500 14 2.500" stroke="#9a2ab0" stroke-width="1.500" fill="none"/><path d="M9 8C10.500 7 12 5 12.500 3" stroke="#1a8a9a" stroke-width="0.800" fill="none"/></svg><span class="t" style="left:334.5px;top:939px;line-height:12px;font-size:11px;color:#fff;letter-spacing:-0.246px;">WITNESS (M5 : Modél...</span><div style="left:466px;top:934px;width:157px;height:24px;border-radius:3px;border:1px solid #5c70c4;border-bottom-color:#142c80;background:linear-gradient(#8cc4f0 0,#80b8ec 3px,#68a4e8 7px,#5c98e4 11px,#3a7cd4 11px,#346cc8 16px,#2c58b4 22px)"></div><svg class="ab" style="left:475.5px;top:937px" width="16" height="16" viewBox="0 0 16 16"><path d="M3.500 0.500H11.500L15.500 4.500V15.500H3.500Z" fill="#fff" stroke="#6080b0"/><path d="M6 7H13M6 9H13M6 11H13M6 13H13" stroke="#8098c0"/><rect x="0" y="3" width="9" height="9" fill="#2a52a8"/></svg><span class="t" style="left:476px;top:940px;line-height:10px;font-size:9px;color:#fff;font-weight:bold;">W</span><span class="t" style="left:494.5px;top:939px;line-height:12px;font-size:11px;color:#fff;letter-spacing:-0.048px;">TP1.doc - Microsoft ...</span><div style="left:626px;top:934px;width:157px;height:24px;border-radius:3px;border:1px solid #5c70c4;border-bottom-color:#142c80;background:linear-gradient(#8cc4f0 0,#80b8ec 3px,#68a4e8 7px,#5c98e4 11px,#3a7cd4 11px,#346cc8 16px,#2c58b4 22px)"></div><svg class="ab" style="left:635.5px;top:937px" width="16" height="16" viewBox="0 0 16 16"><ellipse cx="8" cy="14" rx="7" ry="2" fill="#303030"/><circle cx="8" cy="6.500" r="6" fill="#b8bcc4" stroke="#404040"/><circle cx="8" cy="6.500" r="3" fill="#202020"/><circle cx="7" cy="5.500" r="1" fill="#fff"/></svg><span class="t" style="left:654.5px;top:939px;line-height:12px;font-size:11px;color:#fff;letter-spacing:-0.324px;">Logitech QuickCam</span><div style="left:785.5px;top:934px;width:157px;height:24px;border-radius:3px;border:1px solid #5c70c4;border-bottom-color:#142c80;background:linear-gradient(#8cc4f0 0,#80b8ec 3px,#68a4e8 7px,#5c98e4 11px,#3a7cd4 11px,#346cc8 16px,#2c58b4 22px)"></div><svg class="ab" style="left:795px;top:937px" width="16" height="16" viewBox="0 0 16 16"><circle cx="8" cy="8" r="7.500" fill="#5c8cd0"/><path d="M2 6C4 1 12 1 14 5C11 4 9 5 8 8C6 6 4 6 2 6Z" fill="#d8e4f4"/><path d="M3 10L8 13L13 9L12 14H4Z" fill="#f0e8d0"/><path d="M1 9C2 14 8 16 12 14C8 14 4 12 3 8Z" fill="#e8a030"/></svg><span class="t" style="left:814px;top:939px;line-height:12px;font-size:11px;color:#fff;letter-spacing:0.120px;">Courrier entrant - Th...</span><div style="left:945px;top:934px;width:157px;height:24px;border-radius:3px;border:1px solid #5c70c4;border-bottom-color:#142c80;background:linear-gradient(#8cc4f0 0,#80b8ec 3px,#68a4e8 7px,#5c98e4 11px,#3a7cd4 11px,#346cc8 16px,#2c58b4 22px)"></div><svg class="ab" style="left:954.5px;top:936px" width="16" height="18" viewBox="0 0 16 18"><path d="M4 8H12L11 17H5Z" fill="#d8d8e0" stroke="#808890"/><path d="M5 8L2 1" stroke="#d04020" stroke-width="2"/><path d="M8 8L8 0" stroke="#e8b020" stroke-width="2"/><path d="M10 8L13 1" stroke="#40a040" stroke-width="2"/><path d="M7 8L5 2" stroke="#3060c0" stroke-width="1.500"/></svg><span class="t" style="left:973.5px;top:939px;line-height:12px;font-size:11px;color:#fff;letter-spacing:-0.074px;">Sans titre - Paint</span><div style="left:1265px;top:930px;width:165px;height:30px;background:linear-gradient(#2840a0 0,#2840a0 1px,#a4ccf4 1px,#b4d6f8 3px,#dceafc 6px,#f0f6fe 8px,#f4f8fe 16px,#d4e2f8 19px,#a8c4ee 22px,#7ca4e0 25px,#5c88d4 27px,#4068c0 29px,#28449c 29px)"></div><div style="left:1237px;top:938px;width:13px;height:16px;background:#3058b8"></div><span class="t" style="left:1237.5px;top:941px;line-height:11px;font-size:10px;color:#fff;letter-spacing:-0.422px;">FR</span><svg class="ab" style="left:1256px;top:935px" width="20" height="20" viewBox="0 0 20 20"><circle cx="10" cy="10" r="8.500" fill="#e4eefc" stroke="#a8c4f0" stroke-width="1.500"/><path d="M12 6L8 10L12 14" stroke="#3468d0" stroke-width="2.200" fill="none"/></svg><svg class="ab" style="left:1277px;top:937px" width="16" height="16" viewBox="0 0 16 16"><path d="M1 1H15V8C15 12 11 15 8 16C5 15 1 12 1 8Z" fill="#c02020" stroke="#801010"/><ellipse cx="8" cy="8.5" rx="3" ry="4" fill="#f0d020"/><path d="M4 5L6 7M12 5L10 7M3.5 9H5M12.5 9H11M4 13L6 11M12 13L10 11" stroke="#f0d020"/></svg><svg class="ab" style="left:1294px;top:937px" width="16" height="16" viewBox="0 0 16 16"><circle cx="7" cy="7" r="6" fill="#909498" stroke="#404448"/><circle cx="6" cy="6" r="3" fill="#d0d4d8"/><path d="M9 13C12 13 14 11 14.5 8" stroke="#c0a0e0" stroke-width="1.5" fill="none"/></svg><svg class="ab" style="left:1312px;top:937px" width="16" height="16" viewBox="0 0 16 16"><circle cx="8" cy="8" r="7.5" fill="#48b838"/><path d="M4 8C4 5 7 4 10 5L9 3.5M12 8C12 11 9 12 6 11L7 12.5" stroke="#e8f8e0" stroke-width="1.8" fill="none"/></svg><svg class="ab" style="left:1330px;top:937px" width="16" height="16" viewBox="0 0 16 16"><path d="M1 1H15V8C15 12 11 15 8 16C5 15 1 12 1 8Z" fill="#d83030" stroke="#c0c8e0" stroke-width="1.5"/><path d="M5.5 5.5L10.5 10.5M10.5 5.5L5.5 10.5" stroke="#fff" stroke-width="2"/></svg><svg class="ab" style="left:1348px;top:937px" width="16" height="16" viewBox="0 0 16 16"><path d="M1 11L9 2L15 8L7 16Z" fill="#e8d820" stroke="#504800"/><path d="M4 10L10 4M6 12L12 6M8 14L13 8" stroke="#807000"/></svg><svg class="ab" style="left:1366px;top:937px" width="16" height="16" viewBox="0 0 16 16"><circle cx="7" cy="9" r="6" fill="#e8e8e8" stroke="#202020" stroke-width="1.5"/><path d="M4 8L7 12L15 1" stroke="#d02020" stroke-width="2" fill="none"/><rect x="9" y="3" width="5" height="8" fill="none" stroke="#202020"/></svg><span class="t" style="left:1389px;top:939px;line-height:12px;font-size:11px;color:#000;letter-spacing:-0.006px;">18:16</span></body></html>
